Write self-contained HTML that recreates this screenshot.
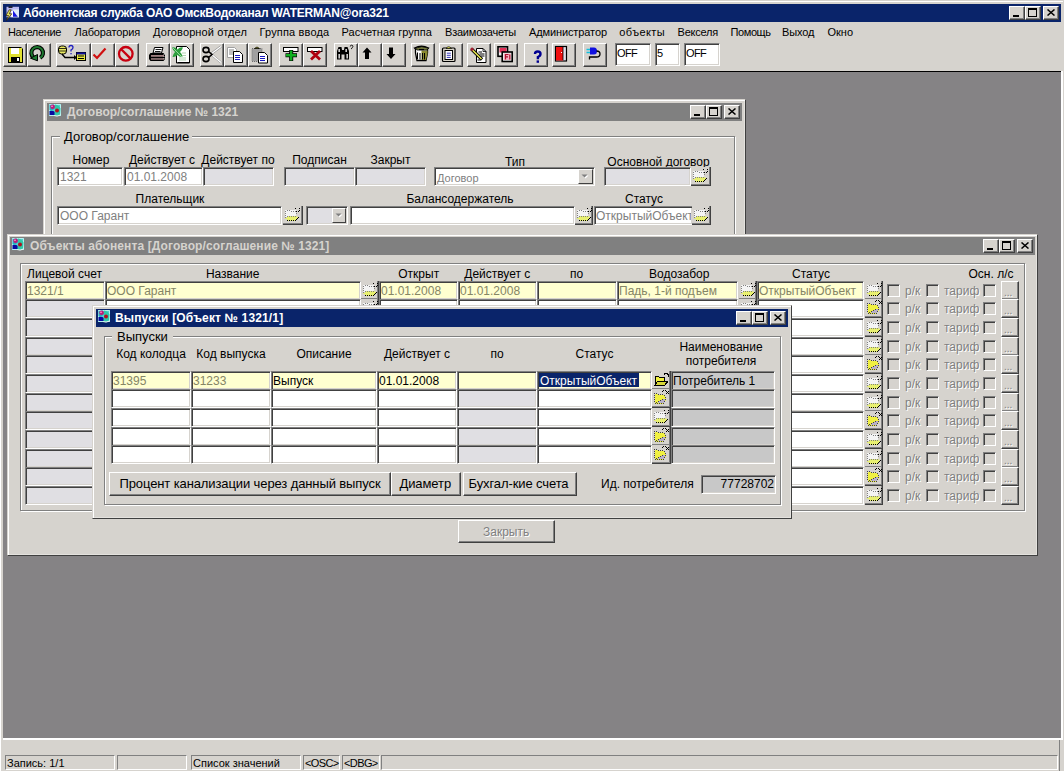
<!DOCTYPE html><html><head><meta charset="utf-8"><style>
html,body{margin:0;padding:0;width:1064px;height:771px;overflow:hidden;background:#D6D3CE;position:relative;font-family:"Liberation Sans",sans-serif;}
body div, body svg{position:absolute;}
.t{white-space:nowrap;}
</style></head><body>
<div style="left:0px;top:0px;width:1064px;height:771px;background:#D6D3CE;"></div>
<div style="left:1px;top:1px;width:1062px;height:1px;background:#FFFFFF;"></div>
<div style="left:0px;top:1px;width:1px;height:770px;background:#FFFFFF;"></div>
<div style="left:3px;top:4px;width:1058px;height:18px;background:#0A246A;"></div>
<div style="left:5px;top:5px;width:16px;height:16px"><svg width="16" height="16" viewBox="0 0 16 16"><rect x="1.5" y="1.8" width="12.5" height="10.5" fill="#b8b8f0"/><rect x="8" y="4.5" width="6" height="7.8" fill="#e0ecf8"/><rect x="3.5" y="1.5" width="4" height="1.3" fill="#000"/><path d="M8 5.5 L12.8 11.8 H8z" fill="#1818e0"/><rect x="6.2" y="6" width="1.8" height="6.2" fill="#fff"/><path d="M4.2 4.8 L1 10.5 H3.5 L1.5 15.5 L6.8 8.8 H4.3 L6.2 4.8z" fill="#e8e860" stroke="#302000" stroke-width="0.7"/></svg></div>
<div class="t" style="left:23px;top:6px;font-size:12px;line-height:14px;color:#FFFFFF;font-weight:bold;letter-spacing:-0.2px;">Абонентская служба ОАО ОмскВодоканал WATERMAN@ora321</div>
<div style="left:1009px;top:6px;width:16px;height:14px;background:#D6D3CE;border-style:solid;border-width:1px;border-color:#FFFFFF #404040 #404040 #FFFFFF;box-sizing:border-box;box-shadow:inset -1px -1px #808080;"></div>
<div style="left:1013px;top:15px;width:6px;height:2px;background:#000;"></div>
<div style="left:1025px;top:6px;width:16px;height:14px;background:#D6D3CE;border-style:solid;border-width:1px;border-color:#FFFFFF #404040 #404040 #FFFFFF;box-sizing:border-box;box-shadow:inset -1px -1px #808080;"></div>
<div style="left:1028px;top:8px;width:9px;height:9px;border:1px solid #000;border-top-width:2px;box-sizing:border-box;"></div>
<div style="left:1043px;top:6px;width:16px;height:14px;background:#D6D3CE;border-style:solid;border-width:1px;border-color:#FFFFFF #404040 #404040 #FFFFFF;box-sizing:border-box;box-shadow:inset -1px -1px #808080;"></div>
<svg style="left:1047px;top:9px" width="8" height="7" viewBox="0 0 8 7"><path d="M0.5 0.5L7.5 6.5M7.5 0.5L0.5 6.5" stroke="#000" stroke-width="1.5"/></svg>
<div class="t" style="left:7.9px;top:26px;font-size:11px;line-height:13px;color:#000;letter-spacing:-0.34px;">Население</div>
<div class="t" style="left:74.6px;top:26px;font-size:11px;line-height:13px;color:#000;letter-spacing:-0.15px;">Лаборатория</div>
<div class="t" style="left:153px;top:26px;font-size:11px;line-height:13px;color:#000;letter-spacing:0.12px;">Договорной отдел</div>
<div class="t" style="left:259.5px;top:26px;font-size:11px;line-height:13px;color:#000;letter-spacing:0.16px;">Группа ввода</div>
<div class="t" style="left:341.6px;top:26px;font-size:11px;line-height:13px;color:#000;letter-spacing:0.04px;">Расчетная группа</div>
<div class="t" style="left:445px;top:26px;font-size:11px;line-height:13px;color:#000;letter-spacing:-0.21px;">Взаимозачеты</div>
<div class="t" style="left:528.9px;top:26px;font-size:11px;line-height:13px;color:#000;letter-spacing:-0.1px;">Администратор</div>
<div class="t" style="left:619.3px;top:26px;font-size:11px;line-height:13px;color:#000;letter-spacing:0.4px;">объекты</div>
<div class="t" style="left:677.6px;top:26px;font-size:11px;line-height:13px;color:#000;letter-spacing:-0.23px;">Векселя</div>
<div class="t" style="left:730.5px;top:26px;font-size:11px;line-height:13px;color:#000;letter-spacing:-0.4px;">Помощь</div>
<div class="t" style="left:782px;top:26px;font-size:11px;line-height:13px;color:#000;letter-spacing:-0.1px;">Выход</div>
<div class="t" style="left:827.5px;top:26px;font-size:11px;line-height:13px;color:#000;letter-spacing:0px;">Окно</div>
<div style="left:3px;top:43px;width:24px;height:24px;background:#D6D3CE;border-style:solid;border-width:1px;border-color:#FFFFFF #404040 #404040 #FFFFFF;box-sizing:border-box;box-shadow:inset -1px -1px #808080;"></div>
<div style="left:27px;top:43px;width:24px;height:24px;background:#D6D3CE;border-style:solid;border-width:1px;border-color:#FFFFFF #404040 #404040 #FFFFFF;box-sizing:border-box;box-shadow:inset -1px -1px #808080;"></div>
<div style="left:91px;top:43px;width:24px;height:24px;background:#D6D3CE;border-style:solid;border-width:1px;border-color:#FFFFFF #404040 #404040 #FFFFFF;box-sizing:border-box;box-shadow:inset -1px -1px #808080;"></div>
<div style="left:115px;top:43px;width:24px;height:24px;background:#D6D3CE;border-style:solid;border-width:1px;border-color:#FFFFFF #404040 #404040 #FFFFFF;box-sizing:border-box;box-shadow:inset -1px -1px #808080;"></div>
<div style="left:146px;top:43px;width:24px;height:24px;background:#D6D3CE;border-style:solid;border-width:1px;border-color:#FFFFFF #404040 #404040 #FFFFFF;box-sizing:border-box;box-shadow:inset -1px -1px #808080;"></div>
<div style="left:170px;top:43px;width:24px;height:24px;background:#D6D3CE;border-style:solid;border-width:1px;border-color:#FFFFFF #404040 #404040 #FFFFFF;box-sizing:border-box;box-shadow:inset -1px -1px #808080;"></div>
<div style="left:200px;top:43px;width:24px;height:24px;background:#D6D3CE;border-style:solid;border-width:1px;border-color:#FFFFFF #404040 #404040 #FFFFFF;box-sizing:border-box;box-shadow:inset -1px -1px #808080;"></div>
<div style="left:224px;top:43px;width:24px;height:24px;background:#D6D3CE;border-style:solid;border-width:1px;border-color:#FFFFFF #404040 #404040 #FFFFFF;box-sizing:border-box;box-shadow:inset -1px -1px #808080;"></div>
<div style="left:248px;top:43px;width:24px;height:24px;background:#D6D3CE;border-style:solid;border-width:1px;border-color:#FFFFFF #404040 #404040 #FFFFFF;box-sizing:border-box;box-shadow:inset -1px -1px #808080;"></div>
<div style="left:279px;top:43px;width:24px;height:24px;background:#D6D3CE;border-style:solid;border-width:1px;border-color:#FFFFFF #404040 #404040 #FFFFFF;box-sizing:border-box;box-shadow:inset -1px -1px #808080;"></div>
<div style="left:303px;top:43px;width:24px;height:24px;background:#D6D3CE;border-style:solid;border-width:1px;border-color:#FFFFFF #404040 #404040 #FFFFFF;box-sizing:border-box;box-shadow:inset -1px -1px #808080;"></div>
<div style="left:334px;top:43px;width:24px;height:24px;background:#D6D3CE;border-style:solid;border-width:1px;border-color:#FFFFFF #404040 #404040 #FFFFFF;box-sizing:border-box;box-shadow:inset -1px -1px #808080;"></div>
<div style="left:358px;top:43px;width:24px;height:24px;background:#D6D3CE;border-style:solid;border-width:1px;border-color:#FFFFFF #404040 #404040 #FFFFFF;box-sizing:border-box;box-shadow:inset -1px -1px #808080;"></div>
<div style="left:382px;top:43px;width:24px;height:24px;background:#D6D3CE;border-style:solid;border-width:1px;border-color:#FFFFFF #404040 #404040 #FFFFFF;box-sizing:border-box;box-shadow:inset -1px -1px #808080;"></div>
<div style="left:411px;top:43px;width:24px;height:24px;background:#D6D3CE;border-style:solid;border-width:1px;border-color:#FFFFFF #404040 #404040 #FFFFFF;box-sizing:border-box;box-shadow:inset -1px -1px #808080;"></div>
<div style="left:439px;top:43px;width:24px;height:24px;background:#D6D3CE;border-style:solid;border-width:1px;border-color:#FFFFFF #404040 #404040 #FFFFFF;box-sizing:border-box;box-shadow:inset -1px -1px #808080;"></div>
<div style="left:467px;top:43px;width:24px;height:24px;background:#D6D3CE;border-style:solid;border-width:1px;border-color:#FFFFFF #404040 #404040 #FFFFFF;box-sizing:border-box;box-shadow:inset -1px -1px #808080;"></div>
<div style="left:494px;top:43px;width:24px;height:24px;background:#D6D3CE;border-style:solid;border-width:1px;border-color:#FFFFFF #404040 #404040 #FFFFFF;box-sizing:border-box;box-shadow:inset -1px -1px #808080;"></div>
<div style="left:524px;top:43px;width:24px;height:24px;background:#D6D3CE;border-style:solid;border-width:1px;border-color:#FFFFFF #404040 #404040 #FFFFFF;box-sizing:border-box;box-shadow:inset -1px -1px #808080;"></div>
<div style="left:552px;top:43px;width:24px;height:24px;background:#D6D3CE;border-style:solid;border-width:1px;border-color:#FFFFFF #404040 #404040 #FFFFFF;box-sizing:border-box;box-shadow:inset -1px -1px #808080;"></div>
<div style="left:583px;top:43px;width:24px;height:24px;background:#D6D3CE;border-style:solid;border-width:1px;border-color:#FFFFFF #404040 #404040 #FFFFFF;box-sizing:border-box;box-shadow:inset -1px -1px #808080;"></div>
<div style="left:56px;top:43px;width:35px;height:24px;background:#D6D3CE;border-style:solid;border-width:1px;border-color:#FFFFFF #404040 #404040 #FFFFFF;box-sizing:border-box;box-shadow:inset -1px -1px #808080;"></div>
<svg style="left:0;top:0" width="1064" height="72" viewBox="0 0 1064 72"><g transform="translate(3,43)"><path d="M5 4h13l2 2v14h-15z" fill="#000"/><rect x="6" y="5" width="13" height="14" fill="#e0e030"/><rect x="8" y="5" width="8" height="6" fill="#fff"/><rect x="8" y="14" width="9" height="6" fill="#000"/><rect x="14" y="15" width="2" height="3" fill="#fff"/></g><g transform="translate(27,43)"><path d="M13.2 14.8 A5.8 5.8 0 1 0 6.8 14.6" fill="none" stroke="#000" stroke-width="4.2"/><path d="M13.2 14.8 A5.8 5.8 0 1 0 6.8 14.6" fill="none" stroke="#1e7a30" stroke-width="2"/><path d="M3.5 15.2 L10.5 11.5 L10.5 17.8 Z" fill="#1e7a30" stroke="#000" stroke-width="1"/></g><g transform="translate(56,43)"><rect x="2.5" y="3" width="8" height="8" rx="3" fill="#e8e860" stroke="#000"/><path d="M3 5.5h7M3 8h7" stroke="#000" stroke-width="0.8"/><path d="M13 4.5 q0-2 2-2 q2 0 2 2 q0 1.5 -2 2.5 v1.5" fill="none" stroke="#2020c0" stroke-width="1.3"/><rect x="14.4" y="10" width="1.3" height="1.3" fill="#2020c0"/><path d="M6 11 l3 3.5 h10" fill="none" stroke="#000" stroke-width="1.4"/><path d="M18 12 l3 2.5 -3 2.5z" fill="#000"/><rect x="20.5" y="9.5" width="9" height="8" fill="#e8e840" stroke="#000"/><rect x="20.5" y="9.5" width="9" height="2" fill="#1010a0"/><path d="M22 13h6M22 15.5h6" stroke="#000" stroke-width="1"/></g><g transform="translate(91,43)"><path d="M2.5 11.5 L6 15 L14.5 5.5" fill="none" stroke="#d01010" stroke-width="2.2" stroke-linejoin="miter"/></g><g transform="translate(115,43)"><circle cx="10.8" cy="10.8" r="6.8" fill="none" stroke="#c80010" stroke-width="2.3"/><path d="M6.2 6.2 L15.4 15.4" stroke="#c80010" stroke-width="2.3"/></g><g transform="translate(146,43)"><path d="M8.5 4.5 h8.5 l-1.5 5.5 h-8.5z" fill="#fff" stroke="#000"/><path d="M9.5 6.5h6M9 8.5h5.5" stroke="#000" stroke-width="0.9"/><path d="M4.5 10 h13 l1.5 2 v4 l-1.5 2 h-13 l-1.5 -2 v-4z" fill="#000"/><rect x="5" y="12" width="13" height="1.8" fill="#a08080"/><rect x="5" y="15.2" width="13" height="1.5" fill="#a08080"/><path d="M18 11v6" stroke="#d0d0d0" stroke-width="0.8" stroke-dasharray="1 1"/></g><g transform="translate(170,43)"><path d="M6.5 3.5h10l3 3v13.5h-13z" fill="#fff" stroke="#000"/><path d="M7.5 19.5 h12" stroke="#000" stroke-width="1"/><path d="M2 4.5 q3 -1 5.5 2 q2.5 -3 5.5 -2 q-1 3 -3 4.5 q2 1.5 2.5 5 q-3 0.5 -5 -2 q-2.5 2.5 -5 2 q0.5 -3 2.5 -5 q-2 -1.5 -3 -4.5z" fill="#30a040"/><path d="M3 5 L12 14" stroke="#c0f0c0" stroke-width="0.7"/><path d="M12 10h4M12 12.5h4M9 15h7M9 17h7" stroke="#90c090" stroke-width="0.7"/></g><g transform="translate(200,43)"><path d="M11 11 L21 3.5 M11 11 L21 19.5" stroke="#909090" stroke-width="2.2"/><path d="M11 11 L21 3.5 M11 11 L21 19.5" stroke="#fff" stroke-width="1.2"/><ellipse cx="6" cy="7" rx="3" ry="2.6" fill="none" stroke="#000" stroke-width="1.6"/><ellipse cx="6" cy="16" rx="3" ry="2.6" fill="none" stroke="#000" stroke-width="1.6"/><path d="M8.5 8.5 L12 11.5 L8.5 14.5" fill="none" stroke="#000" stroke-width="1.6"/></g><g transform="translate(224,43)"><path d="M3.5 4.5h7l2 2v8h-9z" fill="#fff" stroke="#a0a0a0"/><path d="M5 7h5M5 9h5M5 11h5" stroke="#606060" stroke-width="0.8"/><path d="M9.5 8.5h6l3 3v8h-9z" fill="#fff" stroke="#000"/><path d="M11 12.5h5M11 14.5h5M11 16.5h5" stroke="#1818c0" stroke-width="1"/></g><g transform="translate(248,43)"><rect x="4" y="5.5" width="10" height="13" fill="#a0a0a0" stroke="#707070" stroke-dasharray="1 1"/><path d="M6.5 5.5 q2.5-3 5 0z" fill="#e0e040" stroke="#000" stroke-width="0.8"/><path d="M10.5 9.5h6l3 3v7.5h-9z" fill="#fff" stroke="#000"/><path d="M12 13.5h5M12 15.5h5M12 17.5h5" stroke="#1818c0" stroke-width="1"/></g><g transform="translate(279,43)"><rect x="4.5" y="4.5" width="14.5" height="4" fill="#fff" stroke="#000"/><path d="M12.2 7 v11 M6.5 12.2 h11.5" stroke="#000" stroke-width="4"/><path d="M12.2 7.5 v10 M7 12.2 h10.5" stroke="#10b020" stroke-width="2.4"/></g><g transform="translate(303,43)"><rect x="4.5" y="4.5" width="14.5" height="4" fill="#fff" stroke="#000"/><path d="M8 8 L17 16.5 M17 8 L8 16.5" stroke="#b00010" stroke-width="2.8"/></g><g transform="translate(334,43)"><path d="M3 8 l1.5-4 h3 l0.5 3 h2 l0.5-3 h3 l1.5 4 v8.5 h-4.5 v-5 h-3 v5 h-4.5z" fill="#000"/><rect x="4.5" y="6" width="1.3" height="3" fill="#fff"/><rect x="11.5" y="6" width="1.3" height="3" fill="#fff"/><rect x="4.5" y="11" width="1.3" height="4.5" fill="#fff"/><rect x="12.5" y="11" width="1.3" height="4.5" fill="#fff"/><path d="M16.3 3.5 q0-1.3 1.3-1.3 q1.3 0 1.3 1.3 q0 1 -1.3 1.6 v1" fill="none" stroke="#000" stroke-width="0.9"/></g><g transform="translate(358,43)"><path d="M4.5 9.5 L9 4.5 L13.5 9.5 H11 V16 H7 V9.5Z" fill="#000"/></g><g transform="translate(382,43)"><path d="M7 4.5 H11 V11 H13.5 L9 16 L4.5 11 H7Z" fill="#000"/></g><g transform="translate(411,43)"><path d="M3.5 5 l1 1 v4 l1.5 7.5 h9 l1.5 -7.5 v-4 l1 -1 q-7 -3.5 -14 0z" fill="#fff" stroke="#000" stroke-width="1.3"/><path d="M10.5 7.5 h6 v3 l-1.5 6.5 h-4.5z" fill="#8a8a30"/><path d="M4.5 5.2 q6 -3 13 0 l-1.5 1.8 h-10z" fill="#7a8040" stroke="#000" stroke-width="0.8"/><path d="M8 6.5 h5" stroke="#000" stroke-width="1.2"/><path d="M6.5 9.5v6.5M9 10v6.5M11.5 10v6.5M13.5 10v6.5" stroke="#000" stroke-width="1"/></g><g transform="translate(439,43)"><rect x="3.5" y="5" width="12.5" height="13.5" rx="1" fill="#d8d4c8" stroke="#000" stroke-width="1.2"/><rect x="6" y="7.5" width="7.5" height="9" fill="#fff" stroke="#000" stroke-width="1"/><path d="M7 5.5 q2.7 -3.5 5.5 0z" fill="#e8e850" stroke="#000" stroke-width="0.7"/><path d="M7.8 10.2h4M7.8 12.3h4M7.8 14.4h4" stroke="#2020b0" stroke-width="0.9"/></g><g transform="translate(467,43)"><path d="M9.5 5.5h6.5l3 3v11h-9.5z" fill="#fff" stroke="#000"/><path d="M16 5.5v3h3" fill="none" stroke="#000" stroke-width="0.8"/><path d="M11.5 9h3.5M12.5 11h5M13.5 13h4M10.5 17h3" stroke="#000" stroke-width="1"/><path d="M4.5 6 L15 16.5" stroke="#000" stroke-width="3.2"/><path d="M5 6.5 L14.5 16" stroke="#e8e850" stroke-width="1.6"/><circle cx="5" cy="6.2" r="1.6" fill="#a02030"/></g><g transform="translate(494,43)"><rect x="4" y="3.8" width="9.5" height="9.5" fill="#f0f0f0" stroke="#000" stroke-width="1.6"/><rect x="5.5" y="5" width="7" height="4.5" fill="#e03058"/><rect x="8.2" y="9" width="10" height="9.5" fill="#f0f0f0" stroke="#000" stroke-width="1.6"/><rect x="9.8" y="10.5" width="6.8" height="6.5" fill="#f4b0c0"/><path d="M11.5 16.5v-5h3M11.5 13.8h2.5M15.8 11.5v5" stroke="#b01030" stroke-width="1.2" fill="none"/></g><g transform="translate(524,43)"><path d="M11 11 q0 -2.5 2.7 -2.5 q2.8 0 2.8 2.5 q0 2 -2.6 3 v2.2" fill="none" stroke="#000090" stroke-width="2.4"/><rect x="12.6" y="17.4" width="2.4" height="2.4" fill="#000090"/></g><g transform="translate(552,43)"><rect x="3.5" y="3.5" width="11" height="14.5" fill="#e0dce8" stroke="#000" stroke-width="1.2"/><rect x="4" y="4" width="7" height="13.5" fill="#f01010"/><path d="M11 4v13" stroke="#000" stroke-width="0.8"/><rect x="9" y="9" width="1" height="1" fill="#fff"/></g><g transform="translate(583,43)"><path d="M3.5 6.5h4M3.5 9.5h4" stroke="#10c0e0" stroke-width="1.3"/><path d="M7 4.5 h4 q3 0 3 3.5 q0 3.5 -3 3.5 h-4z" fill="#1010e0"/><path d="M13.5 8 q3.5 0 3.5 3 q0 3 -3.5 3 h-7 v2.5" fill="none" stroke="#000" stroke-width="1.3"/></g></svg>
<div style="left:615px;top:43px;width:36px;height:23px;background:#FFFFFF;border-style:solid;border-width:1px;border-color:#808080 #FFFFFF #FFFFFF #808080;box-sizing:border-box;box-shadow:inset 1px 1px #404040, inset -1px -1px #D6D3CE;"></div>
<div class="t" style="left:617px;top:47px;font-size:11px;line-height:13px;color:#000;letter-spacing:-0.6px;">OFF</div>
<div style="left:655px;top:43px;width:25px;height:23px;background:#FFFFFF;border-style:solid;border-width:1px;border-color:#808080 #FFFFFF #FFFFFF #808080;box-sizing:border-box;box-shadow:inset 1px 1px #404040, inset -1px -1px #D6D3CE;"></div>
<div class="t" style="left:657px;top:47px;font-size:11px;line-height:13px;color:#000;">5</div>
<div style="left:684px;top:43px;width:36px;height:23px;background:#FFFFFF;border-style:solid;border-width:1px;border-color:#808080 #FFFFFF #FFFFFF #808080;box-sizing:border-box;box-shadow:inset 1px 1px #404040, inset -1px -1px #D6D3CE;"></div>
<div class="t" style="left:686px;top:47px;font-size:11px;line-height:13px;color:#000;letter-spacing:-0.6px;">OFF</div>
<div style="left:3px;top:71px;width:1058px;height:667px;background:#858385;"></div>
<div style="left:3px;top:71px;width:1058px;height:1px;background:#000;"></div>
<div style="left:3px;top:738px;width:1058px;height:2px;background:#FFFFFF;"></div>
<div style="left:1061px;top:71px;width:2px;height:669px;background:#FFFFFF;"></div>
<div style="left:1059px;top:740px;width:1px;height:31px;background:#808080;"></div>
<div style="left:5px;top:755px;width:110px;height:15px;border-style:solid;border-width:1px;border-color:#808080 #FFFFFF #FFFFFF #808080;box-sizing:border-box;"></div>
<div class="t" style="left:7px;top:757px;font-size:11px;line-height:13px;color:#000;">Запись: 1/1</div>
<div style="left:117px;top:755px;width:70px;height:15px;border-style:solid;border-width:1px;border-color:#808080 #FFFFFF #FFFFFF #808080;box-sizing:border-box;"></div>
<div style="left:191px;top:755px;width:110px;height:15px;border-style:solid;border-width:1px;border-color:#808080 #FFFFFF #FFFFFF #808080;box-sizing:border-box;"></div>
<div class="t" style="left:193px;top:757px;font-size:11px;line-height:13px;color:#000;">Список значений</div>
<div style="left:303px;top:755px;width:37px;height:15px;border-style:solid;border-width:1px;border-color:#808080 #FFFFFF #FFFFFF #808080;box-sizing:border-box;"></div>
<div class="t" style="left:305px;top:757px;font-size:11px;line-height:13px;color:#000;letter-spacing:-0.6px;">&lt;OSC&gt;</div>
<div style="left:342px;top:755px;width:38px;height:15px;border-style:solid;border-width:1px;border-color:#808080 #FFFFFF #FFFFFF #808080;box-sizing:border-box;"></div>
<div class="t" style="left:344px;top:757px;font-size:11px;line-height:13px;color:#000;letter-spacing:-0.6px;">&lt;DBG&gt;</div>
<div style="left:381px;top:755px;width:677px;height:15px;border-style:solid;border-width:1px;border-color:#808080 #FFFFFF #FFFFFF #808080;box-sizing:border-box;"></div>
<div style="left:43px;top:99px;width:703px;height:140px;background:#D6D3CE;border-style:solid;border-width:1px;border-color:#D6D3CE #404040 #404040 #D6D3CE;box-sizing:border-box;box-shadow:inset 1px 1px #FFFFFF, inset -1px -1px #E4E2DE;"></div>
<div style="left:47px;top:103px;width:695px;height:18px;background:#808080;"></div>
<div style="left:49px;top:104px;width:16px;height:16px"><svg width="16" height="16" viewBox="0 0 16 16"><rect x="0" y="0" width="12" height="12" fill="#58d0d0"/><path d="M0.5 0.5h11v11h-11z" fill="none" stroke="#b8f0f0" stroke-width="1"/><path d="M0.5 1 L5 0.5 L6 4 L3 7 L0.5 6z" fill="#28b0c0"/><path d="M6 0.5 q4 0.5 5.5 4 l-0.5 6 q-3 2 -6 1 l-1 -3 q3 -1 2 -4z" fill="#30c8a8"/><circle cx="3.6" cy="2.8" r="2.3" fill="#c01878"/><circle cx="3" cy="2.2" r="0.8" fill="#ffb0e0"/><circle cx="8" cy="6.4" r="2" fill="#b01020"/><path d="M0.5 7 h4 l1 1 v3 h-5z" fill="#0808a0"/><path d="M5 11.5 q3 1.5 6.5 -0.5" stroke="#e8f0f0" stroke-width="1" fill="none"/></svg></div>
<div class="t" style="left:67px;top:105px;font-size:12px;line-height:14px;color:#D6D3CE;font-weight:bold;">Договор/соглашение № 1321</div>
<div style="left:724px;top:105px;width:16px;height:14px;background:#D6D3CE;border-style:solid;border-width:1px;border-color:#FFFFFF #404040 #404040 #FFFFFF;box-sizing:border-box;box-shadow:inset -1px -1px #808080;"></div>
<svg style="left:728px;top:108px" width="8" height="7" viewBox="0 0 8 7"><path d="M0.5 0.5L7.5 6.5M7.5 0.5L0.5 6.5" stroke="#000" stroke-width="1.5"/></svg>
<div style="left:706px;top:105px;width:16px;height:14px;background:#D6D3CE;border-style:solid;border-width:1px;border-color:#FFFFFF #404040 #404040 #FFFFFF;box-sizing:border-box;box-shadow:inset -1px -1px #808080;"></div>
<div style="left:709px;top:107px;width:9px;height:9px;border:1px solid #000;border-top-width:2px;box-sizing:border-box;"></div>
<div style="left:690px;top:105px;width:16px;height:14px;background:#D6D3CE;border-style:solid;border-width:1px;border-color:#FFFFFF #404040 #404040 #FFFFFF;box-sizing:border-box;box-shadow:inset -1px -1px #808080;"></div>
<div style="left:694px;top:114px;width:6px;height:2px;background:#000;"></div>
<div style="left:51px;top:136px;width:684px;height:110px;border:1px solid #808080;box-sizing:border-box;box-shadow:inset 1px 1px #FFFFFF, 1px 1px #FFFFFF;"></div>
<div style="left:60px;top:128px;width:132px;height:14px;background:#D6D3CE;"></div>
<div class="t" style="left:64px;top:129px;font-size:13px;line-height:15px;color:#000;">Договор/соглашение</div>
<div class="t" style="left:-109px;width:400px;text-align:center;top:153px;font-size:12px;line-height:14px;color:#000;">Номер</div>
<div class="t" style="left:-38px;width:400px;text-align:center;top:153px;font-size:12px;line-height:14px;color:#000;">Действует с</div>
<div class="t" style="left:38px;width:400px;text-align:center;top:153px;font-size:12px;line-height:14px;color:#000;">Действует по</div>
<div class="t" style="left:119.5px;width:400px;text-align:center;top:153px;font-size:12px;line-height:14px;color:#000;">Подписан</div>
<div class="t" style="left:190.5px;width:400px;text-align:center;top:153px;font-size:12px;line-height:14px;color:#000;">Закрыт</div>
<div class="t" style="left:315px;width:400px;text-align:center;top:155px;font-size:12px;line-height:14px;color:#000;">Тип</div>
<div class="t" style="left:458.5px;width:400px;text-align:center;top:155px;font-size:12px;line-height:14px;color:#000;">Основной договор</div>
<div style="left:57px;top:167px;width:66px;height:19px;background:#FFFFFF;border-style:solid;border-width:1px;border-color:#808080 #FFFFFF #FFFFFF #808080;box-sizing:border-box;box-shadow:inset 1px 1px #404040, inset -1px -1px #D6D3CE;"></div>
<div class="t" style="left:60px;top:170px;font-size:12px;line-height:14px;color:#808080;">1321</div>
<div style="left:124px;top:167px;width:79px;height:19px;background:#FFFFFF;border-style:solid;border-width:1px;border-color:#808080 #FFFFFF #FFFFFF #808080;box-sizing:border-box;box-shadow:inset 1px 1px #404040, inset -1px -1px #D6D3CE;"></div>
<div class="t" style="left:127px;top:170px;font-size:12px;line-height:14px;color:#808080;">01.01.2008</div>
<div style="left:203px;top:167px;width:71px;height:19px;background:#E0DFE3;border-style:solid;border-width:1px;border-color:#808080 #FFFFFF #FFFFFF #808080;box-sizing:border-box;box-shadow:inset 1px 1px #404040, inset -1px -1px #D6D3CE;"></div>
<div style="left:284px;top:167px;width:71px;height:19px;background:#E0DFE3;border-style:solid;border-width:1px;border-color:#808080 #FFFFFF #FFFFFF #808080;box-sizing:border-box;box-shadow:inset 1px 1px #404040, inset -1px -1px #D6D3CE;"></div>
<div style="left:355px;top:167px;width:71px;height:19px;background:#E0DFE3;border-style:solid;border-width:1px;border-color:#808080 #FFFFFF #FFFFFF #808080;box-sizing:border-box;box-shadow:inset 1px 1px #404040, inset -1px -1px #D6D3CE;"></div>
<div style="left:434px;top:167px;width:161px;height:19px;background:#FFFFFF;border-style:solid;border-width:1px;border-color:#808080 #FFFFFF #FFFFFF #808080;box-sizing:border-box;box-shadow:inset 1px 1px #404040, inset -1px -1px #D6D3CE;"></div>
<div class="t" style="left:437px;top:172px;font-size:11px;line-height:13px;color:#808080;">Договор</div>
<div style="left:578px;top:169px;width:15px;height:15px;background:#D6D3CE;border-style:solid;border-width:1px;border-color:#FFFFFF #404040 #404040 #FFFFFF;box-sizing:border-box;"></div>
<svg style="left:581px;top:174px" width="9" height="5" viewBox="0 0 9 5"><path d="M1.5 1.5h6l-3 3z" fill="#FFFFFF"/><path d="M0.5 0.5h6l-3 3z" fill="#808080"/></svg>
<div style="left:604px;top:167px;width:87px;height:19px;background:#E0DFE3;border-style:solid;border-width:1px;border-color:#808080 #FFFFFF #FFFFFF #808080;box-sizing:border-box;box-shadow:inset 1px 1px #404040, inset -1px -1px #D6D3CE;"></div>
<div style="left:691px;top:167px;width:20px;height:19px;background:#D6D3CE;border-style:solid;border-width:0 1px 1px 0;border-color:#404040;box-sizing:border-box;box-shadow:inset -1px -1px #808080;"></div>
<svg style="left:691px;top:167px" width="20" height="19" viewBox="0 0 20 19" shape-rendering="crispEdges"><rect x="2" y="4" width="11" height="7" fill="#f4f4f4"/><path d="M2.5 12.5 L4.5 14.5 H12.5 L15.5 11.5 L13 10 H6 Z" fill="#e8f070"/><rect x="2" y="5" width="1" height="1" fill="#808080"/><rect x="2" y="7" width="1" height="1" fill="#808080"/><rect x="2" y="9" width="1" height="1" fill="#808080"/><rect x="2" y="11" width="1" height="1" fill="#808080"/><rect x="4" y="4" width="1" height="1" fill="#808080"/><rect x="6" y="4" width="1" height="1" fill="#808080"/><rect x="8" y="5" width="1" height="1" fill="#808080"/><rect x="10" y="5" width="1" height="1" fill="#808080"/><rect x="12" y="5" width="1" height="1" fill="#808080"/><rect x="13" y="7" width="1" height="1" fill="#808080"/><rect x="4" y="10" width="1" height="1" fill="#808080"/><rect x="6" y="10" width="1" height="1" fill="#808080"/><rect x="8" y="10" width="1" height="1" fill="#808080"/><rect x="10" y="10" width="1" height="1" fill="#808080"/><rect x="12" y="10" width="1" height="1" fill="#808080"/><rect x="4" y="14" width="1" height="1" fill="#000"/><rect x="6" y="14" width="1" height="1" fill="#000"/><rect x="8" y="14" width="1" height="1" fill="#000"/><rect x="10" y="14" width="1" height="1" fill="#000"/><rect x="12" y="14" width="1" height="1" fill="#000"/><rect x="13" y="13" width="1" height="1" fill="#000"/><rect x="14" y="12" width="1" height="1" fill="#000"/><rect x="15" y="11" width="1" height="1" fill="#000"/><rect x="12" y="2" width="1" height="1" fill="#000"/><rect x="16" y="2" width="1" height="1" fill="#000"/><rect x="13" y="5" width="1" height="1" fill="#000"/><rect x="15" y="5" width="1" height="1" fill="#000"/><rect x="16" y="4" width="1" height="1" fill="#000"/></svg>
<div class="t" style="left:-30px;width:400px;text-align:center;top:192px;font-size:12px;line-height:14px;color:#000;">Плательщик</div>
<div class="t" style="left:260px;width:400px;text-align:center;top:192px;font-size:12px;line-height:14px;color:#000;">Балансодержатель</div>
<div class="t" style="left:444px;width:400px;text-align:center;top:192px;font-size:12px;line-height:14px;color:#000;">Статус</div>
<div style="left:57px;top:206px;width:225px;height:19px;background:#FFFFFF;border-style:solid;border-width:1px;border-color:#808080 #FFFFFF #FFFFFF #808080;box-sizing:border-box;box-shadow:inset 1px 1px #404040, inset -1px -1px #D6D3CE;"></div>
<div class="t" style="left:60px;top:209px;font-size:12px;line-height:14px;color:#808080;">ООО Гарант</div>
<div style="left:283px;top:206px;width:20px;height:19px;background:#D6D3CE;border-style:solid;border-width:0 1px 1px 0;border-color:#404040;box-sizing:border-box;box-shadow:inset -1px -1px #808080;"></div>
<svg style="left:283px;top:206px" width="20" height="19" viewBox="0 0 20 19" shape-rendering="crispEdges"><rect x="2" y="4" width="11" height="7" fill="#f4f4f4"/><path d="M2.5 12.5 L4.5 14.5 H12.5 L15.5 11.5 L13 10 H6 Z" fill="#e8f070"/><rect x="2" y="5" width="1" height="1" fill="#808080"/><rect x="2" y="7" width="1" height="1" fill="#808080"/><rect x="2" y="9" width="1" height="1" fill="#808080"/><rect x="2" y="11" width="1" height="1" fill="#808080"/><rect x="4" y="4" width="1" height="1" fill="#808080"/><rect x="6" y="4" width="1" height="1" fill="#808080"/><rect x="8" y="5" width="1" height="1" fill="#808080"/><rect x="10" y="5" width="1" height="1" fill="#808080"/><rect x="12" y="5" width="1" height="1" fill="#808080"/><rect x="13" y="7" width="1" height="1" fill="#808080"/><rect x="4" y="10" width="1" height="1" fill="#808080"/><rect x="6" y="10" width="1" height="1" fill="#808080"/><rect x="8" y="10" width="1" height="1" fill="#808080"/><rect x="10" y="10" width="1" height="1" fill="#808080"/><rect x="12" y="10" width="1" height="1" fill="#808080"/><rect x="4" y="14" width="1" height="1" fill="#000"/><rect x="6" y="14" width="1" height="1" fill="#000"/><rect x="8" y="14" width="1" height="1" fill="#000"/><rect x="10" y="14" width="1" height="1" fill="#000"/><rect x="12" y="14" width="1" height="1" fill="#000"/><rect x="13" y="13" width="1" height="1" fill="#000"/><rect x="14" y="12" width="1" height="1" fill="#000"/><rect x="15" y="11" width="1" height="1" fill="#000"/><rect x="12" y="2" width="1" height="1" fill="#000"/><rect x="16" y="2" width="1" height="1" fill="#000"/><rect x="13" y="5" width="1" height="1" fill="#000"/><rect x="15" y="5" width="1" height="1" fill="#000"/><rect x="16" y="4" width="1" height="1" fill="#000"/></svg>
<div style="left:306px;top:206px;width:42px;height:19px;background:#E0DFE3;border-style:solid;border-width:1px;border-color:#808080 #FFFFFF #FFFFFF #808080;box-sizing:border-box;box-shadow:inset 1px 1px #404040, inset -1px -1px #D6D3CE;"></div>
<div style="left:332px;top:208px;width:14px;height:15px;background:#D6D3CE;border-style:solid;border-width:1px;border-color:#FFFFFF #404040 #404040 #FFFFFF;box-sizing:border-box;"></div>
<svg style="left:335px;top:213px" width="9" height="5" viewBox="0 0 9 5"><path d="M1.5 1.5h6l-3 3z" fill="#FFFFFF"/><path d="M0.5 0.5h6l-3 3z" fill="#808080"/></svg>
<div style="left:350px;top:206px;width:225px;height:19px;background:#FFFFFF;border-style:solid;border-width:1px;border-color:#808080 #FFFFFF #FFFFFF #808080;box-sizing:border-box;box-shadow:inset 1px 1px #404040, inset -1px -1px #D6D3CE;"></div>
<div style="left:575px;top:206px;width:18px;height:19px;background:#D6D3CE;border-style:solid;border-width:0 1px 1px 0;border-color:#404040;box-sizing:border-box;box-shadow:inset -1px -1px #808080;"></div>
<svg style="left:575px;top:206px" width="18" height="19" viewBox="0 0 18 19" shape-rendering="crispEdges"><rect x="2" y="4" width="11" height="7" fill="#f4f4f4"/><path d="M2.5 12.5 L4.5 14.5 H12.5 L15.5 11.5 L13 10 H6 Z" fill="#e8f070"/><rect x="2" y="5" width="1" height="1" fill="#808080"/><rect x="2" y="7" width="1" height="1" fill="#808080"/><rect x="2" y="9" width="1" height="1" fill="#808080"/><rect x="2" y="11" width="1" height="1" fill="#808080"/><rect x="4" y="4" width="1" height="1" fill="#808080"/><rect x="6" y="4" width="1" height="1" fill="#808080"/><rect x="8" y="5" width="1" height="1" fill="#808080"/><rect x="10" y="5" width="1" height="1" fill="#808080"/><rect x="12" y="5" width="1" height="1" fill="#808080"/><rect x="13" y="7" width="1" height="1" fill="#808080"/><rect x="4" y="10" width="1" height="1" fill="#808080"/><rect x="6" y="10" width="1" height="1" fill="#808080"/><rect x="8" y="10" width="1" height="1" fill="#808080"/><rect x="10" y="10" width="1" height="1" fill="#808080"/><rect x="12" y="10" width="1" height="1" fill="#808080"/><rect x="4" y="14" width="1" height="1" fill="#000"/><rect x="6" y="14" width="1" height="1" fill="#000"/><rect x="8" y="14" width="1" height="1" fill="#000"/><rect x="10" y="14" width="1" height="1" fill="#000"/><rect x="12" y="14" width="1" height="1" fill="#000"/><rect x="13" y="13" width="1" height="1" fill="#000"/><rect x="14" y="12" width="1" height="1" fill="#000"/><rect x="15" y="11" width="1" height="1" fill="#000"/><rect x="12" y="2" width="1" height="1" fill="#000"/><rect x="16" y="2" width="1" height="1" fill="#000"/><rect x="13" y="5" width="1" height="1" fill="#000"/><rect x="15" y="5" width="1" height="1" fill="#000"/><rect x="16" y="4" width="1" height="1" fill="#000"/></svg>
<div style="left:594px;top:206px;width:99px;height:19px;background:#FFFFFF;border-style:solid;border-width:1px;border-color:#808080 #FFFFFF #FFFFFF #808080;box-sizing:border-box;box-shadow:inset 1px 1px #404040, inset -1px -1px #D6D3CE;"></div>
<div style="left:596px;top:208px;width:95px;height:16px;overflow:hidden">
<div class="t" style="left:0px;top:1px;font-size:12px;line-height:14px;color:#808080;">ОткрытыйОбъект</div>
</div>
<div style="left:692px;top:206px;width:19px;height:19px;background:#D6D3CE;border-style:solid;border-width:0 1px 1px 0;border-color:#404040;box-sizing:border-box;box-shadow:inset -1px -1px #808080;"></div>
<svg style="left:692px;top:206px" width="19" height="19" viewBox="0 0 19 19" shape-rendering="crispEdges"><rect x="2" y="4" width="11" height="7" fill="#f4f4f4"/><path d="M2.5 12.5 L4.5 14.5 H12.5 L15.5 11.5 L13 10 H6 Z" fill="#e8f070"/><rect x="2" y="5" width="1" height="1" fill="#808080"/><rect x="2" y="7" width="1" height="1" fill="#808080"/><rect x="2" y="9" width="1" height="1" fill="#808080"/><rect x="2" y="11" width="1" height="1" fill="#808080"/><rect x="4" y="4" width="1" height="1" fill="#808080"/><rect x="6" y="4" width="1" height="1" fill="#808080"/><rect x="8" y="5" width="1" height="1" fill="#808080"/><rect x="10" y="5" width="1" height="1" fill="#808080"/><rect x="12" y="5" width="1" height="1" fill="#808080"/><rect x="13" y="7" width="1" height="1" fill="#808080"/><rect x="4" y="10" width="1" height="1" fill="#808080"/><rect x="6" y="10" width="1" height="1" fill="#808080"/><rect x="8" y="10" width="1" height="1" fill="#808080"/><rect x="10" y="10" width="1" height="1" fill="#808080"/><rect x="12" y="10" width="1" height="1" fill="#808080"/><rect x="4" y="14" width="1" height="1" fill="#000"/><rect x="6" y="14" width="1" height="1" fill="#000"/><rect x="8" y="14" width="1" height="1" fill="#000"/><rect x="10" y="14" width="1" height="1" fill="#000"/><rect x="12" y="14" width="1" height="1" fill="#000"/><rect x="13" y="13" width="1" height="1" fill="#000"/><rect x="14" y="12" width="1" height="1" fill="#000"/><rect x="15" y="11" width="1" height="1" fill="#000"/><rect x="12" y="2" width="1" height="1" fill="#000"/><rect x="16" y="2" width="1" height="1" fill="#000"/><rect x="13" y="5" width="1" height="1" fill="#000"/><rect x="15" y="5" width="1" height="1" fill="#000"/><rect x="16" y="4" width="1" height="1" fill="#000"/></svg>
<div style="left:7px;top:234px;width:1031px;height:322px;background:#D6D3CE;border-style:solid;border-width:1px;border-color:#D6D3CE #404040 #404040 #D6D3CE;box-sizing:border-box;box-shadow:inset 1px 1px #FFFFFF, inset -1px -1px #E4E2DE;"></div>
<div style="left:10px;top:237px;width:1025px;height:18px;background:#808080;"></div>
<div style="left:12px;top:238px;width:16px;height:16px"><svg width="16" height="16" viewBox="0 0 16 16"><rect x="0" y="0" width="12" height="12" fill="#58d0d0"/><path d="M0.5 0.5h11v11h-11z" fill="none" stroke="#b8f0f0" stroke-width="1"/><path d="M0.5 1 L5 0.5 L6 4 L3 7 L0.5 6z" fill="#28b0c0"/><path d="M6 0.5 q4 0.5 5.5 4 l-0.5 6 q-3 2 -6 1 l-1 -3 q3 -1 2 -4z" fill="#30c8a8"/><circle cx="3.6" cy="2.8" r="2.3" fill="#c01878"/><circle cx="3" cy="2.2" r="0.8" fill="#ffb0e0"/><circle cx="8" cy="6.4" r="2" fill="#b01020"/><path d="M0.5 7 h4 l1 1 v3 h-5z" fill="#0808a0"/><path d="M5 11.5 q3 1.5 6.5 -0.5" stroke="#e8f0f0" stroke-width="1" fill="none"/></svg></div>
<div class="t" style="left:30px;top:239px;font-size:12px;line-height:14px;color:#D6D3CE;font-weight:bold;letter-spacing:0.1px;">Объекты абонента [Договор/соглашение № 1321]</div>
<div style="left:1017px;top:239px;width:16px;height:14px;background:#D6D3CE;border-style:solid;border-width:1px;border-color:#FFFFFF #404040 #404040 #FFFFFF;box-sizing:border-box;box-shadow:inset -1px -1px #808080;"></div>
<svg style="left:1021px;top:242px" width="8" height="7" viewBox="0 0 8 7"><path d="M0.5 0.5L7.5 6.5M7.5 0.5L0.5 6.5" stroke="#000" stroke-width="1.5"/></svg>
<div style="left:999px;top:239px;width:16px;height:14px;background:#D6D3CE;border-style:solid;border-width:1px;border-color:#FFFFFF #404040 #404040 #FFFFFF;box-sizing:border-box;box-shadow:inset -1px -1px #808080;"></div>
<div style="left:1002px;top:241px;width:9px;height:9px;border:1px solid #000;border-top-width:2px;box-sizing:border-box;"></div>
<div style="left:983px;top:239px;width:16px;height:14px;background:#D6D3CE;border-style:solid;border-width:1px;border-color:#FFFFFF #404040 #404040 #FFFFFF;box-sizing:border-box;box-shadow:inset -1px -1px #808080;"></div>
<div style="left:987px;top:248px;width:6px;height:2px;background:#000;"></div>
<div style="left:20px;top:263px;width:1005px;height:248px;border:1px solid #808080;box-sizing:border-box;box-shadow:inset 1px 1px #FFFFFF, 1px 1px #FFFFFF;"></div>
<div class="t" style="left:-135.5px;width:400px;text-align:center;top:267px;font-size:12px;line-height:14px;color:#000;">Лицевой счет</div>
<div class="t" style="left:32.69999999999999px;width:400px;text-align:center;top:267px;font-size:12px;line-height:14px;color:#000;">Название</div>
<div class="t" style="left:218.7px;width:400px;text-align:center;top:267px;font-size:12px;line-height:14px;color:#000;">Открыт</div>
<div class="t" style="left:297.3px;width:400px;text-align:center;top:267px;font-size:12px;line-height:14px;color:#000;">Действует с</div>
<div class="t" style="left:376.70000000000005px;width:400px;text-align:center;top:267px;font-size:12px;line-height:14px;color:#000;">по</div>
<div class="t" style="left:479.29999999999995px;width:400px;text-align:center;top:267px;font-size:12px;line-height:14px;color:#000;">Водозабор</div>
<div class="t" style="left:611px;width:400px;text-align:center;top:267px;font-size:12px;line-height:14px;color:#000;">Статус</div>
<div class="t" style="left:791px;width:400px;text-align:center;top:267px;font-size:12px;line-height:14px;color:#000;">Осн. л/с</div>
<div style="left:25px;top:281px;width:80px;height:19px;background:#FFFFD0;border-style:solid;border-width:1px;border-color:#808080 #FFFFFF #FFFFFF #808080;box-sizing:border-box;box-shadow:inset 1px 1px #404040, inset -1px -1px #D6D3CE;"></div>
<div class="t" style="left:27px;top:284px;font-size:12px;line-height:14px;color:#858565;">1321/1</div>
<div style="left:105px;top:281px;width:256px;height:19px;background:#FFFFD0;border-style:solid;border-width:1px;border-color:#808080 #FFFFFF #FFFFFF #808080;box-sizing:border-box;box-shadow:inset 1px 1px #404040, inset -1px -1px #D6D3CE;"></div>
<div class="t" style="left:107px;top:284px;font-size:12px;line-height:14px;color:#858565;">ООО Гарант</div>
<div style="left:379px;top:281px;width:79px;height:19px;background:#FFFFD0;border-style:solid;border-width:1px;border-color:#808080 #FFFFFF #FFFFFF #808080;box-sizing:border-box;box-shadow:inset 1px 1px #404040, inset -1px -1px #D6D3CE;"></div>
<div class="t" style="left:381px;top:284px;font-size:12px;line-height:14px;color:#858565;">01.01.2008</div>
<div style="left:458px;top:281px;width:79px;height:19px;background:#FFFFD0;border-style:solid;border-width:1px;border-color:#808080 #FFFFFF #FFFFFF #808080;box-sizing:border-box;box-shadow:inset 1px 1px #404040, inset -1px -1px #D6D3CE;"></div>
<div class="t" style="left:460px;top:284px;font-size:12px;line-height:14px;color:#858565;">01.01.2008</div>
<div style="left:537px;top:281px;width:80px;height:19px;background:#FFFFD0;border-style:solid;border-width:1px;border-color:#808080 #FFFFFF #FFFFFF #808080;box-sizing:border-box;box-shadow:inset 1px 1px #404040, inset -1px -1px #D6D3CE;"></div>
<div style="left:617px;top:281px;width:121px;height:19px;background:#FFFFD0;border-style:solid;border-width:1px;border-color:#808080 #FFFFFF #FFFFFF #808080;box-sizing:border-box;box-shadow:inset 1px 1px #404040, inset -1px -1px #D6D3CE;"></div>
<div class="t" style="left:619px;top:284px;font-size:12px;line-height:14px;color:#858565;">Падь, 1-й подъем</div>
<div style="left:757px;top:281px;width:107px;height:19px;background:#FFFFD0;border-style:solid;border-width:1px;border-color:#808080 #FFFFFF #FFFFFF #808080;box-sizing:border-box;box-shadow:inset 1px 1px #404040, inset -1px -1px #D6D3CE;"></div>
<div class="t" style="left:759px;top:284px;font-size:12px;line-height:14px;color:#858565;">ОткрытыйОбъект</div>
<div style="left:361px;top:281px;width:18px;height:19px;background:#D6D3CE;border-style:solid;border-width:0 1px 1px 0;border-color:#404040;box-sizing:border-box;box-shadow:inset -1px -1px #808080;"></div>
<svg style="left:361px;top:281px" width="18" height="19" viewBox="0 0 18 19" shape-rendering="crispEdges"><rect x="2" y="4" width="11" height="7" fill="#f4f4f4"/><path d="M2.5 12.5 L4.5 14.5 H12.5 L15.5 11.5 L13 10 H6 Z" fill="#e8f070"/><rect x="2" y="5" width="1" height="1" fill="#808080"/><rect x="2" y="7" width="1" height="1" fill="#808080"/><rect x="2" y="9" width="1" height="1" fill="#808080"/><rect x="2" y="11" width="1" height="1" fill="#808080"/><rect x="4" y="4" width="1" height="1" fill="#808080"/><rect x="6" y="4" width="1" height="1" fill="#808080"/><rect x="8" y="5" width="1" height="1" fill="#808080"/><rect x="10" y="5" width="1" height="1" fill="#808080"/><rect x="12" y="5" width="1" height="1" fill="#808080"/><rect x="13" y="7" width="1" height="1" fill="#808080"/><rect x="4" y="10" width="1" height="1" fill="#808080"/><rect x="6" y="10" width="1" height="1" fill="#808080"/><rect x="8" y="10" width="1" height="1" fill="#808080"/><rect x="10" y="10" width="1" height="1" fill="#808080"/><rect x="12" y="10" width="1" height="1" fill="#808080"/><rect x="4" y="14" width="1" height="1" fill="#000"/><rect x="6" y="14" width="1" height="1" fill="#000"/><rect x="8" y="14" width="1" height="1" fill="#000"/><rect x="10" y="14" width="1" height="1" fill="#000"/><rect x="12" y="14" width="1" height="1" fill="#000"/><rect x="13" y="13" width="1" height="1" fill="#000"/><rect x="14" y="12" width="1" height="1" fill="#000"/><rect x="15" y="11" width="1" height="1" fill="#000"/><rect x="12" y="2" width="1" height="1" fill="#000"/><rect x="16" y="2" width="1" height="1" fill="#000"/><rect x="13" y="5" width="1" height="1" fill="#000"/><rect x="15" y="5" width="1" height="1" fill="#000"/><rect x="16" y="4" width="1" height="1" fill="#000"/></svg>
<div style="left:739px;top:281px;width:18px;height:19px;background:#D6D3CE;border-style:solid;border-width:0 1px 1px 0;border-color:#404040;box-sizing:border-box;box-shadow:inset -1px -1px #808080;"></div>
<svg style="left:739px;top:281px" width="18" height="19" viewBox="0 0 18 19" shape-rendering="crispEdges"><rect x="2" y="4" width="11" height="7" fill="#f4f4f4"/><path d="M2.5 12.5 L4.5 14.5 H12.5 L15.5 11.5 L13 10 H6 Z" fill="#e8f070"/><rect x="2" y="5" width="1" height="1" fill="#808080"/><rect x="2" y="7" width="1" height="1" fill="#808080"/><rect x="2" y="9" width="1" height="1" fill="#808080"/><rect x="2" y="11" width="1" height="1" fill="#808080"/><rect x="4" y="4" width="1" height="1" fill="#808080"/><rect x="6" y="4" width="1" height="1" fill="#808080"/><rect x="8" y="5" width="1" height="1" fill="#808080"/><rect x="10" y="5" width="1" height="1" fill="#808080"/><rect x="12" y="5" width="1" height="1" fill="#808080"/><rect x="13" y="7" width="1" height="1" fill="#808080"/><rect x="4" y="10" width="1" height="1" fill="#808080"/><rect x="6" y="10" width="1" height="1" fill="#808080"/><rect x="8" y="10" width="1" height="1" fill="#808080"/><rect x="10" y="10" width="1" height="1" fill="#808080"/><rect x="12" y="10" width="1" height="1" fill="#808080"/><rect x="4" y="14" width="1" height="1" fill="#000"/><rect x="6" y="14" width="1" height="1" fill="#000"/><rect x="8" y="14" width="1" height="1" fill="#000"/><rect x="10" y="14" width="1" height="1" fill="#000"/><rect x="12" y="14" width="1" height="1" fill="#000"/><rect x="13" y="13" width="1" height="1" fill="#000"/><rect x="14" y="12" width="1" height="1" fill="#000"/><rect x="15" y="11" width="1" height="1" fill="#000"/><rect x="12" y="2" width="1" height="1" fill="#000"/><rect x="16" y="2" width="1" height="1" fill="#000"/><rect x="13" y="5" width="1" height="1" fill="#000"/><rect x="15" y="5" width="1" height="1" fill="#000"/><rect x="16" y="4" width="1" height="1" fill="#000"/></svg>
<div style="left:865px;top:281px;width:18px;height:19px;background:#D6D3CE;border-style:solid;border-width:0 1px 1px 0;border-color:#404040;box-sizing:border-box;box-shadow:inset -1px -1px #808080;"></div>
<svg style="left:865px;top:281px" width="18" height="19" viewBox="0 0 18 19" shape-rendering="crispEdges"><rect x="2" y="4" width="11" height="7" fill="#f4f4f4"/><path d="M2.5 12.5 L4.5 14.5 H12.5 L15.5 11.5 L13 10 H6 Z" fill="#e8f070"/><rect x="2" y="5" width="1" height="1" fill="#808080"/><rect x="2" y="7" width="1" height="1" fill="#808080"/><rect x="2" y="9" width="1" height="1" fill="#808080"/><rect x="2" y="11" width="1" height="1" fill="#808080"/><rect x="4" y="4" width="1" height="1" fill="#808080"/><rect x="6" y="4" width="1" height="1" fill="#808080"/><rect x="8" y="5" width="1" height="1" fill="#808080"/><rect x="10" y="5" width="1" height="1" fill="#808080"/><rect x="12" y="5" width="1" height="1" fill="#808080"/><rect x="13" y="7" width="1" height="1" fill="#808080"/><rect x="4" y="10" width="1" height="1" fill="#808080"/><rect x="6" y="10" width="1" height="1" fill="#808080"/><rect x="8" y="10" width="1" height="1" fill="#808080"/><rect x="10" y="10" width="1" height="1" fill="#808080"/><rect x="12" y="10" width="1" height="1" fill="#808080"/><rect x="4" y="14" width="1" height="1" fill="#000"/><rect x="6" y="14" width="1" height="1" fill="#000"/><rect x="8" y="14" width="1" height="1" fill="#000"/><rect x="10" y="14" width="1" height="1" fill="#000"/><rect x="12" y="14" width="1" height="1" fill="#000"/><rect x="13" y="13" width="1" height="1" fill="#000"/><rect x="14" y="12" width="1" height="1" fill="#000"/><rect x="15" y="11" width="1" height="1" fill="#000"/><rect x="12" y="2" width="1" height="1" fill="#000"/><rect x="16" y="2" width="1" height="1" fill="#000"/><rect x="13" y="5" width="1" height="1" fill="#000"/><rect x="15" y="5" width="1" height="1" fill="#000"/><rect x="16" y="4" width="1" height="1" fill="#000"/></svg>
<div style="left:887px;top:284px;width:13px;height:13px;background:#D6D3CE;border-style:solid;border-width:1px;border-color:#808080 #FFFFFF #FFFFFF #808080;box-sizing:border-box;box-shadow:inset 1px 1px #404040, inset -1px -1px #D6D3CE;"></div>
<div class="t" style="left:906px;top:285px;font-size:12px;line-height:14px;color:#FFFFFF;">р/к</div>
<div class="t" style="left:905px;top:284px;font-size:12px;line-height:14px;color:#808080;">р/к</div>
<div style="left:926px;top:284px;width:13px;height:13px;background:#D6D3CE;border-style:solid;border-width:1px;border-color:#808080 #FFFFFF #FFFFFF #808080;box-sizing:border-box;box-shadow:inset 1px 1px #404040, inset -1px -1px #D6D3CE;"></div>
<div class="t" style="left:945px;top:285px;font-size:12px;line-height:14px;color:#FFFFFF;">тариф</div>
<div class="t" style="left:944px;top:284px;font-size:12px;line-height:14px;color:#808080;">тариф</div>
<div style="left:983px;top:284px;width:13px;height:13px;background:#D6D3CE;border-style:solid;border-width:1px;border-color:#808080 #FFFFFF #FFFFFF #808080;box-sizing:border-box;box-shadow:inset 1px 1px #404040, inset -1px -1px #D6D3CE;"></div>
<div style="left:1001px;top:281px;width:18px;height:19px;background:#D6D3CE;border-style:solid;border-width:1px;border-color:#FFFFFF #404040 #404040 #FFFFFF;box-sizing:border-box;box-shadow:inset -1px -1px #808080;"></div>
<div class="t" style="left:1005px;top:288px;font-size:10px;line-height:12px;color:#FFFFFF;">...</div>
<div class="t" style="left:1004px;top:287px;font-size:10px;line-height:12px;color:#808080;">...</div>
<div style="left:25px;top:299px;width:80px;height:19px;background:#E0DFE3;border-style:solid;border-width:1px;border-color:#808080 #FFFFFF #FFFFFF #808080;box-sizing:border-box;box-shadow:inset 1px 1px #404040, inset -1px -1px #D6D3CE;"></div>
<div style="left:105px;top:299px;width:256px;height:19px;background:#FFFFFF;border-style:solid;border-width:1px;border-color:#808080 #FFFFFF #FFFFFF #808080;box-sizing:border-box;box-shadow:inset 1px 1px #404040, inset -1px -1px #D6D3CE;"></div>
<div style="left:379px;top:299px;width:79px;height:19px;background:#FFFFFF;border-style:solid;border-width:1px;border-color:#808080 #FFFFFF #FFFFFF #808080;box-sizing:border-box;box-shadow:inset 1px 1px #404040, inset -1px -1px #D6D3CE;"></div>
<div style="left:458px;top:299px;width:79px;height:19px;background:#FFFFFF;border-style:solid;border-width:1px;border-color:#808080 #FFFFFF #FFFFFF #808080;box-sizing:border-box;box-shadow:inset 1px 1px #404040, inset -1px -1px #D6D3CE;"></div>
<div style="left:537px;top:299px;width:80px;height:19px;background:#FFFFFF;border-style:solid;border-width:1px;border-color:#808080 #FFFFFF #FFFFFF #808080;box-sizing:border-box;box-shadow:inset 1px 1px #404040, inset -1px -1px #D6D3CE;"></div>
<div style="left:617px;top:299px;width:121px;height:19px;background:#FFFFFF;border-style:solid;border-width:1px;border-color:#808080 #FFFFFF #FFFFFF #808080;box-sizing:border-box;box-shadow:inset 1px 1px #404040, inset -1px -1px #D6D3CE;"></div>
<div style="left:757px;top:299px;width:107px;height:19px;background:#FFFFFF;border-style:solid;border-width:1px;border-color:#808080 #FFFFFF #FFFFFF #808080;box-sizing:border-box;box-shadow:inset 1px 1px #404040, inset -1px -1px #D6D3CE;"></div>
<div style="left:361px;top:299px;width:18px;height:19px;background:#D6D3CE;border-style:solid;border-width:0 1px 1px 0;border-color:#404040;box-sizing:border-box;box-shadow:inset -1px -1px #808080;"></div>
<svg style="left:361px;top:299px" width="18" height="19" viewBox="0 0 18 19" shape-rendering="crispEdges"><rect x="2" y="4" width="11" height="7" fill="#f4f4f4"/><path d="M2.5 12.5 L4.5 14.5 H12.5 L15.5 11.5 L13 10 H6 Z" fill="#e8f070"/><rect x="2" y="5" width="1" height="1" fill="#808080"/><rect x="2" y="7" width="1" height="1" fill="#808080"/><rect x="2" y="9" width="1" height="1" fill="#808080"/><rect x="2" y="11" width="1" height="1" fill="#808080"/><rect x="4" y="4" width="1" height="1" fill="#808080"/><rect x="6" y="4" width="1" height="1" fill="#808080"/><rect x="8" y="5" width="1" height="1" fill="#808080"/><rect x="10" y="5" width="1" height="1" fill="#808080"/><rect x="12" y="5" width="1" height="1" fill="#808080"/><rect x="13" y="7" width="1" height="1" fill="#808080"/><rect x="4" y="10" width="1" height="1" fill="#808080"/><rect x="6" y="10" width="1" height="1" fill="#808080"/><rect x="8" y="10" width="1" height="1" fill="#808080"/><rect x="10" y="10" width="1" height="1" fill="#808080"/><rect x="12" y="10" width="1" height="1" fill="#808080"/><rect x="4" y="14" width="1" height="1" fill="#000"/><rect x="6" y="14" width="1" height="1" fill="#000"/><rect x="8" y="14" width="1" height="1" fill="#000"/><rect x="10" y="14" width="1" height="1" fill="#000"/><rect x="12" y="14" width="1" height="1" fill="#000"/><rect x="13" y="13" width="1" height="1" fill="#000"/><rect x="14" y="12" width="1" height="1" fill="#000"/><rect x="15" y="11" width="1" height="1" fill="#000"/><rect x="12" y="2" width="1" height="1" fill="#000"/><rect x="16" y="2" width="1" height="1" fill="#000"/><rect x="13" y="5" width="1" height="1" fill="#000"/><rect x="15" y="5" width="1" height="1" fill="#000"/><rect x="16" y="4" width="1" height="1" fill="#000"/></svg>
<div style="left:739px;top:299px;width:18px;height:19px;background:#D6D3CE;border-style:solid;border-width:0 1px 1px 0;border-color:#404040;box-sizing:border-box;box-shadow:inset -1px -1px #808080;"></div>
<svg style="left:739px;top:299px" width="18" height="19" viewBox="0 0 18 19" shape-rendering="crispEdges"><rect x="2" y="4" width="11" height="7" fill="#f4f4f4"/><path d="M2.5 12.5 L4.5 14.5 H12.5 L15.5 11.5 L13 10 H6 Z" fill="#e8f070"/><rect x="2" y="5" width="1" height="1" fill="#808080"/><rect x="2" y="7" width="1" height="1" fill="#808080"/><rect x="2" y="9" width="1" height="1" fill="#808080"/><rect x="2" y="11" width="1" height="1" fill="#808080"/><rect x="4" y="4" width="1" height="1" fill="#808080"/><rect x="6" y="4" width="1" height="1" fill="#808080"/><rect x="8" y="5" width="1" height="1" fill="#808080"/><rect x="10" y="5" width="1" height="1" fill="#808080"/><rect x="12" y="5" width="1" height="1" fill="#808080"/><rect x="13" y="7" width="1" height="1" fill="#808080"/><rect x="4" y="10" width="1" height="1" fill="#808080"/><rect x="6" y="10" width="1" height="1" fill="#808080"/><rect x="8" y="10" width="1" height="1" fill="#808080"/><rect x="10" y="10" width="1" height="1" fill="#808080"/><rect x="12" y="10" width="1" height="1" fill="#808080"/><rect x="4" y="14" width="1" height="1" fill="#000"/><rect x="6" y="14" width="1" height="1" fill="#000"/><rect x="8" y="14" width="1" height="1" fill="#000"/><rect x="10" y="14" width="1" height="1" fill="#000"/><rect x="12" y="14" width="1" height="1" fill="#000"/><rect x="13" y="13" width="1" height="1" fill="#000"/><rect x="14" y="12" width="1" height="1" fill="#000"/><rect x="15" y="11" width="1" height="1" fill="#000"/><rect x="12" y="2" width="1" height="1" fill="#000"/><rect x="16" y="2" width="1" height="1" fill="#000"/><rect x="13" y="5" width="1" height="1" fill="#000"/><rect x="15" y="5" width="1" height="1" fill="#000"/><rect x="16" y="4" width="1" height="1" fill="#000"/></svg>
<div style="left:865px;top:299px;width:18px;height:19px;background:#D6D3CE;border-style:solid;border-width:0 1px 1px 0;border-color:#404040;box-sizing:border-box;box-shadow:inset -1px -1px #808080;"></div>
<svg style="left:865px;top:299px" width="18" height="19" viewBox="0 0 18 19" shape-rendering="crispEdges"><path d="M2.5 4.5 h3 l1 1 h6 l1 3 v3 l-2 3 h-9z" fill="#f0f040"/><path d="M6 13.5 l5 -4 h2.5 l-2 4z" fill="#b8b0c8"/><rect x="2" y="4" width="1" height="1" fill="#404040"/><rect x="4" y="4" width="1" height="1" fill="#404040"/><rect x="2" y="6" width="1" height="1" fill="#404040"/><rect x="2" y="8" width="1" height="1" fill="#404040"/><rect x="2" y="10" width="1" height="1" fill="#404040"/><rect x="2" y="12" width="1" height="1" fill="#404040"/><rect x="3" y="14" width="1" height="1" fill="#404040"/><rect x="5" y="14" width="1" height="1" fill="#404040"/><rect x="7" y="14" width="1" height="1" fill="#404040"/><rect x="9" y="14" width="1" height="1" fill="#404040"/><rect x="11" y="14" width="1" height="1" fill="#404040"/><rect x="6" y="5" width="1" height="1" fill="#404040"/><rect x="8" y="5" width="1" height="1" fill="#404040"/><rect x="10" y="5" width="1" height="1" fill="#404040"/><rect x="12" y="6" width="1" height="1" fill="#404040"/><rect x="13" y="8" width="1" height="1" fill="#404040"/><rect x="13" y="10" width="1" height="1" fill="#404040"/><rect x="12" y="12" width="1" height="1" fill="#404040"/><rect x="4" y="13" width="1" height="1" fill="#404040"/><rect x="6" y="12" width="1" height="1" fill="#404040"/><rect x="8" y="11" width="1" height="1" fill="#404040"/><rect x="10" y="10" width="1" height="1" fill="#404040"/><rect x="10" y="2" width="1" height="1" fill="#000"/><rect x="11" y="1" width="1" height="1" fill="#000"/><rect x="13" y="1" width="1" height="1" fill="#000"/><rect x="14" y="2" width="1" height="1" fill="#000"/><rect x="15" y="3" width="1" height="1" fill="#000"/><rect x="16" y="2" width="1" height="1" fill="#000"/><rect x="14" y="4" width="1" height="1" fill="#000"/><rect x="16" y="4" width="1" height="1" fill="#000"/></svg>
<div style="left:887px;top:302px;width:13px;height:13px;background:#D6D3CE;border-style:solid;border-width:1px;border-color:#808080 #FFFFFF #FFFFFF #808080;box-sizing:border-box;box-shadow:inset 1px 1px #404040, inset -1px -1px #D6D3CE;"></div>
<div class="t" style="left:906px;top:303px;font-size:12px;line-height:14px;color:#FFFFFF;">р/к</div>
<div class="t" style="left:905px;top:302px;font-size:12px;line-height:14px;color:#808080;">р/к</div>
<div style="left:926px;top:302px;width:13px;height:13px;background:#D6D3CE;border-style:solid;border-width:1px;border-color:#808080 #FFFFFF #FFFFFF #808080;box-sizing:border-box;box-shadow:inset 1px 1px #404040, inset -1px -1px #D6D3CE;"></div>
<div class="t" style="left:945px;top:303px;font-size:12px;line-height:14px;color:#FFFFFF;">тариф</div>
<div class="t" style="left:944px;top:302px;font-size:12px;line-height:14px;color:#808080;">тариф</div>
<div style="left:983px;top:302px;width:13px;height:13px;background:#D6D3CE;border-style:solid;border-width:1px;border-color:#808080 #FFFFFF #FFFFFF #808080;box-sizing:border-box;box-shadow:inset 1px 1px #404040, inset -1px -1px #D6D3CE;"></div>
<div style="left:1001px;top:299px;width:18px;height:19px;background:#D6D3CE;border-style:solid;border-width:1px;border-color:#FFFFFF #404040 #404040 #FFFFFF;box-sizing:border-box;box-shadow:inset -1px -1px #808080;"></div>
<div class="t" style="left:1005px;top:306px;font-size:10px;line-height:12px;color:#FFFFFF;">...</div>
<div class="t" style="left:1004px;top:305px;font-size:10px;line-height:12px;color:#808080;">...</div>
<div style="left:25px;top:318px;width:80px;height:19px;background:#E0DFE3;border-style:solid;border-width:1px;border-color:#808080 #FFFFFF #FFFFFF #808080;box-sizing:border-box;box-shadow:inset 1px 1px #404040, inset -1px -1px #D6D3CE;"></div>
<div style="left:105px;top:318px;width:256px;height:19px;background:#FFFFFF;border-style:solid;border-width:1px;border-color:#808080 #FFFFFF #FFFFFF #808080;box-sizing:border-box;box-shadow:inset 1px 1px #404040, inset -1px -1px #D6D3CE;"></div>
<div style="left:379px;top:318px;width:79px;height:19px;background:#FFFFFF;border-style:solid;border-width:1px;border-color:#808080 #FFFFFF #FFFFFF #808080;box-sizing:border-box;box-shadow:inset 1px 1px #404040, inset -1px -1px #D6D3CE;"></div>
<div style="left:458px;top:318px;width:79px;height:19px;background:#FFFFFF;border-style:solid;border-width:1px;border-color:#808080 #FFFFFF #FFFFFF #808080;box-sizing:border-box;box-shadow:inset 1px 1px #404040, inset -1px -1px #D6D3CE;"></div>
<div style="left:537px;top:318px;width:80px;height:19px;background:#FFFFFF;border-style:solid;border-width:1px;border-color:#808080 #FFFFFF #FFFFFF #808080;box-sizing:border-box;box-shadow:inset 1px 1px #404040, inset -1px -1px #D6D3CE;"></div>
<div style="left:617px;top:318px;width:121px;height:19px;background:#FFFFFF;border-style:solid;border-width:1px;border-color:#808080 #FFFFFF #FFFFFF #808080;box-sizing:border-box;box-shadow:inset 1px 1px #404040, inset -1px -1px #D6D3CE;"></div>
<div style="left:757px;top:318px;width:107px;height:19px;background:#FFFFFF;border-style:solid;border-width:1px;border-color:#808080 #FFFFFF #FFFFFF #808080;box-sizing:border-box;box-shadow:inset 1px 1px #404040, inset -1px -1px #D6D3CE;"></div>
<div style="left:361px;top:318px;width:18px;height:19px;background:#D6D3CE;border-style:solid;border-width:0 1px 1px 0;border-color:#404040;box-sizing:border-box;box-shadow:inset -1px -1px #808080;"></div>
<svg style="left:361px;top:318px" width="18" height="19" viewBox="0 0 18 19" shape-rendering="crispEdges"><rect x="2" y="4" width="11" height="7" fill="#f4f4f4"/><path d="M2.5 12.5 L4.5 14.5 H12.5 L15.5 11.5 L13 10 H6 Z" fill="#e8f070"/><rect x="2" y="5" width="1" height="1" fill="#808080"/><rect x="2" y="7" width="1" height="1" fill="#808080"/><rect x="2" y="9" width="1" height="1" fill="#808080"/><rect x="2" y="11" width="1" height="1" fill="#808080"/><rect x="4" y="4" width="1" height="1" fill="#808080"/><rect x="6" y="4" width="1" height="1" fill="#808080"/><rect x="8" y="5" width="1" height="1" fill="#808080"/><rect x="10" y="5" width="1" height="1" fill="#808080"/><rect x="12" y="5" width="1" height="1" fill="#808080"/><rect x="13" y="7" width="1" height="1" fill="#808080"/><rect x="4" y="10" width="1" height="1" fill="#808080"/><rect x="6" y="10" width="1" height="1" fill="#808080"/><rect x="8" y="10" width="1" height="1" fill="#808080"/><rect x="10" y="10" width="1" height="1" fill="#808080"/><rect x="12" y="10" width="1" height="1" fill="#808080"/><rect x="4" y="14" width="1" height="1" fill="#000"/><rect x="6" y="14" width="1" height="1" fill="#000"/><rect x="8" y="14" width="1" height="1" fill="#000"/><rect x="10" y="14" width="1" height="1" fill="#000"/><rect x="12" y="14" width="1" height="1" fill="#000"/><rect x="13" y="13" width="1" height="1" fill="#000"/><rect x="14" y="12" width="1" height="1" fill="#000"/><rect x="15" y="11" width="1" height="1" fill="#000"/><rect x="12" y="2" width="1" height="1" fill="#000"/><rect x="16" y="2" width="1" height="1" fill="#000"/><rect x="13" y="5" width="1" height="1" fill="#000"/><rect x="15" y="5" width="1" height="1" fill="#000"/><rect x="16" y="4" width="1" height="1" fill="#000"/></svg>
<div style="left:739px;top:318px;width:18px;height:19px;background:#D6D3CE;border-style:solid;border-width:0 1px 1px 0;border-color:#404040;box-sizing:border-box;box-shadow:inset -1px -1px #808080;"></div>
<svg style="left:739px;top:318px" width="18" height="19" viewBox="0 0 18 19" shape-rendering="crispEdges"><rect x="2" y="4" width="11" height="7" fill="#f4f4f4"/><path d="M2.5 12.5 L4.5 14.5 H12.5 L15.5 11.5 L13 10 H6 Z" fill="#e8f070"/><rect x="2" y="5" width="1" height="1" fill="#808080"/><rect x="2" y="7" width="1" height="1" fill="#808080"/><rect x="2" y="9" width="1" height="1" fill="#808080"/><rect x="2" y="11" width="1" height="1" fill="#808080"/><rect x="4" y="4" width="1" height="1" fill="#808080"/><rect x="6" y="4" width="1" height="1" fill="#808080"/><rect x="8" y="5" width="1" height="1" fill="#808080"/><rect x="10" y="5" width="1" height="1" fill="#808080"/><rect x="12" y="5" width="1" height="1" fill="#808080"/><rect x="13" y="7" width="1" height="1" fill="#808080"/><rect x="4" y="10" width="1" height="1" fill="#808080"/><rect x="6" y="10" width="1" height="1" fill="#808080"/><rect x="8" y="10" width="1" height="1" fill="#808080"/><rect x="10" y="10" width="1" height="1" fill="#808080"/><rect x="12" y="10" width="1" height="1" fill="#808080"/><rect x="4" y="14" width="1" height="1" fill="#000"/><rect x="6" y="14" width="1" height="1" fill="#000"/><rect x="8" y="14" width="1" height="1" fill="#000"/><rect x="10" y="14" width="1" height="1" fill="#000"/><rect x="12" y="14" width="1" height="1" fill="#000"/><rect x="13" y="13" width="1" height="1" fill="#000"/><rect x="14" y="12" width="1" height="1" fill="#000"/><rect x="15" y="11" width="1" height="1" fill="#000"/><rect x="12" y="2" width="1" height="1" fill="#000"/><rect x="16" y="2" width="1" height="1" fill="#000"/><rect x="13" y="5" width="1" height="1" fill="#000"/><rect x="15" y="5" width="1" height="1" fill="#000"/><rect x="16" y="4" width="1" height="1" fill="#000"/></svg>
<div style="left:865px;top:318px;width:18px;height:19px;background:#D6D3CE;border-style:solid;border-width:0 1px 1px 0;border-color:#404040;box-sizing:border-box;box-shadow:inset -1px -1px #808080;"></div>
<svg style="left:865px;top:318px" width="18" height="19" viewBox="0 0 18 19" shape-rendering="crispEdges"><rect x="2" y="4" width="11" height="7" fill="#f4f4f4"/><path d="M2.5 12.5 L4.5 14.5 H12.5 L15.5 11.5 L13 10 H6 Z" fill="#e8f070"/><rect x="2" y="5" width="1" height="1" fill="#808080"/><rect x="2" y="7" width="1" height="1" fill="#808080"/><rect x="2" y="9" width="1" height="1" fill="#808080"/><rect x="2" y="11" width="1" height="1" fill="#808080"/><rect x="4" y="4" width="1" height="1" fill="#808080"/><rect x="6" y="4" width="1" height="1" fill="#808080"/><rect x="8" y="5" width="1" height="1" fill="#808080"/><rect x="10" y="5" width="1" height="1" fill="#808080"/><rect x="12" y="5" width="1" height="1" fill="#808080"/><rect x="13" y="7" width="1" height="1" fill="#808080"/><rect x="4" y="10" width="1" height="1" fill="#808080"/><rect x="6" y="10" width="1" height="1" fill="#808080"/><rect x="8" y="10" width="1" height="1" fill="#808080"/><rect x="10" y="10" width="1" height="1" fill="#808080"/><rect x="12" y="10" width="1" height="1" fill="#808080"/><rect x="4" y="14" width="1" height="1" fill="#000"/><rect x="6" y="14" width="1" height="1" fill="#000"/><rect x="8" y="14" width="1" height="1" fill="#000"/><rect x="10" y="14" width="1" height="1" fill="#000"/><rect x="12" y="14" width="1" height="1" fill="#000"/><rect x="13" y="13" width="1" height="1" fill="#000"/><rect x="14" y="12" width="1" height="1" fill="#000"/><rect x="15" y="11" width="1" height="1" fill="#000"/><rect x="12" y="2" width="1" height="1" fill="#000"/><rect x="16" y="2" width="1" height="1" fill="#000"/><rect x="13" y="5" width="1" height="1" fill="#000"/><rect x="15" y="5" width="1" height="1" fill="#000"/><rect x="16" y="4" width="1" height="1" fill="#000"/></svg>
<div style="left:887px;top:321px;width:13px;height:13px;background:#D6D3CE;border-style:solid;border-width:1px;border-color:#808080 #FFFFFF #FFFFFF #808080;box-sizing:border-box;box-shadow:inset 1px 1px #404040, inset -1px -1px #D6D3CE;"></div>
<div class="t" style="left:906px;top:322px;font-size:12px;line-height:14px;color:#FFFFFF;">р/к</div>
<div class="t" style="left:905px;top:321px;font-size:12px;line-height:14px;color:#808080;">р/к</div>
<div style="left:926px;top:321px;width:13px;height:13px;background:#D6D3CE;border-style:solid;border-width:1px;border-color:#808080 #FFFFFF #FFFFFF #808080;box-sizing:border-box;box-shadow:inset 1px 1px #404040, inset -1px -1px #D6D3CE;"></div>
<div class="t" style="left:945px;top:322px;font-size:12px;line-height:14px;color:#FFFFFF;">тариф</div>
<div class="t" style="left:944px;top:321px;font-size:12px;line-height:14px;color:#808080;">тариф</div>
<div style="left:983px;top:321px;width:13px;height:13px;background:#D6D3CE;border-style:solid;border-width:1px;border-color:#808080 #FFFFFF #FFFFFF #808080;box-sizing:border-box;box-shadow:inset 1px 1px #404040, inset -1px -1px #D6D3CE;"></div>
<div style="left:1001px;top:318px;width:18px;height:19px;background:#D6D3CE;border-style:solid;border-width:1px;border-color:#FFFFFF #404040 #404040 #FFFFFF;box-sizing:border-box;box-shadow:inset -1px -1px #808080;"></div>
<div class="t" style="left:1005px;top:325px;font-size:10px;line-height:12px;color:#FFFFFF;">...</div>
<div class="t" style="left:1004px;top:324px;font-size:10px;line-height:12px;color:#808080;">...</div>
<div style="left:25px;top:337px;width:80px;height:19px;background:#E0DFE3;border-style:solid;border-width:1px;border-color:#808080 #FFFFFF #FFFFFF #808080;box-sizing:border-box;box-shadow:inset 1px 1px #404040, inset -1px -1px #D6D3CE;"></div>
<div style="left:105px;top:337px;width:256px;height:19px;background:#FFFFFF;border-style:solid;border-width:1px;border-color:#808080 #FFFFFF #FFFFFF #808080;box-sizing:border-box;box-shadow:inset 1px 1px #404040, inset -1px -1px #D6D3CE;"></div>
<div style="left:379px;top:337px;width:79px;height:19px;background:#FFFFFF;border-style:solid;border-width:1px;border-color:#808080 #FFFFFF #FFFFFF #808080;box-sizing:border-box;box-shadow:inset 1px 1px #404040, inset -1px -1px #D6D3CE;"></div>
<div style="left:458px;top:337px;width:79px;height:19px;background:#FFFFFF;border-style:solid;border-width:1px;border-color:#808080 #FFFFFF #FFFFFF #808080;box-sizing:border-box;box-shadow:inset 1px 1px #404040, inset -1px -1px #D6D3CE;"></div>
<div style="left:537px;top:337px;width:80px;height:19px;background:#FFFFFF;border-style:solid;border-width:1px;border-color:#808080 #FFFFFF #FFFFFF #808080;box-sizing:border-box;box-shadow:inset 1px 1px #404040, inset -1px -1px #D6D3CE;"></div>
<div style="left:617px;top:337px;width:121px;height:19px;background:#FFFFFF;border-style:solid;border-width:1px;border-color:#808080 #FFFFFF #FFFFFF #808080;box-sizing:border-box;box-shadow:inset 1px 1px #404040, inset -1px -1px #D6D3CE;"></div>
<div style="left:757px;top:337px;width:107px;height:19px;background:#FFFFFF;border-style:solid;border-width:1px;border-color:#808080 #FFFFFF #FFFFFF #808080;box-sizing:border-box;box-shadow:inset 1px 1px #404040, inset -1px -1px #D6D3CE;"></div>
<div style="left:361px;top:337px;width:18px;height:19px;background:#D6D3CE;border-style:solid;border-width:0 1px 1px 0;border-color:#404040;box-sizing:border-box;box-shadow:inset -1px -1px #808080;"></div>
<svg style="left:361px;top:337px" width="18" height="19" viewBox="0 0 18 19" shape-rendering="crispEdges"><rect x="2" y="4" width="11" height="7" fill="#f4f4f4"/><path d="M2.5 12.5 L4.5 14.5 H12.5 L15.5 11.5 L13 10 H6 Z" fill="#e8f070"/><rect x="2" y="5" width="1" height="1" fill="#808080"/><rect x="2" y="7" width="1" height="1" fill="#808080"/><rect x="2" y="9" width="1" height="1" fill="#808080"/><rect x="2" y="11" width="1" height="1" fill="#808080"/><rect x="4" y="4" width="1" height="1" fill="#808080"/><rect x="6" y="4" width="1" height="1" fill="#808080"/><rect x="8" y="5" width="1" height="1" fill="#808080"/><rect x="10" y="5" width="1" height="1" fill="#808080"/><rect x="12" y="5" width="1" height="1" fill="#808080"/><rect x="13" y="7" width="1" height="1" fill="#808080"/><rect x="4" y="10" width="1" height="1" fill="#808080"/><rect x="6" y="10" width="1" height="1" fill="#808080"/><rect x="8" y="10" width="1" height="1" fill="#808080"/><rect x="10" y="10" width="1" height="1" fill="#808080"/><rect x="12" y="10" width="1" height="1" fill="#808080"/><rect x="4" y="14" width="1" height="1" fill="#000"/><rect x="6" y="14" width="1" height="1" fill="#000"/><rect x="8" y="14" width="1" height="1" fill="#000"/><rect x="10" y="14" width="1" height="1" fill="#000"/><rect x="12" y="14" width="1" height="1" fill="#000"/><rect x="13" y="13" width="1" height="1" fill="#000"/><rect x="14" y="12" width="1" height="1" fill="#000"/><rect x="15" y="11" width="1" height="1" fill="#000"/><rect x="12" y="2" width="1" height="1" fill="#000"/><rect x="16" y="2" width="1" height="1" fill="#000"/><rect x="13" y="5" width="1" height="1" fill="#000"/><rect x="15" y="5" width="1" height="1" fill="#000"/><rect x="16" y="4" width="1" height="1" fill="#000"/></svg>
<div style="left:739px;top:337px;width:18px;height:19px;background:#D6D3CE;border-style:solid;border-width:0 1px 1px 0;border-color:#404040;box-sizing:border-box;box-shadow:inset -1px -1px #808080;"></div>
<svg style="left:739px;top:337px" width="18" height="19" viewBox="0 0 18 19" shape-rendering="crispEdges"><rect x="2" y="4" width="11" height="7" fill="#f4f4f4"/><path d="M2.5 12.5 L4.5 14.5 H12.5 L15.5 11.5 L13 10 H6 Z" fill="#e8f070"/><rect x="2" y="5" width="1" height="1" fill="#808080"/><rect x="2" y="7" width="1" height="1" fill="#808080"/><rect x="2" y="9" width="1" height="1" fill="#808080"/><rect x="2" y="11" width="1" height="1" fill="#808080"/><rect x="4" y="4" width="1" height="1" fill="#808080"/><rect x="6" y="4" width="1" height="1" fill="#808080"/><rect x="8" y="5" width="1" height="1" fill="#808080"/><rect x="10" y="5" width="1" height="1" fill="#808080"/><rect x="12" y="5" width="1" height="1" fill="#808080"/><rect x="13" y="7" width="1" height="1" fill="#808080"/><rect x="4" y="10" width="1" height="1" fill="#808080"/><rect x="6" y="10" width="1" height="1" fill="#808080"/><rect x="8" y="10" width="1" height="1" fill="#808080"/><rect x="10" y="10" width="1" height="1" fill="#808080"/><rect x="12" y="10" width="1" height="1" fill="#808080"/><rect x="4" y="14" width="1" height="1" fill="#000"/><rect x="6" y="14" width="1" height="1" fill="#000"/><rect x="8" y="14" width="1" height="1" fill="#000"/><rect x="10" y="14" width="1" height="1" fill="#000"/><rect x="12" y="14" width="1" height="1" fill="#000"/><rect x="13" y="13" width="1" height="1" fill="#000"/><rect x="14" y="12" width="1" height="1" fill="#000"/><rect x="15" y="11" width="1" height="1" fill="#000"/><rect x="12" y="2" width="1" height="1" fill="#000"/><rect x="16" y="2" width="1" height="1" fill="#000"/><rect x="13" y="5" width="1" height="1" fill="#000"/><rect x="15" y="5" width="1" height="1" fill="#000"/><rect x="16" y="4" width="1" height="1" fill="#000"/></svg>
<div style="left:865px;top:337px;width:18px;height:19px;background:#D6D3CE;border-style:solid;border-width:0 1px 1px 0;border-color:#404040;box-sizing:border-box;box-shadow:inset -1px -1px #808080;"></div>
<svg style="left:865px;top:337px" width="18" height="19" viewBox="0 0 18 19" shape-rendering="crispEdges"><rect x="2" y="4" width="11" height="7" fill="#f4f4f4"/><path d="M2.5 12.5 L4.5 14.5 H12.5 L15.5 11.5 L13 10 H6 Z" fill="#e8f070"/><rect x="2" y="5" width="1" height="1" fill="#808080"/><rect x="2" y="7" width="1" height="1" fill="#808080"/><rect x="2" y="9" width="1" height="1" fill="#808080"/><rect x="2" y="11" width="1" height="1" fill="#808080"/><rect x="4" y="4" width="1" height="1" fill="#808080"/><rect x="6" y="4" width="1" height="1" fill="#808080"/><rect x="8" y="5" width="1" height="1" fill="#808080"/><rect x="10" y="5" width="1" height="1" fill="#808080"/><rect x="12" y="5" width="1" height="1" fill="#808080"/><rect x="13" y="7" width="1" height="1" fill="#808080"/><rect x="4" y="10" width="1" height="1" fill="#808080"/><rect x="6" y="10" width="1" height="1" fill="#808080"/><rect x="8" y="10" width="1" height="1" fill="#808080"/><rect x="10" y="10" width="1" height="1" fill="#808080"/><rect x="12" y="10" width="1" height="1" fill="#808080"/><rect x="4" y="14" width="1" height="1" fill="#000"/><rect x="6" y="14" width="1" height="1" fill="#000"/><rect x="8" y="14" width="1" height="1" fill="#000"/><rect x="10" y="14" width="1" height="1" fill="#000"/><rect x="12" y="14" width="1" height="1" fill="#000"/><rect x="13" y="13" width="1" height="1" fill="#000"/><rect x="14" y="12" width="1" height="1" fill="#000"/><rect x="15" y="11" width="1" height="1" fill="#000"/><rect x="12" y="2" width="1" height="1" fill="#000"/><rect x="16" y="2" width="1" height="1" fill="#000"/><rect x="13" y="5" width="1" height="1" fill="#000"/><rect x="15" y="5" width="1" height="1" fill="#000"/><rect x="16" y="4" width="1" height="1" fill="#000"/></svg>
<div style="left:887px;top:340px;width:13px;height:13px;background:#D6D3CE;border-style:solid;border-width:1px;border-color:#808080 #FFFFFF #FFFFFF #808080;box-sizing:border-box;box-shadow:inset 1px 1px #404040, inset -1px -1px #D6D3CE;"></div>
<div class="t" style="left:906px;top:341px;font-size:12px;line-height:14px;color:#FFFFFF;">р/к</div>
<div class="t" style="left:905px;top:340px;font-size:12px;line-height:14px;color:#808080;">р/к</div>
<div style="left:926px;top:340px;width:13px;height:13px;background:#D6D3CE;border-style:solid;border-width:1px;border-color:#808080 #FFFFFF #FFFFFF #808080;box-sizing:border-box;box-shadow:inset 1px 1px #404040, inset -1px -1px #D6D3CE;"></div>
<div class="t" style="left:945px;top:341px;font-size:12px;line-height:14px;color:#FFFFFF;">тариф</div>
<div class="t" style="left:944px;top:340px;font-size:12px;line-height:14px;color:#808080;">тариф</div>
<div style="left:983px;top:340px;width:13px;height:13px;background:#D6D3CE;border-style:solid;border-width:1px;border-color:#808080 #FFFFFF #FFFFFF #808080;box-sizing:border-box;box-shadow:inset 1px 1px #404040, inset -1px -1px #D6D3CE;"></div>
<div style="left:1001px;top:337px;width:18px;height:19px;background:#D6D3CE;border-style:solid;border-width:1px;border-color:#FFFFFF #404040 #404040 #FFFFFF;box-sizing:border-box;box-shadow:inset -1px -1px #808080;"></div>
<div class="t" style="left:1005px;top:344px;font-size:10px;line-height:12px;color:#FFFFFF;">...</div>
<div class="t" style="left:1004px;top:343px;font-size:10px;line-height:12px;color:#808080;">...</div>
<div style="left:25px;top:355px;width:80px;height:19px;background:#E0DFE3;border-style:solid;border-width:1px;border-color:#808080 #FFFFFF #FFFFFF #808080;box-sizing:border-box;box-shadow:inset 1px 1px #404040, inset -1px -1px #D6D3CE;"></div>
<div style="left:105px;top:355px;width:256px;height:19px;background:#FFFFFF;border-style:solid;border-width:1px;border-color:#808080 #FFFFFF #FFFFFF #808080;box-sizing:border-box;box-shadow:inset 1px 1px #404040, inset -1px -1px #D6D3CE;"></div>
<div style="left:379px;top:355px;width:79px;height:19px;background:#FFFFFF;border-style:solid;border-width:1px;border-color:#808080 #FFFFFF #FFFFFF #808080;box-sizing:border-box;box-shadow:inset 1px 1px #404040, inset -1px -1px #D6D3CE;"></div>
<div style="left:458px;top:355px;width:79px;height:19px;background:#FFFFFF;border-style:solid;border-width:1px;border-color:#808080 #FFFFFF #FFFFFF #808080;box-sizing:border-box;box-shadow:inset 1px 1px #404040, inset -1px -1px #D6D3CE;"></div>
<div style="left:537px;top:355px;width:80px;height:19px;background:#FFFFFF;border-style:solid;border-width:1px;border-color:#808080 #FFFFFF #FFFFFF #808080;box-sizing:border-box;box-shadow:inset 1px 1px #404040, inset -1px -1px #D6D3CE;"></div>
<div style="left:617px;top:355px;width:121px;height:19px;background:#FFFFFF;border-style:solid;border-width:1px;border-color:#808080 #FFFFFF #FFFFFF #808080;box-sizing:border-box;box-shadow:inset 1px 1px #404040, inset -1px -1px #D6D3CE;"></div>
<div style="left:757px;top:355px;width:107px;height:19px;background:#FFFFFF;border-style:solid;border-width:1px;border-color:#808080 #FFFFFF #FFFFFF #808080;box-sizing:border-box;box-shadow:inset 1px 1px #404040, inset -1px -1px #D6D3CE;"></div>
<div style="left:361px;top:355px;width:18px;height:19px;background:#D6D3CE;border-style:solid;border-width:0 1px 1px 0;border-color:#404040;box-sizing:border-box;box-shadow:inset -1px -1px #808080;"></div>
<svg style="left:361px;top:355px" width="18" height="19" viewBox="0 0 18 19" shape-rendering="crispEdges"><rect x="2" y="4" width="11" height="7" fill="#f4f4f4"/><path d="M2.5 12.5 L4.5 14.5 H12.5 L15.5 11.5 L13 10 H6 Z" fill="#e8f070"/><rect x="2" y="5" width="1" height="1" fill="#808080"/><rect x="2" y="7" width="1" height="1" fill="#808080"/><rect x="2" y="9" width="1" height="1" fill="#808080"/><rect x="2" y="11" width="1" height="1" fill="#808080"/><rect x="4" y="4" width="1" height="1" fill="#808080"/><rect x="6" y="4" width="1" height="1" fill="#808080"/><rect x="8" y="5" width="1" height="1" fill="#808080"/><rect x="10" y="5" width="1" height="1" fill="#808080"/><rect x="12" y="5" width="1" height="1" fill="#808080"/><rect x="13" y="7" width="1" height="1" fill="#808080"/><rect x="4" y="10" width="1" height="1" fill="#808080"/><rect x="6" y="10" width="1" height="1" fill="#808080"/><rect x="8" y="10" width="1" height="1" fill="#808080"/><rect x="10" y="10" width="1" height="1" fill="#808080"/><rect x="12" y="10" width="1" height="1" fill="#808080"/><rect x="4" y="14" width="1" height="1" fill="#000"/><rect x="6" y="14" width="1" height="1" fill="#000"/><rect x="8" y="14" width="1" height="1" fill="#000"/><rect x="10" y="14" width="1" height="1" fill="#000"/><rect x="12" y="14" width="1" height="1" fill="#000"/><rect x="13" y="13" width="1" height="1" fill="#000"/><rect x="14" y="12" width="1" height="1" fill="#000"/><rect x="15" y="11" width="1" height="1" fill="#000"/><rect x="12" y="2" width="1" height="1" fill="#000"/><rect x="16" y="2" width="1" height="1" fill="#000"/><rect x="13" y="5" width="1" height="1" fill="#000"/><rect x="15" y="5" width="1" height="1" fill="#000"/><rect x="16" y="4" width="1" height="1" fill="#000"/></svg>
<div style="left:739px;top:355px;width:18px;height:19px;background:#D6D3CE;border-style:solid;border-width:0 1px 1px 0;border-color:#404040;box-sizing:border-box;box-shadow:inset -1px -1px #808080;"></div>
<svg style="left:739px;top:355px" width="18" height="19" viewBox="0 0 18 19" shape-rendering="crispEdges"><rect x="2" y="4" width="11" height="7" fill="#f4f4f4"/><path d="M2.5 12.5 L4.5 14.5 H12.5 L15.5 11.5 L13 10 H6 Z" fill="#e8f070"/><rect x="2" y="5" width="1" height="1" fill="#808080"/><rect x="2" y="7" width="1" height="1" fill="#808080"/><rect x="2" y="9" width="1" height="1" fill="#808080"/><rect x="2" y="11" width="1" height="1" fill="#808080"/><rect x="4" y="4" width="1" height="1" fill="#808080"/><rect x="6" y="4" width="1" height="1" fill="#808080"/><rect x="8" y="5" width="1" height="1" fill="#808080"/><rect x="10" y="5" width="1" height="1" fill="#808080"/><rect x="12" y="5" width="1" height="1" fill="#808080"/><rect x="13" y="7" width="1" height="1" fill="#808080"/><rect x="4" y="10" width="1" height="1" fill="#808080"/><rect x="6" y="10" width="1" height="1" fill="#808080"/><rect x="8" y="10" width="1" height="1" fill="#808080"/><rect x="10" y="10" width="1" height="1" fill="#808080"/><rect x="12" y="10" width="1" height="1" fill="#808080"/><rect x="4" y="14" width="1" height="1" fill="#000"/><rect x="6" y="14" width="1" height="1" fill="#000"/><rect x="8" y="14" width="1" height="1" fill="#000"/><rect x="10" y="14" width="1" height="1" fill="#000"/><rect x="12" y="14" width="1" height="1" fill="#000"/><rect x="13" y="13" width="1" height="1" fill="#000"/><rect x="14" y="12" width="1" height="1" fill="#000"/><rect x="15" y="11" width="1" height="1" fill="#000"/><rect x="12" y="2" width="1" height="1" fill="#000"/><rect x="16" y="2" width="1" height="1" fill="#000"/><rect x="13" y="5" width="1" height="1" fill="#000"/><rect x="15" y="5" width="1" height="1" fill="#000"/><rect x="16" y="4" width="1" height="1" fill="#000"/></svg>
<div style="left:865px;top:355px;width:18px;height:19px;background:#D6D3CE;border-style:solid;border-width:0 1px 1px 0;border-color:#404040;box-sizing:border-box;box-shadow:inset -1px -1px #808080;"></div>
<svg style="left:865px;top:355px" width="18" height="19" viewBox="0 0 18 19" shape-rendering="crispEdges"><path d="M2.5 4.5 h3 l1 1 h6 l1 3 v3 l-2 3 h-9z" fill="#f0f040"/><path d="M6 13.5 l5 -4 h2.5 l-2 4z" fill="#b8b0c8"/><rect x="2" y="4" width="1" height="1" fill="#404040"/><rect x="4" y="4" width="1" height="1" fill="#404040"/><rect x="2" y="6" width="1" height="1" fill="#404040"/><rect x="2" y="8" width="1" height="1" fill="#404040"/><rect x="2" y="10" width="1" height="1" fill="#404040"/><rect x="2" y="12" width="1" height="1" fill="#404040"/><rect x="3" y="14" width="1" height="1" fill="#404040"/><rect x="5" y="14" width="1" height="1" fill="#404040"/><rect x="7" y="14" width="1" height="1" fill="#404040"/><rect x="9" y="14" width="1" height="1" fill="#404040"/><rect x="11" y="14" width="1" height="1" fill="#404040"/><rect x="6" y="5" width="1" height="1" fill="#404040"/><rect x="8" y="5" width="1" height="1" fill="#404040"/><rect x="10" y="5" width="1" height="1" fill="#404040"/><rect x="12" y="6" width="1" height="1" fill="#404040"/><rect x="13" y="8" width="1" height="1" fill="#404040"/><rect x="13" y="10" width="1" height="1" fill="#404040"/><rect x="12" y="12" width="1" height="1" fill="#404040"/><rect x="4" y="13" width="1" height="1" fill="#404040"/><rect x="6" y="12" width="1" height="1" fill="#404040"/><rect x="8" y="11" width="1" height="1" fill="#404040"/><rect x="10" y="10" width="1" height="1" fill="#404040"/><rect x="10" y="2" width="1" height="1" fill="#000"/><rect x="11" y="1" width="1" height="1" fill="#000"/><rect x="13" y="1" width="1" height="1" fill="#000"/><rect x="14" y="2" width="1" height="1" fill="#000"/><rect x="15" y="3" width="1" height="1" fill="#000"/><rect x="16" y="2" width="1" height="1" fill="#000"/><rect x="14" y="4" width="1" height="1" fill="#000"/><rect x="16" y="4" width="1" height="1" fill="#000"/></svg>
<div style="left:887px;top:358px;width:13px;height:13px;background:#D6D3CE;border-style:solid;border-width:1px;border-color:#808080 #FFFFFF #FFFFFF #808080;box-sizing:border-box;box-shadow:inset 1px 1px #404040, inset -1px -1px #D6D3CE;"></div>
<div class="t" style="left:906px;top:359px;font-size:12px;line-height:14px;color:#FFFFFF;">р/к</div>
<div class="t" style="left:905px;top:358px;font-size:12px;line-height:14px;color:#808080;">р/к</div>
<div style="left:926px;top:358px;width:13px;height:13px;background:#D6D3CE;border-style:solid;border-width:1px;border-color:#808080 #FFFFFF #FFFFFF #808080;box-sizing:border-box;box-shadow:inset 1px 1px #404040, inset -1px -1px #D6D3CE;"></div>
<div class="t" style="left:945px;top:359px;font-size:12px;line-height:14px;color:#FFFFFF;">тариф</div>
<div class="t" style="left:944px;top:358px;font-size:12px;line-height:14px;color:#808080;">тариф</div>
<div style="left:983px;top:358px;width:13px;height:13px;background:#D6D3CE;border-style:solid;border-width:1px;border-color:#808080 #FFFFFF #FFFFFF #808080;box-sizing:border-box;box-shadow:inset 1px 1px #404040, inset -1px -1px #D6D3CE;"></div>
<div style="left:1001px;top:355px;width:18px;height:19px;background:#D6D3CE;border-style:solid;border-width:1px;border-color:#FFFFFF #404040 #404040 #FFFFFF;box-sizing:border-box;box-shadow:inset -1px -1px #808080;"></div>
<div class="t" style="left:1005px;top:362px;font-size:10px;line-height:12px;color:#FFFFFF;">...</div>
<div class="t" style="left:1004px;top:361px;font-size:10px;line-height:12px;color:#808080;">...</div>
<div style="left:25px;top:374px;width:80px;height:19px;background:#E0DFE3;border-style:solid;border-width:1px;border-color:#808080 #FFFFFF #FFFFFF #808080;box-sizing:border-box;box-shadow:inset 1px 1px #404040, inset -1px -1px #D6D3CE;"></div>
<div style="left:105px;top:374px;width:256px;height:19px;background:#FFFFFF;border-style:solid;border-width:1px;border-color:#808080 #FFFFFF #FFFFFF #808080;box-sizing:border-box;box-shadow:inset 1px 1px #404040, inset -1px -1px #D6D3CE;"></div>
<div style="left:379px;top:374px;width:79px;height:19px;background:#FFFFFF;border-style:solid;border-width:1px;border-color:#808080 #FFFFFF #FFFFFF #808080;box-sizing:border-box;box-shadow:inset 1px 1px #404040, inset -1px -1px #D6D3CE;"></div>
<div style="left:458px;top:374px;width:79px;height:19px;background:#FFFFFF;border-style:solid;border-width:1px;border-color:#808080 #FFFFFF #FFFFFF #808080;box-sizing:border-box;box-shadow:inset 1px 1px #404040, inset -1px -1px #D6D3CE;"></div>
<div style="left:537px;top:374px;width:80px;height:19px;background:#FFFFFF;border-style:solid;border-width:1px;border-color:#808080 #FFFFFF #FFFFFF #808080;box-sizing:border-box;box-shadow:inset 1px 1px #404040, inset -1px -1px #D6D3CE;"></div>
<div style="left:617px;top:374px;width:121px;height:19px;background:#FFFFFF;border-style:solid;border-width:1px;border-color:#808080 #FFFFFF #FFFFFF #808080;box-sizing:border-box;box-shadow:inset 1px 1px #404040, inset -1px -1px #D6D3CE;"></div>
<div style="left:757px;top:374px;width:107px;height:19px;background:#FFFFFF;border-style:solid;border-width:1px;border-color:#808080 #FFFFFF #FFFFFF #808080;box-sizing:border-box;box-shadow:inset 1px 1px #404040, inset -1px -1px #D6D3CE;"></div>
<div style="left:361px;top:374px;width:18px;height:19px;background:#D6D3CE;border-style:solid;border-width:0 1px 1px 0;border-color:#404040;box-sizing:border-box;box-shadow:inset -1px -1px #808080;"></div>
<svg style="left:361px;top:374px" width="18" height="19" viewBox="0 0 18 19" shape-rendering="crispEdges"><rect x="2" y="4" width="11" height="7" fill="#f4f4f4"/><path d="M2.5 12.5 L4.5 14.5 H12.5 L15.5 11.5 L13 10 H6 Z" fill="#e8f070"/><rect x="2" y="5" width="1" height="1" fill="#808080"/><rect x="2" y="7" width="1" height="1" fill="#808080"/><rect x="2" y="9" width="1" height="1" fill="#808080"/><rect x="2" y="11" width="1" height="1" fill="#808080"/><rect x="4" y="4" width="1" height="1" fill="#808080"/><rect x="6" y="4" width="1" height="1" fill="#808080"/><rect x="8" y="5" width="1" height="1" fill="#808080"/><rect x="10" y="5" width="1" height="1" fill="#808080"/><rect x="12" y="5" width="1" height="1" fill="#808080"/><rect x="13" y="7" width="1" height="1" fill="#808080"/><rect x="4" y="10" width="1" height="1" fill="#808080"/><rect x="6" y="10" width="1" height="1" fill="#808080"/><rect x="8" y="10" width="1" height="1" fill="#808080"/><rect x="10" y="10" width="1" height="1" fill="#808080"/><rect x="12" y="10" width="1" height="1" fill="#808080"/><rect x="4" y="14" width="1" height="1" fill="#000"/><rect x="6" y="14" width="1" height="1" fill="#000"/><rect x="8" y="14" width="1" height="1" fill="#000"/><rect x="10" y="14" width="1" height="1" fill="#000"/><rect x="12" y="14" width="1" height="1" fill="#000"/><rect x="13" y="13" width="1" height="1" fill="#000"/><rect x="14" y="12" width="1" height="1" fill="#000"/><rect x="15" y="11" width="1" height="1" fill="#000"/><rect x="12" y="2" width="1" height="1" fill="#000"/><rect x="16" y="2" width="1" height="1" fill="#000"/><rect x="13" y="5" width="1" height="1" fill="#000"/><rect x="15" y="5" width="1" height="1" fill="#000"/><rect x="16" y="4" width="1" height="1" fill="#000"/></svg>
<div style="left:739px;top:374px;width:18px;height:19px;background:#D6D3CE;border-style:solid;border-width:0 1px 1px 0;border-color:#404040;box-sizing:border-box;box-shadow:inset -1px -1px #808080;"></div>
<svg style="left:739px;top:374px" width="18" height="19" viewBox="0 0 18 19" shape-rendering="crispEdges"><rect x="2" y="4" width="11" height="7" fill="#f4f4f4"/><path d="M2.5 12.5 L4.5 14.5 H12.5 L15.5 11.5 L13 10 H6 Z" fill="#e8f070"/><rect x="2" y="5" width="1" height="1" fill="#808080"/><rect x="2" y="7" width="1" height="1" fill="#808080"/><rect x="2" y="9" width="1" height="1" fill="#808080"/><rect x="2" y="11" width="1" height="1" fill="#808080"/><rect x="4" y="4" width="1" height="1" fill="#808080"/><rect x="6" y="4" width="1" height="1" fill="#808080"/><rect x="8" y="5" width="1" height="1" fill="#808080"/><rect x="10" y="5" width="1" height="1" fill="#808080"/><rect x="12" y="5" width="1" height="1" fill="#808080"/><rect x="13" y="7" width="1" height="1" fill="#808080"/><rect x="4" y="10" width="1" height="1" fill="#808080"/><rect x="6" y="10" width="1" height="1" fill="#808080"/><rect x="8" y="10" width="1" height="1" fill="#808080"/><rect x="10" y="10" width="1" height="1" fill="#808080"/><rect x="12" y="10" width="1" height="1" fill="#808080"/><rect x="4" y="14" width="1" height="1" fill="#000"/><rect x="6" y="14" width="1" height="1" fill="#000"/><rect x="8" y="14" width="1" height="1" fill="#000"/><rect x="10" y="14" width="1" height="1" fill="#000"/><rect x="12" y="14" width="1" height="1" fill="#000"/><rect x="13" y="13" width="1" height="1" fill="#000"/><rect x="14" y="12" width="1" height="1" fill="#000"/><rect x="15" y="11" width="1" height="1" fill="#000"/><rect x="12" y="2" width="1" height="1" fill="#000"/><rect x="16" y="2" width="1" height="1" fill="#000"/><rect x="13" y="5" width="1" height="1" fill="#000"/><rect x="15" y="5" width="1" height="1" fill="#000"/><rect x="16" y="4" width="1" height="1" fill="#000"/></svg>
<div style="left:865px;top:374px;width:18px;height:19px;background:#D6D3CE;border-style:solid;border-width:0 1px 1px 0;border-color:#404040;box-sizing:border-box;box-shadow:inset -1px -1px #808080;"></div>
<svg style="left:865px;top:374px" width="18" height="19" viewBox="0 0 18 19" shape-rendering="crispEdges"><rect x="2" y="4" width="11" height="7" fill="#f4f4f4"/><path d="M2.5 12.5 L4.5 14.5 H12.5 L15.5 11.5 L13 10 H6 Z" fill="#e8f070"/><rect x="2" y="5" width="1" height="1" fill="#808080"/><rect x="2" y="7" width="1" height="1" fill="#808080"/><rect x="2" y="9" width="1" height="1" fill="#808080"/><rect x="2" y="11" width="1" height="1" fill="#808080"/><rect x="4" y="4" width="1" height="1" fill="#808080"/><rect x="6" y="4" width="1" height="1" fill="#808080"/><rect x="8" y="5" width="1" height="1" fill="#808080"/><rect x="10" y="5" width="1" height="1" fill="#808080"/><rect x="12" y="5" width="1" height="1" fill="#808080"/><rect x="13" y="7" width="1" height="1" fill="#808080"/><rect x="4" y="10" width="1" height="1" fill="#808080"/><rect x="6" y="10" width="1" height="1" fill="#808080"/><rect x="8" y="10" width="1" height="1" fill="#808080"/><rect x="10" y="10" width="1" height="1" fill="#808080"/><rect x="12" y="10" width="1" height="1" fill="#808080"/><rect x="4" y="14" width="1" height="1" fill="#000"/><rect x="6" y="14" width="1" height="1" fill="#000"/><rect x="8" y="14" width="1" height="1" fill="#000"/><rect x="10" y="14" width="1" height="1" fill="#000"/><rect x="12" y="14" width="1" height="1" fill="#000"/><rect x="13" y="13" width="1" height="1" fill="#000"/><rect x="14" y="12" width="1" height="1" fill="#000"/><rect x="15" y="11" width="1" height="1" fill="#000"/><rect x="12" y="2" width="1" height="1" fill="#000"/><rect x="16" y="2" width="1" height="1" fill="#000"/><rect x="13" y="5" width="1" height="1" fill="#000"/><rect x="15" y="5" width="1" height="1" fill="#000"/><rect x="16" y="4" width="1" height="1" fill="#000"/></svg>
<div style="left:887px;top:377px;width:13px;height:13px;background:#D6D3CE;border-style:solid;border-width:1px;border-color:#808080 #FFFFFF #FFFFFF #808080;box-sizing:border-box;box-shadow:inset 1px 1px #404040, inset -1px -1px #D6D3CE;"></div>
<div class="t" style="left:906px;top:378px;font-size:12px;line-height:14px;color:#FFFFFF;">р/к</div>
<div class="t" style="left:905px;top:377px;font-size:12px;line-height:14px;color:#808080;">р/к</div>
<div style="left:926px;top:377px;width:13px;height:13px;background:#D6D3CE;border-style:solid;border-width:1px;border-color:#808080 #FFFFFF #FFFFFF #808080;box-sizing:border-box;box-shadow:inset 1px 1px #404040, inset -1px -1px #D6D3CE;"></div>
<div class="t" style="left:945px;top:378px;font-size:12px;line-height:14px;color:#FFFFFF;">тариф</div>
<div class="t" style="left:944px;top:377px;font-size:12px;line-height:14px;color:#808080;">тариф</div>
<div style="left:983px;top:377px;width:13px;height:13px;background:#D6D3CE;border-style:solid;border-width:1px;border-color:#808080 #FFFFFF #FFFFFF #808080;box-sizing:border-box;box-shadow:inset 1px 1px #404040, inset -1px -1px #D6D3CE;"></div>
<div style="left:1001px;top:374px;width:18px;height:19px;background:#D6D3CE;border-style:solid;border-width:1px;border-color:#FFFFFF #404040 #404040 #FFFFFF;box-sizing:border-box;box-shadow:inset -1px -1px #808080;"></div>
<div class="t" style="left:1005px;top:381px;font-size:10px;line-height:12px;color:#FFFFFF;">...</div>
<div class="t" style="left:1004px;top:380px;font-size:10px;line-height:12px;color:#808080;">...</div>
<div style="left:25px;top:393px;width:80px;height:19px;background:#E0DFE3;border-style:solid;border-width:1px;border-color:#808080 #FFFFFF #FFFFFF #808080;box-sizing:border-box;box-shadow:inset 1px 1px #404040, inset -1px -1px #D6D3CE;"></div>
<div style="left:105px;top:393px;width:256px;height:19px;background:#FFFFFF;border-style:solid;border-width:1px;border-color:#808080 #FFFFFF #FFFFFF #808080;box-sizing:border-box;box-shadow:inset 1px 1px #404040, inset -1px -1px #D6D3CE;"></div>
<div style="left:379px;top:393px;width:79px;height:19px;background:#FFFFFF;border-style:solid;border-width:1px;border-color:#808080 #FFFFFF #FFFFFF #808080;box-sizing:border-box;box-shadow:inset 1px 1px #404040, inset -1px -1px #D6D3CE;"></div>
<div style="left:458px;top:393px;width:79px;height:19px;background:#FFFFFF;border-style:solid;border-width:1px;border-color:#808080 #FFFFFF #FFFFFF #808080;box-sizing:border-box;box-shadow:inset 1px 1px #404040, inset -1px -1px #D6D3CE;"></div>
<div style="left:537px;top:393px;width:80px;height:19px;background:#FFFFFF;border-style:solid;border-width:1px;border-color:#808080 #FFFFFF #FFFFFF #808080;box-sizing:border-box;box-shadow:inset 1px 1px #404040, inset -1px -1px #D6D3CE;"></div>
<div style="left:617px;top:393px;width:121px;height:19px;background:#FFFFFF;border-style:solid;border-width:1px;border-color:#808080 #FFFFFF #FFFFFF #808080;box-sizing:border-box;box-shadow:inset 1px 1px #404040, inset -1px -1px #D6D3CE;"></div>
<div style="left:757px;top:393px;width:107px;height:19px;background:#FFFFFF;border-style:solid;border-width:1px;border-color:#808080 #FFFFFF #FFFFFF #808080;box-sizing:border-box;box-shadow:inset 1px 1px #404040, inset -1px -1px #D6D3CE;"></div>
<div style="left:361px;top:393px;width:18px;height:19px;background:#D6D3CE;border-style:solid;border-width:0 1px 1px 0;border-color:#404040;box-sizing:border-box;box-shadow:inset -1px -1px #808080;"></div>
<svg style="left:361px;top:393px" width="18" height="19" viewBox="0 0 18 19" shape-rendering="crispEdges"><rect x="2" y="4" width="11" height="7" fill="#f4f4f4"/><path d="M2.5 12.5 L4.5 14.5 H12.5 L15.5 11.5 L13 10 H6 Z" fill="#e8f070"/><rect x="2" y="5" width="1" height="1" fill="#808080"/><rect x="2" y="7" width="1" height="1" fill="#808080"/><rect x="2" y="9" width="1" height="1" fill="#808080"/><rect x="2" y="11" width="1" height="1" fill="#808080"/><rect x="4" y="4" width="1" height="1" fill="#808080"/><rect x="6" y="4" width="1" height="1" fill="#808080"/><rect x="8" y="5" width="1" height="1" fill="#808080"/><rect x="10" y="5" width="1" height="1" fill="#808080"/><rect x="12" y="5" width="1" height="1" fill="#808080"/><rect x="13" y="7" width="1" height="1" fill="#808080"/><rect x="4" y="10" width="1" height="1" fill="#808080"/><rect x="6" y="10" width="1" height="1" fill="#808080"/><rect x="8" y="10" width="1" height="1" fill="#808080"/><rect x="10" y="10" width="1" height="1" fill="#808080"/><rect x="12" y="10" width="1" height="1" fill="#808080"/><rect x="4" y="14" width="1" height="1" fill="#000"/><rect x="6" y="14" width="1" height="1" fill="#000"/><rect x="8" y="14" width="1" height="1" fill="#000"/><rect x="10" y="14" width="1" height="1" fill="#000"/><rect x="12" y="14" width="1" height="1" fill="#000"/><rect x="13" y="13" width="1" height="1" fill="#000"/><rect x="14" y="12" width="1" height="1" fill="#000"/><rect x="15" y="11" width="1" height="1" fill="#000"/><rect x="12" y="2" width="1" height="1" fill="#000"/><rect x="16" y="2" width="1" height="1" fill="#000"/><rect x="13" y="5" width="1" height="1" fill="#000"/><rect x="15" y="5" width="1" height="1" fill="#000"/><rect x="16" y="4" width="1" height="1" fill="#000"/></svg>
<div style="left:739px;top:393px;width:18px;height:19px;background:#D6D3CE;border-style:solid;border-width:0 1px 1px 0;border-color:#404040;box-sizing:border-box;box-shadow:inset -1px -1px #808080;"></div>
<svg style="left:739px;top:393px" width="18" height="19" viewBox="0 0 18 19" shape-rendering="crispEdges"><rect x="2" y="4" width="11" height="7" fill="#f4f4f4"/><path d="M2.5 12.5 L4.5 14.5 H12.5 L15.5 11.5 L13 10 H6 Z" fill="#e8f070"/><rect x="2" y="5" width="1" height="1" fill="#808080"/><rect x="2" y="7" width="1" height="1" fill="#808080"/><rect x="2" y="9" width="1" height="1" fill="#808080"/><rect x="2" y="11" width="1" height="1" fill="#808080"/><rect x="4" y="4" width="1" height="1" fill="#808080"/><rect x="6" y="4" width="1" height="1" fill="#808080"/><rect x="8" y="5" width="1" height="1" fill="#808080"/><rect x="10" y="5" width="1" height="1" fill="#808080"/><rect x="12" y="5" width="1" height="1" fill="#808080"/><rect x="13" y="7" width="1" height="1" fill="#808080"/><rect x="4" y="10" width="1" height="1" fill="#808080"/><rect x="6" y="10" width="1" height="1" fill="#808080"/><rect x="8" y="10" width="1" height="1" fill="#808080"/><rect x="10" y="10" width="1" height="1" fill="#808080"/><rect x="12" y="10" width="1" height="1" fill="#808080"/><rect x="4" y="14" width="1" height="1" fill="#000"/><rect x="6" y="14" width="1" height="1" fill="#000"/><rect x="8" y="14" width="1" height="1" fill="#000"/><rect x="10" y="14" width="1" height="1" fill="#000"/><rect x="12" y="14" width="1" height="1" fill="#000"/><rect x="13" y="13" width="1" height="1" fill="#000"/><rect x="14" y="12" width="1" height="1" fill="#000"/><rect x="15" y="11" width="1" height="1" fill="#000"/><rect x="12" y="2" width="1" height="1" fill="#000"/><rect x="16" y="2" width="1" height="1" fill="#000"/><rect x="13" y="5" width="1" height="1" fill="#000"/><rect x="15" y="5" width="1" height="1" fill="#000"/><rect x="16" y="4" width="1" height="1" fill="#000"/></svg>
<div style="left:865px;top:393px;width:18px;height:19px;background:#D6D3CE;border-style:solid;border-width:0 1px 1px 0;border-color:#404040;box-sizing:border-box;box-shadow:inset -1px -1px #808080;"></div>
<svg style="left:865px;top:393px" width="18" height="19" viewBox="0 0 18 19" shape-rendering="crispEdges"><rect x="2" y="4" width="11" height="7" fill="#f4f4f4"/><path d="M2.5 12.5 L4.5 14.5 H12.5 L15.5 11.5 L13 10 H6 Z" fill="#e8f070"/><rect x="2" y="5" width="1" height="1" fill="#808080"/><rect x="2" y="7" width="1" height="1" fill="#808080"/><rect x="2" y="9" width="1" height="1" fill="#808080"/><rect x="2" y="11" width="1" height="1" fill="#808080"/><rect x="4" y="4" width="1" height="1" fill="#808080"/><rect x="6" y="4" width="1" height="1" fill="#808080"/><rect x="8" y="5" width="1" height="1" fill="#808080"/><rect x="10" y="5" width="1" height="1" fill="#808080"/><rect x="12" y="5" width="1" height="1" fill="#808080"/><rect x="13" y="7" width="1" height="1" fill="#808080"/><rect x="4" y="10" width="1" height="1" fill="#808080"/><rect x="6" y="10" width="1" height="1" fill="#808080"/><rect x="8" y="10" width="1" height="1" fill="#808080"/><rect x="10" y="10" width="1" height="1" fill="#808080"/><rect x="12" y="10" width="1" height="1" fill="#808080"/><rect x="4" y="14" width="1" height="1" fill="#000"/><rect x="6" y="14" width="1" height="1" fill="#000"/><rect x="8" y="14" width="1" height="1" fill="#000"/><rect x="10" y="14" width="1" height="1" fill="#000"/><rect x="12" y="14" width="1" height="1" fill="#000"/><rect x="13" y="13" width="1" height="1" fill="#000"/><rect x="14" y="12" width="1" height="1" fill="#000"/><rect x="15" y="11" width="1" height="1" fill="#000"/><rect x="12" y="2" width="1" height="1" fill="#000"/><rect x="16" y="2" width="1" height="1" fill="#000"/><rect x="13" y="5" width="1" height="1" fill="#000"/><rect x="15" y="5" width="1" height="1" fill="#000"/><rect x="16" y="4" width="1" height="1" fill="#000"/></svg>
<div style="left:887px;top:396px;width:13px;height:13px;background:#D6D3CE;border-style:solid;border-width:1px;border-color:#808080 #FFFFFF #FFFFFF #808080;box-sizing:border-box;box-shadow:inset 1px 1px #404040, inset -1px -1px #D6D3CE;"></div>
<div class="t" style="left:906px;top:397px;font-size:12px;line-height:14px;color:#FFFFFF;">р/к</div>
<div class="t" style="left:905px;top:396px;font-size:12px;line-height:14px;color:#808080;">р/к</div>
<div style="left:926px;top:396px;width:13px;height:13px;background:#D6D3CE;border-style:solid;border-width:1px;border-color:#808080 #FFFFFF #FFFFFF #808080;box-sizing:border-box;box-shadow:inset 1px 1px #404040, inset -1px -1px #D6D3CE;"></div>
<div class="t" style="left:945px;top:397px;font-size:12px;line-height:14px;color:#FFFFFF;">тариф</div>
<div class="t" style="left:944px;top:396px;font-size:12px;line-height:14px;color:#808080;">тариф</div>
<div style="left:983px;top:396px;width:13px;height:13px;background:#D6D3CE;border-style:solid;border-width:1px;border-color:#808080 #FFFFFF #FFFFFF #808080;box-sizing:border-box;box-shadow:inset 1px 1px #404040, inset -1px -1px #D6D3CE;"></div>
<div style="left:1001px;top:393px;width:18px;height:19px;background:#D6D3CE;border-style:solid;border-width:1px;border-color:#FFFFFF #404040 #404040 #FFFFFF;box-sizing:border-box;box-shadow:inset -1px -1px #808080;"></div>
<div class="t" style="left:1005px;top:400px;font-size:10px;line-height:12px;color:#FFFFFF;">...</div>
<div class="t" style="left:1004px;top:399px;font-size:10px;line-height:12px;color:#808080;">...</div>
<div style="left:25px;top:411px;width:80px;height:19px;background:#E0DFE3;border-style:solid;border-width:1px;border-color:#808080 #FFFFFF #FFFFFF #808080;box-sizing:border-box;box-shadow:inset 1px 1px #404040, inset -1px -1px #D6D3CE;"></div>
<div style="left:105px;top:411px;width:256px;height:19px;background:#FFFFFF;border-style:solid;border-width:1px;border-color:#808080 #FFFFFF #FFFFFF #808080;box-sizing:border-box;box-shadow:inset 1px 1px #404040, inset -1px -1px #D6D3CE;"></div>
<div style="left:379px;top:411px;width:79px;height:19px;background:#FFFFFF;border-style:solid;border-width:1px;border-color:#808080 #FFFFFF #FFFFFF #808080;box-sizing:border-box;box-shadow:inset 1px 1px #404040, inset -1px -1px #D6D3CE;"></div>
<div style="left:458px;top:411px;width:79px;height:19px;background:#FFFFFF;border-style:solid;border-width:1px;border-color:#808080 #FFFFFF #FFFFFF #808080;box-sizing:border-box;box-shadow:inset 1px 1px #404040, inset -1px -1px #D6D3CE;"></div>
<div style="left:537px;top:411px;width:80px;height:19px;background:#FFFFFF;border-style:solid;border-width:1px;border-color:#808080 #FFFFFF #FFFFFF #808080;box-sizing:border-box;box-shadow:inset 1px 1px #404040, inset -1px -1px #D6D3CE;"></div>
<div style="left:617px;top:411px;width:121px;height:19px;background:#FFFFFF;border-style:solid;border-width:1px;border-color:#808080 #FFFFFF #FFFFFF #808080;box-sizing:border-box;box-shadow:inset 1px 1px #404040, inset -1px -1px #D6D3CE;"></div>
<div style="left:757px;top:411px;width:107px;height:19px;background:#FFFFFF;border-style:solid;border-width:1px;border-color:#808080 #FFFFFF #FFFFFF #808080;box-sizing:border-box;box-shadow:inset 1px 1px #404040, inset -1px -1px #D6D3CE;"></div>
<div style="left:361px;top:411px;width:18px;height:19px;background:#D6D3CE;border-style:solid;border-width:0 1px 1px 0;border-color:#404040;box-sizing:border-box;box-shadow:inset -1px -1px #808080;"></div>
<svg style="left:361px;top:411px" width="18" height="19" viewBox="0 0 18 19" shape-rendering="crispEdges"><rect x="2" y="4" width="11" height="7" fill="#f4f4f4"/><path d="M2.5 12.5 L4.5 14.5 H12.5 L15.5 11.5 L13 10 H6 Z" fill="#e8f070"/><rect x="2" y="5" width="1" height="1" fill="#808080"/><rect x="2" y="7" width="1" height="1" fill="#808080"/><rect x="2" y="9" width="1" height="1" fill="#808080"/><rect x="2" y="11" width="1" height="1" fill="#808080"/><rect x="4" y="4" width="1" height="1" fill="#808080"/><rect x="6" y="4" width="1" height="1" fill="#808080"/><rect x="8" y="5" width="1" height="1" fill="#808080"/><rect x="10" y="5" width="1" height="1" fill="#808080"/><rect x="12" y="5" width="1" height="1" fill="#808080"/><rect x="13" y="7" width="1" height="1" fill="#808080"/><rect x="4" y="10" width="1" height="1" fill="#808080"/><rect x="6" y="10" width="1" height="1" fill="#808080"/><rect x="8" y="10" width="1" height="1" fill="#808080"/><rect x="10" y="10" width="1" height="1" fill="#808080"/><rect x="12" y="10" width="1" height="1" fill="#808080"/><rect x="4" y="14" width="1" height="1" fill="#000"/><rect x="6" y="14" width="1" height="1" fill="#000"/><rect x="8" y="14" width="1" height="1" fill="#000"/><rect x="10" y="14" width="1" height="1" fill="#000"/><rect x="12" y="14" width="1" height="1" fill="#000"/><rect x="13" y="13" width="1" height="1" fill="#000"/><rect x="14" y="12" width="1" height="1" fill="#000"/><rect x="15" y="11" width="1" height="1" fill="#000"/><rect x="12" y="2" width="1" height="1" fill="#000"/><rect x="16" y="2" width="1" height="1" fill="#000"/><rect x="13" y="5" width="1" height="1" fill="#000"/><rect x="15" y="5" width="1" height="1" fill="#000"/><rect x="16" y="4" width="1" height="1" fill="#000"/></svg>
<div style="left:739px;top:411px;width:18px;height:19px;background:#D6D3CE;border-style:solid;border-width:0 1px 1px 0;border-color:#404040;box-sizing:border-box;box-shadow:inset -1px -1px #808080;"></div>
<svg style="left:739px;top:411px" width="18" height="19" viewBox="0 0 18 19" shape-rendering="crispEdges"><rect x="2" y="4" width="11" height="7" fill="#f4f4f4"/><path d="M2.5 12.5 L4.5 14.5 H12.5 L15.5 11.5 L13 10 H6 Z" fill="#e8f070"/><rect x="2" y="5" width="1" height="1" fill="#808080"/><rect x="2" y="7" width="1" height="1" fill="#808080"/><rect x="2" y="9" width="1" height="1" fill="#808080"/><rect x="2" y="11" width="1" height="1" fill="#808080"/><rect x="4" y="4" width="1" height="1" fill="#808080"/><rect x="6" y="4" width="1" height="1" fill="#808080"/><rect x="8" y="5" width="1" height="1" fill="#808080"/><rect x="10" y="5" width="1" height="1" fill="#808080"/><rect x="12" y="5" width="1" height="1" fill="#808080"/><rect x="13" y="7" width="1" height="1" fill="#808080"/><rect x="4" y="10" width="1" height="1" fill="#808080"/><rect x="6" y="10" width="1" height="1" fill="#808080"/><rect x="8" y="10" width="1" height="1" fill="#808080"/><rect x="10" y="10" width="1" height="1" fill="#808080"/><rect x="12" y="10" width="1" height="1" fill="#808080"/><rect x="4" y="14" width="1" height="1" fill="#000"/><rect x="6" y="14" width="1" height="1" fill="#000"/><rect x="8" y="14" width="1" height="1" fill="#000"/><rect x="10" y="14" width="1" height="1" fill="#000"/><rect x="12" y="14" width="1" height="1" fill="#000"/><rect x="13" y="13" width="1" height="1" fill="#000"/><rect x="14" y="12" width="1" height="1" fill="#000"/><rect x="15" y="11" width="1" height="1" fill="#000"/><rect x="12" y="2" width="1" height="1" fill="#000"/><rect x="16" y="2" width="1" height="1" fill="#000"/><rect x="13" y="5" width="1" height="1" fill="#000"/><rect x="15" y="5" width="1" height="1" fill="#000"/><rect x="16" y="4" width="1" height="1" fill="#000"/></svg>
<div style="left:865px;top:411px;width:18px;height:19px;background:#D6D3CE;border-style:solid;border-width:0 1px 1px 0;border-color:#404040;box-sizing:border-box;box-shadow:inset -1px -1px #808080;"></div>
<svg style="left:865px;top:411px" width="18" height="19" viewBox="0 0 18 19" shape-rendering="crispEdges"><path d="M2.5 4.5 h3 l1 1 h6 l1 3 v3 l-2 3 h-9z" fill="#f0f040"/><path d="M6 13.5 l5 -4 h2.5 l-2 4z" fill="#b8b0c8"/><rect x="2" y="4" width="1" height="1" fill="#404040"/><rect x="4" y="4" width="1" height="1" fill="#404040"/><rect x="2" y="6" width="1" height="1" fill="#404040"/><rect x="2" y="8" width="1" height="1" fill="#404040"/><rect x="2" y="10" width="1" height="1" fill="#404040"/><rect x="2" y="12" width="1" height="1" fill="#404040"/><rect x="3" y="14" width="1" height="1" fill="#404040"/><rect x="5" y="14" width="1" height="1" fill="#404040"/><rect x="7" y="14" width="1" height="1" fill="#404040"/><rect x="9" y="14" width="1" height="1" fill="#404040"/><rect x="11" y="14" width="1" height="1" fill="#404040"/><rect x="6" y="5" width="1" height="1" fill="#404040"/><rect x="8" y="5" width="1" height="1" fill="#404040"/><rect x="10" y="5" width="1" height="1" fill="#404040"/><rect x="12" y="6" width="1" height="1" fill="#404040"/><rect x="13" y="8" width="1" height="1" fill="#404040"/><rect x="13" y="10" width="1" height="1" fill="#404040"/><rect x="12" y="12" width="1" height="1" fill="#404040"/><rect x="4" y="13" width="1" height="1" fill="#404040"/><rect x="6" y="12" width="1" height="1" fill="#404040"/><rect x="8" y="11" width="1" height="1" fill="#404040"/><rect x="10" y="10" width="1" height="1" fill="#404040"/><rect x="10" y="2" width="1" height="1" fill="#000"/><rect x="11" y="1" width="1" height="1" fill="#000"/><rect x="13" y="1" width="1" height="1" fill="#000"/><rect x="14" y="2" width="1" height="1" fill="#000"/><rect x="15" y="3" width="1" height="1" fill="#000"/><rect x="16" y="2" width="1" height="1" fill="#000"/><rect x="14" y="4" width="1" height="1" fill="#000"/><rect x="16" y="4" width="1" height="1" fill="#000"/></svg>
<div style="left:887px;top:414px;width:13px;height:13px;background:#D6D3CE;border-style:solid;border-width:1px;border-color:#808080 #FFFFFF #FFFFFF #808080;box-sizing:border-box;box-shadow:inset 1px 1px #404040, inset -1px -1px #D6D3CE;"></div>
<div class="t" style="left:906px;top:415px;font-size:12px;line-height:14px;color:#FFFFFF;">р/к</div>
<div class="t" style="left:905px;top:414px;font-size:12px;line-height:14px;color:#808080;">р/к</div>
<div style="left:926px;top:414px;width:13px;height:13px;background:#D6D3CE;border-style:solid;border-width:1px;border-color:#808080 #FFFFFF #FFFFFF #808080;box-sizing:border-box;box-shadow:inset 1px 1px #404040, inset -1px -1px #D6D3CE;"></div>
<div class="t" style="left:945px;top:415px;font-size:12px;line-height:14px;color:#FFFFFF;">тариф</div>
<div class="t" style="left:944px;top:414px;font-size:12px;line-height:14px;color:#808080;">тариф</div>
<div style="left:983px;top:414px;width:13px;height:13px;background:#D6D3CE;border-style:solid;border-width:1px;border-color:#808080 #FFFFFF #FFFFFF #808080;box-sizing:border-box;box-shadow:inset 1px 1px #404040, inset -1px -1px #D6D3CE;"></div>
<div style="left:1001px;top:411px;width:18px;height:19px;background:#D6D3CE;border-style:solid;border-width:1px;border-color:#FFFFFF #404040 #404040 #FFFFFF;box-sizing:border-box;box-shadow:inset -1px -1px #808080;"></div>
<div class="t" style="left:1005px;top:418px;font-size:10px;line-height:12px;color:#FFFFFF;">...</div>
<div class="t" style="left:1004px;top:417px;font-size:10px;line-height:12px;color:#808080;">...</div>
<div style="left:25px;top:430px;width:80px;height:19px;background:#E0DFE3;border-style:solid;border-width:1px;border-color:#808080 #FFFFFF #FFFFFF #808080;box-sizing:border-box;box-shadow:inset 1px 1px #404040, inset -1px -1px #D6D3CE;"></div>
<div style="left:105px;top:430px;width:256px;height:19px;background:#FFFFFF;border-style:solid;border-width:1px;border-color:#808080 #FFFFFF #FFFFFF #808080;box-sizing:border-box;box-shadow:inset 1px 1px #404040, inset -1px -1px #D6D3CE;"></div>
<div style="left:379px;top:430px;width:79px;height:19px;background:#FFFFFF;border-style:solid;border-width:1px;border-color:#808080 #FFFFFF #FFFFFF #808080;box-sizing:border-box;box-shadow:inset 1px 1px #404040, inset -1px -1px #D6D3CE;"></div>
<div style="left:458px;top:430px;width:79px;height:19px;background:#FFFFFF;border-style:solid;border-width:1px;border-color:#808080 #FFFFFF #FFFFFF #808080;box-sizing:border-box;box-shadow:inset 1px 1px #404040, inset -1px -1px #D6D3CE;"></div>
<div style="left:537px;top:430px;width:80px;height:19px;background:#FFFFFF;border-style:solid;border-width:1px;border-color:#808080 #FFFFFF #FFFFFF #808080;box-sizing:border-box;box-shadow:inset 1px 1px #404040, inset -1px -1px #D6D3CE;"></div>
<div style="left:617px;top:430px;width:121px;height:19px;background:#FFFFFF;border-style:solid;border-width:1px;border-color:#808080 #FFFFFF #FFFFFF #808080;box-sizing:border-box;box-shadow:inset 1px 1px #404040, inset -1px -1px #D6D3CE;"></div>
<div style="left:757px;top:430px;width:107px;height:19px;background:#FFFFFF;border-style:solid;border-width:1px;border-color:#808080 #FFFFFF #FFFFFF #808080;box-sizing:border-box;box-shadow:inset 1px 1px #404040, inset -1px -1px #D6D3CE;"></div>
<div style="left:361px;top:430px;width:18px;height:19px;background:#D6D3CE;border-style:solid;border-width:0 1px 1px 0;border-color:#404040;box-sizing:border-box;box-shadow:inset -1px -1px #808080;"></div>
<svg style="left:361px;top:430px" width="18" height="19" viewBox="0 0 18 19" shape-rendering="crispEdges"><rect x="2" y="4" width="11" height="7" fill="#f4f4f4"/><path d="M2.5 12.5 L4.5 14.5 H12.5 L15.5 11.5 L13 10 H6 Z" fill="#e8f070"/><rect x="2" y="5" width="1" height="1" fill="#808080"/><rect x="2" y="7" width="1" height="1" fill="#808080"/><rect x="2" y="9" width="1" height="1" fill="#808080"/><rect x="2" y="11" width="1" height="1" fill="#808080"/><rect x="4" y="4" width="1" height="1" fill="#808080"/><rect x="6" y="4" width="1" height="1" fill="#808080"/><rect x="8" y="5" width="1" height="1" fill="#808080"/><rect x="10" y="5" width="1" height="1" fill="#808080"/><rect x="12" y="5" width="1" height="1" fill="#808080"/><rect x="13" y="7" width="1" height="1" fill="#808080"/><rect x="4" y="10" width="1" height="1" fill="#808080"/><rect x="6" y="10" width="1" height="1" fill="#808080"/><rect x="8" y="10" width="1" height="1" fill="#808080"/><rect x="10" y="10" width="1" height="1" fill="#808080"/><rect x="12" y="10" width="1" height="1" fill="#808080"/><rect x="4" y="14" width="1" height="1" fill="#000"/><rect x="6" y="14" width="1" height="1" fill="#000"/><rect x="8" y="14" width="1" height="1" fill="#000"/><rect x="10" y="14" width="1" height="1" fill="#000"/><rect x="12" y="14" width="1" height="1" fill="#000"/><rect x="13" y="13" width="1" height="1" fill="#000"/><rect x="14" y="12" width="1" height="1" fill="#000"/><rect x="15" y="11" width="1" height="1" fill="#000"/><rect x="12" y="2" width="1" height="1" fill="#000"/><rect x="16" y="2" width="1" height="1" fill="#000"/><rect x="13" y="5" width="1" height="1" fill="#000"/><rect x="15" y="5" width="1" height="1" fill="#000"/><rect x="16" y="4" width="1" height="1" fill="#000"/></svg>
<div style="left:739px;top:430px;width:18px;height:19px;background:#D6D3CE;border-style:solid;border-width:0 1px 1px 0;border-color:#404040;box-sizing:border-box;box-shadow:inset -1px -1px #808080;"></div>
<svg style="left:739px;top:430px" width="18" height="19" viewBox="0 0 18 19" shape-rendering="crispEdges"><rect x="2" y="4" width="11" height="7" fill="#f4f4f4"/><path d="M2.5 12.5 L4.5 14.5 H12.5 L15.5 11.5 L13 10 H6 Z" fill="#e8f070"/><rect x="2" y="5" width="1" height="1" fill="#808080"/><rect x="2" y="7" width="1" height="1" fill="#808080"/><rect x="2" y="9" width="1" height="1" fill="#808080"/><rect x="2" y="11" width="1" height="1" fill="#808080"/><rect x="4" y="4" width="1" height="1" fill="#808080"/><rect x="6" y="4" width="1" height="1" fill="#808080"/><rect x="8" y="5" width="1" height="1" fill="#808080"/><rect x="10" y="5" width="1" height="1" fill="#808080"/><rect x="12" y="5" width="1" height="1" fill="#808080"/><rect x="13" y="7" width="1" height="1" fill="#808080"/><rect x="4" y="10" width="1" height="1" fill="#808080"/><rect x="6" y="10" width="1" height="1" fill="#808080"/><rect x="8" y="10" width="1" height="1" fill="#808080"/><rect x="10" y="10" width="1" height="1" fill="#808080"/><rect x="12" y="10" width="1" height="1" fill="#808080"/><rect x="4" y="14" width="1" height="1" fill="#000"/><rect x="6" y="14" width="1" height="1" fill="#000"/><rect x="8" y="14" width="1" height="1" fill="#000"/><rect x="10" y="14" width="1" height="1" fill="#000"/><rect x="12" y="14" width="1" height="1" fill="#000"/><rect x="13" y="13" width="1" height="1" fill="#000"/><rect x="14" y="12" width="1" height="1" fill="#000"/><rect x="15" y="11" width="1" height="1" fill="#000"/><rect x="12" y="2" width="1" height="1" fill="#000"/><rect x="16" y="2" width="1" height="1" fill="#000"/><rect x="13" y="5" width="1" height="1" fill="#000"/><rect x="15" y="5" width="1" height="1" fill="#000"/><rect x="16" y="4" width="1" height="1" fill="#000"/></svg>
<div style="left:865px;top:430px;width:18px;height:19px;background:#D6D3CE;border-style:solid;border-width:0 1px 1px 0;border-color:#404040;box-sizing:border-box;box-shadow:inset -1px -1px #808080;"></div>
<svg style="left:865px;top:430px" width="18" height="19" viewBox="0 0 18 19" shape-rendering="crispEdges"><rect x="2" y="4" width="11" height="7" fill="#f4f4f4"/><path d="M2.5 12.5 L4.5 14.5 H12.5 L15.5 11.5 L13 10 H6 Z" fill="#e8f070"/><rect x="2" y="5" width="1" height="1" fill="#808080"/><rect x="2" y="7" width="1" height="1" fill="#808080"/><rect x="2" y="9" width="1" height="1" fill="#808080"/><rect x="2" y="11" width="1" height="1" fill="#808080"/><rect x="4" y="4" width="1" height="1" fill="#808080"/><rect x="6" y="4" width="1" height="1" fill="#808080"/><rect x="8" y="5" width="1" height="1" fill="#808080"/><rect x="10" y="5" width="1" height="1" fill="#808080"/><rect x="12" y="5" width="1" height="1" fill="#808080"/><rect x="13" y="7" width="1" height="1" fill="#808080"/><rect x="4" y="10" width="1" height="1" fill="#808080"/><rect x="6" y="10" width="1" height="1" fill="#808080"/><rect x="8" y="10" width="1" height="1" fill="#808080"/><rect x="10" y="10" width="1" height="1" fill="#808080"/><rect x="12" y="10" width="1" height="1" fill="#808080"/><rect x="4" y="14" width="1" height="1" fill="#000"/><rect x="6" y="14" width="1" height="1" fill="#000"/><rect x="8" y="14" width="1" height="1" fill="#000"/><rect x="10" y="14" width="1" height="1" fill="#000"/><rect x="12" y="14" width="1" height="1" fill="#000"/><rect x="13" y="13" width="1" height="1" fill="#000"/><rect x="14" y="12" width="1" height="1" fill="#000"/><rect x="15" y="11" width="1" height="1" fill="#000"/><rect x="12" y="2" width="1" height="1" fill="#000"/><rect x="16" y="2" width="1" height="1" fill="#000"/><rect x="13" y="5" width="1" height="1" fill="#000"/><rect x="15" y="5" width="1" height="1" fill="#000"/><rect x="16" y="4" width="1" height="1" fill="#000"/></svg>
<div style="left:887px;top:433px;width:13px;height:13px;background:#D6D3CE;border-style:solid;border-width:1px;border-color:#808080 #FFFFFF #FFFFFF #808080;box-sizing:border-box;box-shadow:inset 1px 1px #404040, inset -1px -1px #D6D3CE;"></div>
<div class="t" style="left:906px;top:434px;font-size:12px;line-height:14px;color:#FFFFFF;">р/к</div>
<div class="t" style="left:905px;top:433px;font-size:12px;line-height:14px;color:#808080;">р/к</div>
<div style="left:926px;top:433px;width:13px;height:13px;background:#D6D3CE;border-style:solid;border-width:1px;border-color:#808080 #FFFFFF #FFFFFF #808080;box-sizing:border-box;box-shadow:inset 1px 1px #404040, inset -1px -1px #D6D3CE;"></div>
<div class="t" style="left:945px;top:434px;font-size:12px;line-height:14px;color:#FFFFFF;">тариф</div>
<div class="t" style="left:944px;top:433px;font-size:12px;line-height:14px;color:#808080;">тариф</div>
<div style="left:983px;top:433px;width:13px;height:13px;background:#D6D3CE;border-style:solid;border-width:1px;border-color:#808080 #FFFFFF #FFFFFF #808080;box-sizing:border-box;box-shadow:inset 1px 1px #404040, inset -1px -1px #D6D3CE;"></div>
<div style="left:1001px;top:430px;width:18px;height:19px;background:#D6D3CE;border-style:solid;border-width:1px;border-color:#FFFFFF #404040 #404040 #FFFFFF;box-sizing:border-box;box-shadow:inset -1px -1px #808080;"></div>
<div class="t" style="left:1005px;top:437px;font-size:10px;line-height:12px;color:#FFFFFF;">...</div>
<div class="t" style="left:1004px;top:436px;font-size:10px;line-height:12px;color:#808080;">...</div>
<div style="left:25px;top:449px;width:80px;height:19px;background:#E0DFE3;border-style:solid;border-width:1px;border-color:#808080 #FFFFFF #FFFFFF #808080;box-sizing:border-box;box-shadow:inset 1px 1px #404040, inset -1px -1px #D6D3CE;"></div>
<div style="left:105px;top:449px;width:256px;height:19px;background:#FFFFFF;border-style:solid;border-width:1px;border-color:#808080 #FFFFFF #FFFFFF #808080;box-sizing:border-box;box-shadow:inset 1px 1px #404040, inset -1px -1px #D6D3CE;"></div>
<div style="left:379px;top:449px;width:79px;height:19px;background:#FFFFFF;border-style:solid;border-width:1px;border-color:#808080 #FFFFFF #FFFFFF #808080;box-sizing:border-box;box-shadow:inset 1px 1px #404040, inset -1px -1px #D6D3CE;"></div>
<div style="left:458px;top:449px;width:79px;height:19px;background:#FFFFFF;border-style:solid;border-width:1px;border-color:#808080 #FFFFFF #FFFFFF #808080;box-sizing:border-box;box-shadow:inset 1px 1px #404040, inset -1px -1px #D6D3CE;"></div>
<div style="left:537px;top:449px;width:80px;height:19px;background:#FFFFFF;border-style:solid;border-width:1px;border-color:#808080 #FFFFFF #FFFFFF #808080;box-sizing:border-box;box-shadow:inset 1px 1px #404040, inset -1px -1px #D6D3CE;"></div>
<div style="left:617px;top:449px;width:121px;height:19px;background:#FFFFFF;border-style:solid;border-width:1px;border-color:#808080 #FFFFFF #FFFFFF #808080;box-sizing:border-box;box-shadow:inset 1px 1px #404040, inset -1px -1px #D6D3CE;"></div>
<div style="left:757px;top:449px;width:107px;height:19px;background:#FFFFFF;border-style:solid;border-width:1px;border-color:#808080 #FFFFFF #FFFFFF #808080;box-sizing:border-box;box-shadow:inset 1px 1px #404040, inset -1px -1px #D6D3CE;"></div>
<div style="left:361px;top:449px;width:18px;height:19px;background:#D6D3CE;border-style:solid;border-width:0 1px 1px 0;border-color:#404040;box-sizing:border-box;box-shadow:inset -1px -1px #808080;"></div>
<svg style="left:361px;top:449px" width="18" height="19" viewBox="0 0 18 19" shape-rendering="crispEdges"><rect x="2" y="4" width="11" height="7" fill="#f4f4f4"/><path d="M2.5 12.5 L4.5 14.5 H12.5 L15.5 11.5 L13 10 H6 Z" fill="#e8f070"/><rect x="2" y="5" width="1" height="1" fill="#808080"/><rect x="2" y="7" width="1" height="1" fill="#808080"/><rect x="2" y="9" width="1" height="1" fill="#808080"/><rect x="2" y="11" width="1" height="1" fill="#808080"/><rect x="4" y="4" width="1" height="1" fill="#808080"/><rect x="6" y="4" width="1" height="1" fill="#808080"/><rect x="8" y="5" width="1" height="1" fill="#808080"/><rect x="10" y="5" width="1" height="1" fill="#808080"/><rect x="12" y="5" width="1" height="1" fill="#808080"/><rect x="13" y="7" width="1" height="1" fill="#808080"/><rect x="4" y="10" width="1" height="1" fill="#808080"/><rect x="6" y="10" width="1" height="1" fill="#808080"/><rect x="8" y="10" width="1" height="1" fill="#808080"/><rect x="10" y="10" width="1" height="1" fill="#808080"/><rect x="12" y="10" width="1" height="1" fill="#808080"/><rect x="4" y="14" width="1" height="1" fill="#000"/><rect x="6" y="14" width="1" height="1" fill="#000"/><rect x="8" y="14" width="1" height="1" fill="#000"/><rect x="10" y="14" width="1" height="1" fill="#000"/><rect x="12" y="14" width="1" height="1" fill="#000"/><rect x="13" y="13" width="1" height="1" fill="#000"/><rect x="14" y="12" width="1" height="1" fill="#000"/><rect x="15" y="11" width="1" height="1" fill="#000"/><rect x="12" y="2" width="1" height="1" fill="#000"/><rect x="16" y="2" width="1" height="1" fill="#000"/><rect x="13" y="5" width="1" height="1" fill="#000"/><rect x="15" y="5" width="1" height="1" fill="#000"/><rect x="16" y="4" width="1" height="1" fill="#000"/></svg>
<div style="left:739px;top:449px;width:18px;height:19px;background:#D6D3CE;border-style:solid;border-width:0 1px 1px 0;border-color:#404040;box-sizing:border-box;box-shadow:inset -1px -1px #808080;"></div>
<svg style="left:739px;top:449px" width="18" height="19" viewBox="0 0 18 19" shape-rendering="crispEdges"><rect x="2" y="4" width="11" height="7" fill="#f4f4f4"/><path d="M2.5 12.5 L4.5 14.5 H12.5 L15.5 11.5 L13 10 H6 Z" fill="#e8f070"/><rect x="2" y="5" width="1" height="1" fill="#808080"/><rect x="2" y="7" width="1" height="1" fill="#808080"/><rect x="2" y="9" width="1" height="1" fill="#808080"/><rect x="2" y="11" width="1" height="1" fill="#808080"/><rect x="4" y="4" width="1" height="1" fill="#808080"/><rect x="6" y="4" width="1" height="1" fill="#808080"/><rect x="8" y="5" width="1" height="1" fill="#808080"/><rect x="10" y="5" width="1" height="1" fill="#808080"/><rect x="12" y="5" width="1" height="1" fill="#808080"/><rect x="13" y="7" width="1" height="1" fill="#808080"/><rect x="4" y="10" width="1" height="1" fill="#808080"/><rect x="6" y="10" width="1" height="1" fill="#808080"/><rect x="8" y="10" width="1" height="1" fill="#808080"/><rect x="10" y="10" width="1" height="1" fill="#808080"/><rect x="12" y="10" width="1" height="1" fill="#808080"/><rect x="4" y="14" width="1" height="1" fill="#000"/><rect x="6" y="14" width="1" height="1" fill="#000"/><rect x="8" y="14" width="1" height="1" fill="#000"/><rect x="10" y="14" width="1" height="1" fill="#000"/><rect x="12" y="14" width="1" height="1" fill="#000"/><rect x="13" y="13" width="1" height="1" fill="#000"/><rect x="14" y="12" width="1" height="1" fill="#000"/><rect x="15" y="11" width="1" height="1" fill="#000"/><rect x="12" y="2" width="1" height="1" fill="#000"/><rect x="16" y="2" width="1" height="1" fill="#000"/><rect x="13" y="5" width="1" height="1" fill="#000"/><rect x="15" y="5" width="1" height="1" fill="#000"/><rect x="16" y="4" width="1" height="1" fill="#000"/></svg>
<div style="left:865px;top:449px;width:18px;height:19px;background:#D6D3CE;border-style:solid;border-width:0 1px 1px 0;border-color:#404040;box-sizing:border-box;box-shadow:inset -1px -1px #808080;"></div>
<svg style="left:865px;top:449px" width="18" height="19" viewBox="0 0 18 19" shape-rendering="crispEdges"><rect x="2" y="4" width="11" height="7" fill="#f4f4f4"/><path d="M2.5 12.5 L4.5 14.5 H12.5 L15.5 11.5 L13 10 H6 Z" fill="#e8f070"/><rect x="2" y="5" width="1" height="1" fill="#808080"/><rect x="2" y="7" width="1" height="1" fill="#808080"/><rect x="2" y="9" width="1" height="1" fill="#808080"/><rect x="2" y="11" width="1" height="1" fill="#808080"/><rect x="4" y="4" width="1" height="1" fill="#808080"/><rect x="6" y="4" width="1" height="1" fill="#808080"/><rect x="8" y="5" width="1" height="1" fill="#808080"/><rect x="10" y="5" width="1" height="1" fill="#808080"/><rect x="12" y="5" width="1" height="1" fill="#808080"/><rect x="13" y="7" width="1" height="1" fill="#808080"/><rect x="4" y="10" width="1" height="1" fill="#808080"/><rect x="6" y="10" width="1" height="1" fill="#808080"/><rect x="8" y="10" width="1" height="1" fill="#808080"/><rect x="10" y="10" width="1" height="1" fill="#808080"/><rect x="12" y="10" width="1" height="1" fill="#808080"/><rect x="4" y="14" width="1" height="1" fill="#000"/><rect x="6" y="14" width="1" height="1" fill="#000"/><rect x="8" y="14" width="1" height="1" fill="#000"/><rect x="10" y="14" width="1" height="1" fill="#000"/><rect x="12" y="14" width="1" height="1" fill="#000"/><rect x="13" y="13" width="1" height="1" fill="#000"/><rect x="14" y="12" width="1" height="1" fill="#000"/><rect x="15" y="11" width="1" height="1" fill="#000"/><rect x="12" y="2" width="1" height="1" fill="#000"/><rect x="16" y="2" width="1" height="1" fill="#000"/><rect x="13" y="5" width="1" height="1" fill="#000"/><rect x="15" y="5" width="1" height="1" fill="#000"/><rect x="16" y="4" width="1" height="1" fill="#000"/></svg>
<div style="left:887px;top:452px;width:13px;height:13px;background:#D6D3CE;border-style:solid;border-width:1px;border-color:#808080 #FFFFFF #FFFFFF #808080;box-sizing:border-box;box-shadow:inset 1px 1px #404040, inset -1px -1px #D6D3CE;"></div>
<div class="t" style="left:906px;top:453px;font-size:12px;line-height:14px;color:#FFFFFF;">р/к</div>
<div class="t" style="left:905px;top:452px;font-size:12px;line-height:14px;color:#808080;">р/к</div>
<div style="left:926px;top:452px;width:13px;height:13px;background:#D6D3CE;border-style:solid;border-width:1px;border-color:#808080 #FFFFFF #FFFFFF #808080;box-sizing:border-box;box-shadow:inset 1px 1px #404040, inset -1px -1px #D6D3CE;"></div>
<div class="t" style="left:945px;top:453px;font-size:12px;line-height:14px;color:#FFFFFF;">тариф</div>
<div class="t" style="left:944px;top:452px;font-size:12px;line-height:14px;color:#808080;">тариф</div>
<div style="left:983px;top:452px;width:13px;height:13px;background:#D6D3CE;border-style:solid;border-width:1px;border-color:#808080 #FFFFFF #FFFFFF #808080;box-sizing:border-box;box-shadow:inset 1px 1px #404040, inset -1px -1px #D6D3CE;"></div>
<div style="left:1001px;top:449px;width:18px;height:19px;background:#D6D3CE;border-style:solid;border-width:1px;border-color:#FFFFFF #404040 #404040 #FFFFFF;box-sizing:border-box;box-shadow:inset -1px -1px #808080;"></div>
<div class="t" style="left:1005px;top:456px;font-size:10px;line-height:12px;color:#FFFFFF;">...</div>
<div class="t" style="left:1004px;top:455px;font-size:10px;line-height:12px;color:#808080;">...</div>
<div style="left:25px;top:467px;width:80px;height:19px;background:#E0DFE3;border-style:solid;border-width:1px;border-color:#808080 #FFFFFF #FFFFFF #808080;box-sizing:border-box;box-shadow:inset 1px 1px #404040, inset -1px -1px #D6D3CE;"></div>
<div style="left:105px;top:467px;width:256px;height:19px;background:#FFFFFF;border-style:solid;border-width:1px;border-color:#808080 #FFFFFF #FFFFFF #808080;box-sizing:border-box;box-shadow:inset 1px 1px #404040, inset -1px -1px #D6D3CE;"></div>
<div style="left:379px;top:467px;width:79px;height:19px;background:#FFFFFF;border-style:solid;border-width:1px;border-color:#808080 #FFFFFF #FFFFFF #808080;box-sizing:border-box;box-shadow:inset 1px 1px #404040, inset -1px -1px #D6D3CE;"></div>
<div style="left:458px;top:467px;width:79px;height:19px;background:#FFFFFF;border-style:solid;border-width:1px;border-color:#808080 #FFFFFF #FFFFFF #808080;box-sizing:border-box;box-shadow:inset 1px 1px #404040, inset -1px -1px #D6D3CE;"></div>
<div style="left:537px;top:467px;width:80px;height:19px;background:#FFFFFF;border-style:solid;border-width:1px;border-color:#808080 #FFFFFF #FFFFFF #808080;box-sizing:border-box;box-shadow:inset 1px 1px #404040, inset -1px -1px #D6D3CE;"></div>
<div style="left:617px;top:467px;width:121px;height:19px;background:#FFFFFF;border-style:solid;border-width:1px;border-color:#808080 #FFFFFF #FFFFFF #808080;box-sizing:border-box;box-shadow:inset 1px 1px #404040, inset -1px -1px #D6D3CE;"></div>
<div style="left:757px;top:467px;width:107px;height:19px;background:#FFFFFF;border-style:solid;border-width:1px;border-color:#808080 #FFFFFF #FFFFFF #808080;box-sizing:border-box;box-shadow:inset 1px 1px #404040, inset -1px -1px #D6D3CE;"></div>
<div style="left:361px;top:467px;width:18px;height:19px;background:#D6D3CE;border-style:solid;border-width:0 1px 1px 0;border-color:#404040;box-sizing:border-box;box-shadow:inset -1px -1px #808080;"></div>
<svg style="left:361px;top:467px" width="18" height="19" viewBox="0 0 18 19" shape-rendering="crispEdges"><rect x="2" y="4" width="11" height="7" fill="#f4f4f4"/><path d="M2.5 12.5 L4.5 14.5 H12.5 L15.5 11.5 L13 10 H6 Z" fill="#e8f070"/><rect x="2" y="5" width="1" height="1" fill="#808080"/><rect x="2" y="7" width="1" height="1" fill="#808080"/><rect x="2" y="9" width="1" height="1" fill="#808080"/><rect x="2" y="11" width="1" height="1" fill="#808080"/><rect x="4" y="4" width="1" height="1" fill="#808080"/><rect x="6" y="4" width="1" height="1" fill="#808080"/><rect x="8" y="5" width="1" height="1" fill="#808080"/><rect x="10" y="5" width="1" height="1" fill="#808080"/><rect x="12" y="5" width="1" height="1" fill="#808080"/><rect x="13" y="7" width="1" height="1" fill="#808080"/><rect x="4" y="10" width="1" height="1" fill="#808080"/><rect x="6" y="10" width="1" height="1" fill="#808080"/><rect x="8" y="10" width="1" height="1" fill="#808080"/><rect x="10" y="10" width="1" height="1" fill="#808080"/><rect x="12" y="10" width="1" height="1" fill="#808080"/><rect x="4" y="14" width="1" height="1" fill="#000"/><rect x="6" y="14" width="1" height="1" fill="#000"/><rect x="8" y="14" width="1" height="1" fill="#000"/><rect x="10" y="14" width="1" height="1" fill="#000"/><rect x="12" y="14" width="1" height="1" fill="#000"/><rect x="13" y="13" width="1" height="1" fill="#000"/><rect x="14" y="12" width="1" height="1" fill="#000"/><rect x="15" y="11" width="1" height="1" fill="#000"/><rect x="12" y="2" width="1" height="1" fill="#000"/><rect x="16" y="2" width="1" height="1" fill="#000"/><rect x="13" y="5" width="1" height="1" fill="#000"/><rect x="15" y="5" width="1" height="1" fill="#000"/><rect x="16" y="4" width="1" height="1" fill="#000"/></svg>
<div style="left:739px;top:467px;width:18px;height:19px;background:#D6D3CE;border-style:solid;border-width:0 1px 1px 0;border-color:#404040;box-sizing:border-box;box-shadow:inset -1px -1px #808080;"></div>
<svg style="left:739px;top:467px" width="18" height="19" viewBox="0 0 18 19" shape-rendering="crispEdges"><rect x="2" y="4" width="11" height="7" fill="#f4f4f4"/><path d="M2.5 12.5 L4.5 14.5 H12.5 L15.5 11.5 L13 10 H6 Z" fill="#e8f070"/><rect x="2" y="5" width="1" height="1" fill="#808080"/><rect x="2" y="7" width="1" height="1" fill="#808080"/><rect x="2" y="9" width="1" height="1" fill="#808080"/><rect x="2" y="11" width="1" height="1" fill="#808080"/><rect x="4" y="4" width="1" height="1" fill="#808080"/><rect x="6" y="4" width="1" height="1" fill="#808080"/><rect x="8" y="5" width="1" height="1" fill="#808080"/><rect x="10" y="5" width="1" height="1" fill="#808080"/><rect x="12" y="5" width="1" height="1" fill="#808080"/><rect x="13" y="7" width="1" height="1" fill="#808080"/><rect x="4" y="10" width="1" height="1" fill="#808080"/><rect x="6" y="10" width="1" height="1" fill="#808080"/><rect x="8" y="10" width="1" height="1" fill="#808080"/><rect x="10" y="10" width="1" height="1" fill="#808080"/><rect x="12" y="10" width="1" height="1" fill="#808080"/><rect x="4" y="14" width="1" height="1" fill="#000"/><rect x="6" y="14" width="1" height="1" fill="#000"/><rect x="8" y="14" width="1" height="1" fill="#000"/><rect x="10" y="14" width="1" height="1" fill="#000"/><rect x="12" y="14" width="1" height="1" fill="#000"/><rect x="13" y="13" width="1" height="1" fill="#000"/><rect x="14" y="12" width="1" height="1" fill="#000"/><rect x="15" y="11" width="1" height="1" fill="#000"/><rect x="12" y="2" width="1" height="1" fill="#000"/><rect x="16" y="2" width="1" height="1" fill="#000"/><rect x="13" y="5" width="1" height="1" fill="#000"/><rect x="15" y="5" width="1" height="1" fill="#000"/><rect x="16" y="4" width="1" height="1" fill="#000"/></svg>
<div style="left:865px;top:467px;width:18px;height:19px;background:#D6D3CE;border-style:solid;border-width:0 1px 1px 0;border-color:#404040;box-sizing:border-box;box-shadow:inset -1px -1px #808080;"></div>
<svg style="left:865px;top:467px" width="18" height="19" viewBox="0 0 18 19" shape-rendering="crispEdges"><path d="M2.5 4.5 h3 l1 1 h6 l1 3 v3 l-2 3 h-9z" fill="#f0f040"/><path d="M6 13.5 l5 -4 h2.5 l-2 4z" fill="#b8b0c8"/><rect x="2" y="4" width="1" height="1" fill="#404040"/><rect x="4" y="4" width="1" height="1" fill="#404040"/><rect x="2" y="6" width="1" height="1" fill="#404040"/><rect x="2" y="8" width="1" height="1" fill="#404040"/><rect x="2" y="10" width="1" height="1" fill="#404040"/><rect x="2" y="12" width="1" height="1" fill="#404040"/><rect x="3" y="14" width="1" height="1" fill="#404040"/><rect x="5" y="14" width="1" height="1" fill="#404040"/><rect x="7" y="14" width="1" height="1" fill="#404040"/><rect x="9" y="14" width="1" height="1" fill="#404040"/><rect x="11" y="14" width="1" height="1" fill="#404040"/><rect x="6" y="5" width="1" height="1" fill="#404040"/><rect x="8" y="5" width="1" height="1" fill="#404040"/><rect x="10" y="5" width="1" height="1" fill="#404040"/><rect x="12" y="6" width="1" height="1" fill="#404040"/><rect x="13" y="8" width="1" height="1" fill="#404040"/><rect x="13" y="10" width="1" height="1" fill="#404040"/><rect x="12" y="12" width="1" height="1" fill="#404040"/><rect x="4" y="13" width="1" height="1" fill="#404040"/><rect x="6" y="12" width="1" height="1" fill="#404040"/><rect x="8" y="11" width="1" height="1" fill="#404040"/><rect x="10" y="10" width="1" height="1" fill="#404040"/><rect x="10" y="2" width="1" height="1" fill="#000"/><rect x="11" y="1" width="1" height="1" fill="#000"/><rect x="13" y="1" width="1" height="1" fill="#000"/><rect x="14" y="2" width="1" height="1" fill="#000"/><rect x="15" y="3" width="1" height="1" fill="#000"/><rect x="16" y="2" width="1" height="1" fill="#000"/><rect x="14" y="4" width="1" height="1" fill="#000"/><rect x="16" y="4" width="1" height="1" fill="#000"/></svg>
<div style="left:887px;top:470px;width:13px;height:13px;background:#D6D3CE;border-style:solid;border-width:1px;border-color:#808080 #FFFFFF #FFFFFF #808080;box-sizing:border-box;box-shadow:inset 1px 1px #404040, inset -1px -1px #D6D3CE;"></div>
<div class="t" style="left:906px;top:471px;font-size:12px;line-height:14px;color:#FFFFFF;">р/к</div>
<div class="t" style="left:905px;top:470px;font-size:12px;line-height:14px;color:#808080;">р/к</div>
<div style="left:926px;top:470px;width:13px;height:13px;background:#D6D3CE;border-style:solid;border-width:1px;border-color:#808080 #FFFFFF #FFFFFF #808080;box-sizing:border-box;box-shadow:inset 1px 1px #404040, inset -1px -1px #D6D3CE;"></div>
<div class="t" style="left:945px;top:471px;font-size:12px;line-height:14px;color:#FFFFFF;">тариф</div>
<div class="t" style="left:944px;top:470px;font-size:12px;line-height:14px;color:#808080;">тариф</div>
<div style="left:983px;top:470px;width:13px;height:13px;background:#D6D3CE;border-style:solid;border-width:1px;border-color:#808080 #FFFFFF #FFFFFF #808080;box-sizing:border-box;box-shadow:inset 1px 1px #404040, inset -1px -1px #D6D3CE;"></div>
<div style="left:1001px;top:467px;width:18px;height:19px;background:#D6D3CE;border-style:solid;border-width:1px;border-color:#FFFFFF #404040 #404040 #FFFFFF;box-sizing:border-box;box-shadow:inset -1px -1px #808080;"></div>
<div class="t" style="left:1005px;top:474px;font-size:10px;line-height:12px;color:#FFFFFF;">...</div>
<div class="t" style="left:1004px;top:473px;font-size:10px;line-height:12px;color:#808080;">...</div>
<div style="left:25px;top:486px;width:80px;height:19px;background:#E0DFE3;border-style:solid;border-width:1px;border-color:#808080 #FFFFFF #FFFFFF #808080;box-sizing:border-box;box-shadow:inset 1px 1px #404040, inset -1px -1px #D6D3CE;"></div>
<div style="left:105px;top:486px;width:256px;height:19px;background:#FFFFFF;border-style:solid;border-width:1px;border-color:#808080 #FFFFFF #FFFFFF #808080;box-sizing:border-box;box-shadow:inset 1px 1px #404040, inset -1px -1px #D6D3CE;"></div>
<div style="left:379px;top:486px;width:79px;height:19px;background:#FFFFFF;border-style:solid;border-width:1px;border-color:#808080 #FFFFFF #FFFFFF #808080;box-sizing:border-box;box-shadow:inset 1px 1px #404040, inset -1px -1px #D6D3CE;"></div>
<div style="left:458px;top:486px;width:79px;height:19px;background:#FFFFFF;border-style:solid;border-width:1px;border-color:#808080 #FFFFFF #FFFFFF #808080;box-sizing:border-box;box-shadow:inset 1px 1px #404040, inset -1px -1px #D6D3CE;"></div>
<div style="left:537px;top:486px;width:80px;height:19px;background:#FFFFFF;border-style:solid;border-width:1px;border-color:#808080 #FFFFFF #FFFFFF #808080;box-sizing:border-box;box-shadow:inset 1px 1px #404040, inset -1px -1px #D6D3CE;"></div>
<div style="left:617px;top:486px;width:121px;height:19px;background:#FFFFFF;border-style:solid;border-width:1px;border-color:#808080 #FFFFFF #FFFFFF #808080;box-sizing:border-box;box-shadow:inset 1px 1px #404040, inset -1px -1px #D6D3CE;"></div>
<div style="left:757px;top:486px;width:107px;height:19px;background:#FFFFFF;border-style:solid;border-width:1px;border-color:#808080 #FFFFFF #FFFFFF #808080;box-sizing:border-box;box-shadow:inset 1px 1px #404040, inset -1px -1px #D6D3CE;"></div>
<div style="left:361px;top:486px;width:18px;height:19px;background:#D6D3CE;border-style:solid;border-width:0 1px 1px 0;border-color:#404040;box-sizing:border-box;box-shadow:inset -1px -1px #808080;"></div>
<svg style="left:361px;top:486px" width="18" height="19" viewBox="0 0 18 19" shape-rendering="crispEdges"><rect x="2" y="4" width="11" height="7" fill="#f4f4f4"/><path d="M2.5 12.5 L4.5 14.5 H12.5 L15.5 11.5 L13 10 H6 Z" fill="#e8f070"/><rect x="2" y="5" width="1" height="1" fill="#808080"/><rect x="2" y="7" width="1" height="1" fill="#808080"/><rect x="2" y="9" width="1" height="1" fill="#808080"/><rect x="2" y="11" width="1" height="1" fill="#808080"/><rect x="4" y="4" width="1" height="1" fill="#808080"/><rect x="6" y="4" width="1" height="1" fill="#808080"/><rect x="8" y="5" width="1" height="1" fill="#808080"/><rect x="10" y="5" width="1" height="1" fill="#808080"/><rect x="12" y="5" width="1" height="1" fill="#808080"/><rect x="13" y="7" width="1" height="1" fill="#808080"/><rect x="4" y="10" width="1" height="1" fill="#808080"/><rect x="6" y="10" width="1" height="1" fill="#808080"/><rect x="8" y="10" width="1" height="1" fill="#808080"/><rect x="10" y="10" width="1" height="1" fill="#808080"/><rect x="12" y="10" width="1" height="1" fill="#808080"/><rect x="4" y="14" width="1" height="1" fill="#000"/><rect x="6" y="14" width="1" height="1" fill="#000"/><rect x="8" y="14" width="1" height="1" fill="#000"/><rect x="10" y="14" width="1" height="1" fill="#000"/><rect x="12" y="14" width="1" height="1" fill="#000"/><rect x="13" y="13" width="1" height="1" fill="#000"/><rect x="14" y="12" width="1" height="1" fill="#000"/><rect x="15" y="11" width="1" height="1" fill="#000"/><rect x="12" y="2" width="1" height="1" fill="#000"/><rect x="16" y="2" width="1" height="1" fill="#000"/><rect x="13" y="5" width="1" height="1" fill="#000"/><rect x="15" y="5" width="1" height="1" fill="#000"/><rect x="16" y="4" width="1" height="1" fill="#000"/></svg>
<div style="left:739px;top:486px;width:18px;height:19px;background:#D6D3CE;border-style:solid;border-width:0 1px 1px 0;border-color:#404040;box-sizing:border-box;box-shadow:inset -1px -1px #808080;"></div>
<svg style="left:739px;top:486px" width="18" height="19" viewBox="0 0 18 19" shape-rendering="crispEdges"><rect x="2" y="4" width="11" height="7" fill="#f4f4f4"/><path d="M2.5 12.5 L4.5 14.5 H12.5 L15.5 11.5 L13 10 H6 Z" fill="#e8f070"/><rect x="2" y="5" width="1" height="1" fill="#808080"/><rect x="2" y="7" width="1" height="1" fill="#808080"/><rect x="2" y="9" width="1" height="1" fill="#808080"/><rect x="2" y="11" width="1" height="1" fill="#808080"/><rect x="4" y="4" width="1" height="1" fill="#808080"/><rect x="6" y="4" width="1" height="1" fill="#808080"/><rect x="8" y="5" width="1" height="1" fill="#808080"/><rect x="10" y="5" width="1" height="1" fill="#808080"/><rect x="12" y="5" width="1" height="1" fill="#808080"/><rect x="13" y="7" width="1" height="1" fill="#808080"/><rect x="4" y="10" width="1" height="1" fill="#808080"/><rect x="6" y="10" width="1" height="1" fill="#808080"/><rect x="8" y="10" width="1" height="1" fill="#808080"/><rect x="10" y="10" width="1" height="1" fill="#808080"/><rect x="12" y="10" width="1" height="1" fill="#808080"/><rect x="4" y="14" width="1" height="1" fill="#000"/><rect x="6" y="14" width="1" height="1" fill="#000"/><rect x="8" y="14" width="1" height="1" fill="#000"/><rect x="10" y="14" width="1" height="1" fill="#000"/><rect x="12" y="14" width="1" height="1" fill="#000"/><rect x="13" y="13" width="1" height="1" fill="#000"/><rect x="14" y="12" width="1" height="1" fill="#000"/><rect x="15" y="11" width="1" height="1" fill="#000"/><rect x="12" y="2" width="1" height="1" fill="#000"/><rect x="16" y="2" width="1" height="1" fill="#000"/><rect x="13" y="5" width="1" height="1" fill="#000"/><rect x="15" y="5" width="1" height="1" fill="#000"/><rect x="16" y="4" width="1" height="1" fill="#000"/></svg>
<div style="left:865px;top:486px;width:18px;height:19px;background:#D6D3CE;border-style:solid;border-width:0 1px 1px 0;border-color:#404040;box-sizing:border-box;box-shadow:inset -1px -1px #808080;"></div>
<svg style="left:865px;top:486px" width="18" height="19" viewBox="0 0 18 19" shape-rendering="crispEdges"><rect x="2" y="4" width="11" height="7" fill="#f4f4f4"/><path d="M2.5 12.5 L4.5 14.5 H12.5 L15.5 11.5 L13 10 H6 Z" fill="#e8f070"/><rect x="2" y="5" width="1" height="1" fill="#808080"/><rect x="2" y="7" width="1" height="1" fill="#808080"/><rect x="2" y="9" width="1" height="1" fill="#808080"/><rect x="2" y="11" width="1" height="1" fill="#808080"/><rect x="4" y="4" width="1" height="1" fill="#808080"/><rect x="6" y="4" width="1" height="1" fill="#808080"/><rect x="8" y="5" width="1" height="1" fill="#808080"/><rect x="10" y="5" width="1" height="1" fill="#808080"/><rect x="12" y="5" width="1" height="1" fill="#808080"/><rect x="13" y="7" width="1" height="1" fill="#808080"/><rect x="4" y="10" width="1" height="1" fill="#808080"/><rect x="6" y="10" width="1" height="1" fill="#808080"/><rect x="8" y="10" width="1" height="1" fill="#808080"/><rect x="10" y="10" width="1" height="1" fill="#808080"/><rect x="12" y="10" width="1" height="1" fill="#808080"/><rect x="4" y="14" width="1" height="1" fill="#000"/><rect x="6" y="14" width="1" height="1" fill="#000"/><rect x="8" y="14" width="1" height="1" fill="#000"/><rect x="10" y="14" width="1" height="1" fill="#000"/><rect x="12" y="14" width="1" height="1" fill="#000"/><rect x="13" y="13" width="1" height="1" fill="#000"/><rect x="14" y="12" width="1" height="1" fill="#000"/><rect x="15" y="11" width="1" height="1" fill="#000"/><rect x="12" y="2" width="1" height="1" fill="#000"/><rect x="16" y="2" width="1" height="1" fill="#000"/><rect x="13" y="5" width="1" height="1" fill="#000"/><rect x="15" y="5" width="1" height="1" fill="#000"/><rect x="16" y="4" width="1" height="1" fill="#000"/></svg>
<div style="left:887px;top:489px;width:13px;height:13px;background:#D6D3CE;border-style:solid;border-width:1px;border-color:#808080 #FFFFFF #FFFFFF #808080;box-sizing:border-box;box-shadow:inset 1px 1px #404040, inset -1px -1px #D6D3CE;"></div>
<div class="t" style="left:906px;top:490px;font-size:12px;line-height:14px;color:#FFFFFF;">р/к</div>
<div class="t" style="left:905px;top:489px;font-size:12px;line-height:14px;color:#808080;">р/к</div>
<div style="left:926px;top:489px;width:13px;height:13px;background:#D6D3CE;border-style:solid;border-width:1px;border-color:#808080 #FFFFFF #FFFFFF #808080;box-sizing:border-box;box-shadow:inset 1px 1px #404040, inset -1px -1px #D6D3CE;"></div>
<div class="t" style="left:945px;top:490px;font-size:12px;line-height:14px;color:#FFFFFF;">тариф</div>
<div class="t" style="left:944px;top:489px;font-size:12px;line-height:14px;color:#808080;">тариф</div>
<div style="left:983px;top:489px;width:13px;height:13px;background:#D6D3CE;border-style:solid;border-width:1px;border-color:#808080 #FFFFFF #FFFFFF #808080;box-sizing:border-box;box-shadow:inset 1px 1px #404040, inset -1px -1px #D6D3CE;"></div>
<div style="left:1001px;top:486px;width:18px;height:19px;background:#D6D3CE;border-style:solid;border-width:1px;border-color:#FFFFFF #404040 #404040 #FFFFFF;box-sizing:border-box;box-shadow:inset -1px -1px #808080;"></div>
<div class="t" style="left:1005px;top:493px;font-size:10px;line-height:12px;color:#FFFFFF;">...</div>
<div class="t" style="left:1004px;top:492px;font-size:10px;line-height:12px;color:#808080;">...</div>
<div style="left:458px;top:520px;width:97px;height:23px;background:#D6D3CE;border-style:solid;border-width:1px;border-color:#FFFFFF #404040 #404040 #FFFFFF;box-sizing:border-box;box-shadow:inset -1px -1px #808080;"></div>
<div class="t" style="left:484px;top:526px;font-size:12px;line-height:14px;color:#FFFFFF;">Закрыть</div>
<div class="t" style="left:483px;top:525px;font-size:12px;line-height:14px;color:#808080;">Закрыть</div>
<div style="left:92px;top:305px;width:700px;height:214px;background:#D6D3CE;border-style:solid;border-width:1px;border-color:#D6D3CE #404040 #404040 #D6D3CE;box-sizing:border-box;box-shadow:inset 1px 1px #FFFFFF, inset -1px -1px #E4E2DE;"></div>
<div style="left:96px;top:309px;width:692px;height:18px;background:#0A246A;"></div>
<div style="left:98px;top:310px;width:16px;height:16px"><svg width="16" height="16" viewBox="0 0 16 16"><rect x="0" y="0" width="12" height="12" fill="#58d0d0"/><path d="M0.5 0.5h11v11h-11z" fill="none" stroke="#b8f0f0" stroke-width="1"/><path d="M0.5 1 L5 0.5 L6 4 L3 7 L0.5 6z" fill="#28b0c0"/><path d="M6 0.5 q4 0.5 5.5 4 l-0.5 6 q-3 2 -6 1 l-1 -3 q3 -1 2 -4z" fill="#30c8a8"/><circle cx="3.6" cy="2.8" r="2.3" fill="#c01878"/><circle cx="3" cy="2.2" r="0.8" fill="#ffb0e0"/><circle cx="8" cy="6.4" r="2" fill="#b01020"/><path d="M0.5 7 h4 l1 1 v3 h-5z" fill="#0808a0"/><path d="M5 11.5 q3 1.5 6.5 -0.5" stroke="#e8f0f0" stroke-width="1" fill="none"/></svg></div>
<div class="t" style="left:115px;top:311px;font-size:12px;line-height:14px;color:#FFFFFF;font-weight:bold;letter-spacing:0.15px;">Выпуски [Объект № 1321/1]</div>
<div style="left:770px;top:311px;width:16px;height:14px;background:#D6D3CE;border-style:solid;border-width:1px;border-color:#FFFFFF #404040 #404040 #FFFFFF;box-sizing:border-box;box-shadow:inset -1px -1px #808080;"></div>
<svg style="left:774px;top:314px" width="8" height="7" viewBox="0 0 8 7"><path d="M0.5 0.5L7.5 6.5M7.5 0.5L0.5 6.5" stroke="#000" stroke-width="1.5"/></svg>
<div style="left:752px;top:311px;width:16px;height:14px;background:#D6D3CE;border-style:solid;border-width:1px;border-color:#FFFFFF #404040 #404040 #FFFFFF;box-sizing:border-box;box-shadow:inset -1px -1px #808080;"></div>
<div style="left:755px;top:313px;width:9px;height:9px;border:1px solid #000;border-top-width:2px;box-sizing:border-box;"></div>
<div style="left:736px;top:311px;width:16px;height:14px;background:#D6D3CE;border-style:solid;border-width:1px;border-color:#FFFFFF #404040 #404040 #FFFFFF;box-sizing:border-box;box-shadow:inset -1px -1px #808080;"></div>
<div style="left:740px;top:320px;width:6px;height:2px;background:#000;"></div>
<div style="left:104px;top:336px;width:677px;height:169px;border:1px solid #808080;box-sizing:border-box;box-shadow:inset 1px 1px #FFFFFF, 1px 1px #FFFFFF;"></div>
<div style="left:112px;top:329px;width:61px;height:14px;background:#D6D3CE;"></div>
<div class="t" style="left:117px;top:329px;font-size:13px;line-height:15px;color:#000;">Выпуски</div>
<div class="t" style="left:-49px;width:400px;text-align:center;top:347px;font-size:12px;line-height:14px;color:#000;">Код колодца</div>
<div class="t" style="left:31px;width:400px;text-align:center;top:347px;font-size:12px;line-height:14px;color:#000;">Код выпуска</div>
<div class="t" style="left:124px;width:400px;text-align:center;top:347px;font-size:12px;line-height:14px;color:#000;">Описание</div>
<div class="t" style="left:217px;width:400px;text-align:center;top:347px;font-size:12px;line-height:14px;color:#000;">Действует с</div>
<div class="t" style="left:297px;width:400px;text-align:center;top:347px;font-size:12px;line-height:14px;color:#000;">по</div>
<div class="t" style="left:394.5px;width:400px;text-align:center;top:347px;font-size:12px;line-height:14px;color:#000;">Статус</div>
<div class="t" style="left:521px;width:400px;text-align:center;top:340px;font-size:12px;line-height:14px;color:#000;">Наименование</div>
<div class="t" style="left:521px;width:400px;text-align:center;top:354px;font-size:12px;line-height:14px;color:#000;">потребителя</div>
<div style="left:111px;top:371px;width:80px;height:19px;background:#FFFFD0;border-style:solid;border-width:1px;border-color:#808080 #FFFFFF #FFFFFF #808080;box-sizing:border-box;box-shadow:inset 1px 1px #404040, inset -1px -1px #D6D3CE;"></div>
<div class="t" style="left:113px;top:374px;font-size:12px;line-height:14px;color:#858565;">31395</div>
<div style="left:191px;top:371px;width:80px;height:19px;background:#FFFFD0;border-style:solid;border-width:1px;border-color:#808080 #FFFFFF #FFFFFF #808080;box-sizing:border-box;box-shadow:inset 1px 1px #404040, inset -1px -1px #D6D3CE;"></div>
<div class="t" style="left:193px;top:374px;font-size:12px;line-height:14px;color:#858565;">31233</div>
<div style="left:271px;top:371px;width:106px;height:19px;background:#FFFFD0;border-style:solid;border-width:1px;border-color:#808080 #FFFFFF #FFFFFF #808080;box-sizing:border-box;box-shadow:inset 1px 1px #404040, inset -1px -1px #D6D3CE;"></div>
<div class="t" style="left:273px;top:374px;font-size:12px;line-height:14px;color:#000;">Выпуск</div>
<div style="left:377px;top:371px;width:80px;height:19px;background:#FFFFD0;border-style:solid;border-width:1px;border-color:#808080 #FFFFFF #FFFFFF #808080;box-sizing:border-box;box-shadow:inset 1px 1px #404040, inset -1px -1px #D6D3CE;"></div>
<div class="t" style="left:379px;top:374px;font-size:12px;line-height:14px;color:#000;">01.01.2008</div>
<div style="left:457px;top:371px;width:80px;height:19px;background:#FFFFD0;border-style:solid;border-width:1px;border-color:#808080 #FFFFFF #FFFFFF #808080;box-sizing:border-box;box-shadow:inset 1px 1px #404040, inset -1px -1px #D6D3CE;"></div>
<div style="left:537px;top:371px;width:115px;height:19px;background:#FFFFD0;border-style:solid;border-width:1px;border-color:#808080 #FFFFFF #FFFFFF #808080;box-sizing:border-box;box-shadow:inset 1px 1px #404040, inset -1px -1px #D6D3CE;"></div>
<div style="left:539px;top:373px;width:100px;height:14px;background:#0A246A;"></div>
<div class="t" style="left:540px;top:374px;font-size:12px;line-height:14px;color:#FFFFFF;">ОткрытыйОбъект</div>
<div style="left:671px;top:371px;width:104px;height:19px;background:#C8C8C8;border-style:solid;border-width:1px;border-color:#808080 #FFFFFF #FFFFFF #808080;box-sizing:border-box;box-shadow:inset 1px 1px #404040, inset -1px -1px #D6D3CE;"></div>
<div class="t" style="left:673px;top:374px;font-size:12px;line-height:14px;color:#000;">Потребитель 1</div>
<div style="left:652px;top:371px;width:19px;height:19px;background:#D6D3CE;border-style:solid;border-width:0 1px 1px 0;border-color:#404040;box-sizing:border-box;box-shadow:inset -1px -1px #808080;"></div>
<svg style="left:652px;top:371px" width="19" height="19" viewBox="0 0 19 19" shape-rendering="crispEdges"><path d="M3 5h3l1 1h5v7h-9z" fill="#f0f040" stroke="#000" stroke-width="1"/><path d="M3 14 l3 -4 h10 l-3 4z" fill="#d8d838" stroke="#000" stroke-width="1"/><path d="M3 14.5h10" stroke="#000" stroke-width="1.5"/><path d="M12 3.5 q2 -2 4 0 v2" fill="none" stroke="#000" stroke-width="1"/></svg>
<div style="left:111px;top:389px;width:80px;height:19px;background:#FFFFFF;border-style:solid;border-width:1px;border-color:#808080 #FFFFFF #FFFFFF #808080;box-sizing:border-box;box-shadow:inset 1px 1px #404040, inset -1px -1px #D6D3CE;"></div>
<div style="left:191px;top:389px;width:80px;height:19px;background:#FFFFFF;border-style:solid;border-width:1px;border-color:#808080 #FFFFFF #FFFFFF #808080;box-sizing:border-box;box-shadow:inset 1px 1px #404040, inset -1px -1px #D6D3CE;"></div>
<div style="left:271px;top:389px;width:106px;height:19px;background:#FFFFFF;border-style:solid;border-width:1px;border-color:#808080 #FFFFFF #FFFFFF #808080;box-sizing:border-box;box-shadow:inset 1px 1px #404040, inset -1px -1px #D6D3CE;"></div>
<div style="left:377px;top:389px;width:80px;height:19px;background:#FFFFFF;border-style:solid;border-width:1px;border-color:#808080 #FFFFFF #FFFFFF #808080;box-sizing:border-box;box-shadow:inset 1px 1px #404040, inset -1px -1px #D6D3CE;"></div>
<div style="left:457px;top:389px;width:80px;height:19px;background:#E0DFE3;border-style:solid;border-width:1px;border-color:#808080 #FFFFFF #FFFFFF #808080;box-sizing:border-box;box-shadow:inset 1px 1px #404040, inset -1px -1px #D6D3CE;"></div>
<div style="left:537px;top:389px;width:115px;height:19px;background:#FFFFFF;border-style:solid;border-width:1px;border-color:#808080 #FFFFFF #FFFFFF #808080;box-sizing:border-box;box-shadow:inset 1px 1px #404040, inset -1px -1px #D6D3CE;"></div>
<div style="left:671px;top:389px;width:104px;height:19px;background:#C8C8C8;border-style:solid;border-width:1px;border-color:#808080 #FFFFFF #FFFFFF #808080;box-sizing:border-box;box-shadow:inset 1px 1px #404040, inset -1px -1px #D6D3CE;"></div>
<div style="left:652px;top:389px;width:19px;height:19px;background:#D6D3CE;border-style:solid;border-width:0 1px 1px 0;border-color:#404040;box-sizing:border-box;box-shadow:inset -1px -1px #808080;"></div>
<svg style="left:652px;top:389px" width="19" height="19" viewBox="0 0 19 19" shape-rendering="crispEdges"><path d="M2.5 4.5 h3 l1 1 h6 l1 3 v3 l-2 3 h-9z" fill="#f0f040"/><path d="M6 13.5 l5 -4 h2.5 l-2 4z" fill="#b8b0c8"/><rect x="2" y="4" width="1" height="1" fill="#404040"/><rect x="4" y="4" width="1" height="1" fill="#404040"/><rect x="2" y="6" width="1" height="1" fill="#404040"/><rect x="2" y="8" width="1" height="1" fill="#404040"/><rect x="2" y="10" width="1" height="1" fill="#404040"/><rect x="2" y="12" width="1" height="1" fill="#404040"/><rect x="3" y="14" width="1" height="1" fill="#404040"/><rect x="5" y="14" width="1" height="1" fill="#404040"/><rect x="7" y="14" width="1" height="1" fill="#404040"/><rect x="9" y="14" width="1" height="1" fill="#404040"/><rect x="11" y="14" width="1" height="1" fill="#404040"/><rect x="6" y="5" width="1" height="1" fill="#404040"/><rect x="8" y="5" width="1" height="1" fill="#404040"/><rect x="10" y="5" width="1" height="1" fill="#404040"/><rect x="12" y="6" width="1" height="1" fill="#404040"/><rect x="13" y="8" width="1" height="1" fill="#404040"/><rect x="13" y="10" width="1" height="1" fill="#404040"/><rect x="12" y="12" width="1" height="1" fill="#404040"/><rect x="4" y="13" width="1" height="1" fill="#404040"/><rect x="6" y="12" width="1" height="1" fill="#404040"/><rect x="8" y="11" width="1" height="1" fill="#404040"/><rect x="10" y="10" width="1" height="1" fill="#404040"/><rect x="10" y="2" width="1" height="1" fill="#000"/><rect x="11" y="1" width="1" height="1" fill="#000"/><rect x="13" y="1" width="1" height="1" fill="#000"/><rect x="14" y="2" width="1" height="1" fill="#000"/><rect x="15" y="3" width="1" height="1" fill="#000"/><rect x="16" y="2" width="1" height="1" fill="#000"/><rect x="14" y="4" width="1" height="1" fill="#000"/><rect x="16" y="4" width="1" height="1" fill="#000"/></svg>
<div style="left:111px;top:408px;width:80px;height:19px;background:#FFFFFF;border-style:solid;border-width:1px;border-color:#808080 #FFFFFF #FFFFFF #808080;box-sizing:border-box;box-shadow:inset 1px 1px #404040, inset -1px -1px #D6D3CE;"></div>
<div style="left:191px;top:408px;width:80px;height:19px;background:#FFFFFF;border-style:solid;border-width:1px;border-color:#808080 #FFFFFF #FFFFFF #808080;box-sizing:border-box;box-shadow:inset 1px 1px #404040, inset -1px -1px #D6D3CE;"></div>
<div style="left:271px;top:408px;width:106px;height:19px;background:#FFFFFF;border-style:solid;border-width:1px;border-color:#808080 #FFFFFF #FFFFFF #808080;box-sizing:border-box;box-shadow:inset 1px 1px #404040, inset -1px -1px #D6D3CE;"></div>
<div style="left:377px;top:408px;width:80px;height:19px;background:#FFFFFF;border-style:solid;border-width:1px;border-color:#808080 #FFFFFF #FFFFFF #808080;box-sizing:border-box;box-shadow:inset 1px 1px #404040, inset -1px -1px #D6D3CE;"></div>
<div style="left:457px;top:408px;width:80px;height:19px;background:#E0DFE3;border-style:solid;border-width:1px;border-color:#808080 #FFFFFF #FFFFFF #808080;box-sizing:border-box;box-shadow:inset 1px 1px #404040, inset -1px -1px #D6D3CE;"></div>
<div style="left:537px;top:408px;width:115px;height:19px;background:#FFFFFF;border-style:solid;border-width:1px;border-color:#808080 #FFFFFF #FFFFFF #808080;box-sizing:border-box;box-shadow:inset 1px 1px #404040, inset -1px -1px #D6D3CE;"></div>
<div style="left:671px;top:408px;width:104px;height:19px;background:#C8C8C8;border-style:solid;border-width:1px;border-color:#808080 #FFFFFF #FFFFFF #808080;box-sizing:border-box;box-shadow:inset 1px 1px #404040, inset -1px -1px #D6D3CE;"></div>
<div style="left:652px;top:408px;width:19px;height:19px;background:#D6D3CE;border-style:solid;border-width:0 1px 1px 0;border-color:#404040;box-sizing:border-box;box-shadow:inset -1px -1px #808080;"></div>
<svg style="left:652px;top:408px" width="19" height="19" viewBox="0 0 19 19" shape-rendering="crispEdges"><rect x="2" y="4" width="11" height="7" fill="#f4f4f4"/><path d="M2.5 12.5 L4.5 14.5 H12.5 L15.5 11.5 L13 10 H6 Z" fill="#e8f070"/><rect x="2" y="5" width="1" height="1" fill="#808080"/><rect x="2" y="7" width="1" height="1" fill="#808080"/><rect x="2" y="9" width="1" height="1" fill="#808080"/><rect x="2" y="11" width="1" height="1" fill="#808080"/><rect x="4" y="4" width="1" height="1" fill="#808080"/><rect x="6" y="4" width="1" height="1" fill="#808080"/><rect x="8" y="5" width="1" height="1" fill="#808080"/><rect x="10" y="5" width="1" height="1" fill="#808080"/><rect x="12" y="5" width="1" height="1" fill="#808080"/><rect x="13" y="7" width="1" height="1" fill="#808080"/><rect x="4" y="10" width="1" height="1" fill="#808080"/><rect x="6" y="10" width="1" height="1" fill="#808080"/><rect x="8" y="10" width="1" height="1" fill="#808080"/><rect x="10" y="10" width="1" height="1" fill="#808080"/><rect x="12" y="10" width="1" height="1" fill="#808080"/><rect x="4" y="14" width="1" height="1" fill="#000"/><rect x="6" y="14" width="1" height="1" fill="#000"/><rect x="8" y="14" width="1" height="1" fill="#000"/><rect x="10" y="14" width="1" height="1" fill="#000"/><rect x="12" y="14" width="1" height="1" fill="#000"/><rect x="13" y="13" width="1" height="1" fill="#000"/><rect x="14" y="12" width="1" height="1" fill="#000"/><rect x="15" y="11" width="1" height="1" fill="#000"/><rect x="12" y="2" width="1" height="1" fill="#000"/><rect x="16" y="2" width="1" height="1" fill="#000"/><rect x="13" y="5" width="1" height="1" fill="#000"/><rect x="15" y="5" width="1" height="1" fill="#000"/><rect x="16" y="4" width="1" height="1" fill="#000"/></svg>
<div style="left:111px;top:427px;width:80px;height:19px;background:#FFFFFF;border-style:solid;border-width:1px;border-color:#808080 #FFFFFF #FFFFFF #808080;box-sizing:border-box;box-shadow:inset 1px 1px #404040, inset -1px -1px #D6D3CE;"></div>
<div style="left:191px;top:427px;width:80px;height:19px;background:#FFFFFF;border-style:solid;border-width:1px;border-color:#808080 #FFFFFF #FFFFFF #808080;box-sizing:border-box;box-shadow:inset 1px 1px #404040, inset -1px -1px #D6D3CE;"></div>
<div style="left:271px;top:427px;width:106px;height:19px;background:#FFFFFF;border-style:solid;border-width:1px;border-color:#808080 #FFFFFF #FFFFFF #808080;box-sizing:border-box;box-shadow:inset 1px 1px #404040, inset -1px -1px #D6D3CE;"></div>
<div style="left:377px;top:427px;width:80px;height:19px;background:#FFFFFF;border-style:solid;border-width:1px;border-color:#808080 #FFFFFF #FFFFFF #808080;box-sizing:border-box;box-shadow:inset 1px 1px #404040, inset -1px -1px #D6D3CE;"></div>
<div style="left:457px;top:427px;width:80px;height:19px;background:#E0DFE3;border-style:solid;border-width:1px;border-color:#808080 #FFFFFF #FFFFFF #808080;box-sizing:border-box;box-shadow:inset 1px 1px #404040, inset -1px -1px #D6D3CE;"></div>
<div style="left:537px;top:427px;width:115px;height:19px;background:#FFFFFF;border-style:solid;border-width:1px;border-color:#808080 #FFFFFF #FFFFFF #808080;box-sizing:border-box;box-shadow:inset 1px 1px #404040, inset -1px -1px #D6D3CE;"></div>
<div style="left:671px;top:427px;width:104px;height:19px;background:#C8C8C8;border-style:solid;border-width:1px;border-color:#808080 #FFFFFF #FFFFFF #808080;box-sizing:border-box;box-shadow:inset 1px 1px #404040, inset -1px -1px #D6D3CE;"></div>
<div style="left:652px;top:427px;width:19px;height:19px;background:#D6D3CE;border-style:solid;border-width:0 1px 1px 0;border-color:#404040;box-sizing:border-box;box-shadow:inset -1px -1px #808080;"></div>
<svg style="left:652px;top:427px" width="19" height="19" viewBox="0 0 19 19" shape-rendering="crispEdges"><path d="M2.5 4.5 h3 l1 1 h6 l1 3 v3 l-2 3 h-9z" fill="#f0f040"/><path d="M6 13.5 l5 -4 h2.5 l-2 4z" fill="#b8b0c8"/><rect x="2" y="4" width="1" height="1" fill="#404040"/><rect x="4" y="4" width="1" height="1" fill="#404040"/><rect x="2" y="6" width="1" height="1" fill="#404040"/><rect x="2" y="8" width="1" height="1" fill="#404040"/><rect x="2" y="10" width="1" height="1" fill="#404040"/><rect x="2" y="12" width="1" height="1" fill="#404040"/><rect x="3" y="14" width="1" height="1" fill="#404040"/><rect x="5" y="14" width="1" height="1" fill="#404040"/><rect x="7" y="14" width="1" height="1" fill="#404040"/><rect x="9" y="14" width="1" height="1" fill="#404040"/><rect x="11" y="14" width="1" height="1" fill="#404040"/><rect x="6" y="5" width="1" height="1" fill="#404040"/><rect x="8" y="5" width="1" height="1" fill="#404040"/><rect x="10" y="5" width="1" height="1" fill="#404040"/><rect x="12" y="6" width="1" height="1" fill="#404040"/><rect x="13" y="8" width="1" height="1" fill="#404040"/><rect x="13" y="10" width="1" height="1" fill="#404040"/><rect x="12" y="12" width="1" height="1" fill="#404040"/><rect x="4" y="13" width="1" height="1" fill="#404040"/><rect x="6" y="12" width="1" height="1" fill="#404040"/><rect x="8" y="11" width="1" height="1" fill="#404040"/><rect x="10" y="10" width="1" height="1" fill="#404040"/><rect x="10" y="2" width="1" height="1" fill="#000"/><rect x="11" y="1" width="1" height="1" fill="#000"/><rect x="13" y="1" width="1" height="1" fill="#000"/><rect x="14" y="2" width="1" height="1" fill="#000"/><rect x="15" y="3" width="1" height="1" fill="#000"/><rect x="16" y="2" width="1" height="1" fill="#000"/><rect x="14" y="4" width="1" height="1" fill="#000"/><rect x="16" y="4" width="1" height="1" fill="#000"/></svg>
<div style="left:111px;top:445px;width:80px;height:19px;background:#FFFFFF;border-style:solid;border-width:1px;border-color:#808080 #FFFFFF #FFFFFF #808080;box-sizing:border-box;box-shadow:inset 1px 1px #404040, inset -1px -1px #D6D3CE;"></div>
<div style="left:191px;top:445px;width:80px;height:19px;background:#FFFFFF;border-style:solid;border-width:1px;border-color:#808080 #FFFFFF #FFFFFF #808080;box-sizing:border-box;box-shadow:inset 1px 1px #404040, inset -1px -1px #D6D3CE;"></div>
<div style="left:271px;top:445px;width:106px;height:19px;background:#FFFFFF;border-style:solid;border-width:1px;border-color:#808080 #FFFFFF #FFFFFF #808080;box-sizing:border-box;box-shadow:inset 1px 1px #404040, inset -1px -1px #D6D3CE;"></div>
<div style="left:377px;top:445px;width:80px;height:19px;background:#FFFFFF;border-style:solid;border-width:1px;border-color:#808080 #FFFFFF #FFFFFF #808080;box-sizing:border-box;box-shadow:inset 1px 1px #404040, inset -1px -1px #D6D3CE;"></div>
<div style="left:457px;top:445px;width:80px;height:19px;background:#E0DFE3;border-style:solid;border-width:1px;border-color:#808080 #FFFFFF #FFFFFF #808080;box-sizing:border-box;box-shadow:inset 1px 1px #404040, inset -1px -1px #D6D3CE;"></div>
<div style="left:537px;top:445px;width:115px;height:19px;background:#FFFFFF;border-style:solid;border-width:1px;border-color:#808080 #FFFFFF #FFFFFF #808080;box-sizing:border-box;box-shadow:inset 1px 1px #404040, inset -1px -1px #D6D3CE;"></div>
<div style="left:671px;top:445px;width:104px;height:19px;background:#C8C8C8;border-style:solid;border-width:1px;border-color:#808080 #FFFFFF #FFFFFF #808080;box-sizing:border-box;box-shadow:inset 1px 1px #404040, inset -1px -1px #D6D3CE;"></div>
<div style="left:652px;top:445px;width:19px;height:19px;background:#D6D3CE;border-style:solid;border-width:0 1px 1px 0;border-color:#404040;box-sizing:border-box;box-shadow:inset -1px -1px #808080;"></div>
<svg style="left:652px;top:445px" width="19" height="19" viewBox="0 0 19 19" shape-rendering="crispEdges"><path d="M2.5 4.5 h3 l1 1 h6 l1 3 v3 l-2 3 h-9z" fill="#f0f040"/><path d="M6 13.5 l5 -4 h2.5 l-2 4z" fill="#b8b0c8"/><rect x="2" y="4" width="1" height="1" fill="#404040"/><rect x="4" y="4" width="1" height="1" fill="#404040"/><rect x="2" y="6" width="1" height="1" fill="#404040"/><rect x="2" y="8" width="1" height="1" fill="#404040"/><rect x="2" y="10" width="1" height="1" fill="#404040"/><rect x="2" y="12" width="1" height="1" fill="#404040"/><rect x="3" y="14" width="1" height="1" fill="#404040"/><rect x="5" y="14" width="1" height="1" fill="#404040"/><rect x="7" y="14" width="1" height="1" fill="#404040"/><rect x="9" y="14" width="1" height="1" fill="#404040"/><rect x="11" y="14" width="1" height="1" fill="#404040"/><rect x="6" y="5" width="1" height="1" fill="#404040"/><rect x="8" y="5" width="1" height="1" fill="#404040"/><rect x="10" y="5" width="1" height="1" fill="#404040"/><rect x="12" y="6" width="1" height="1" fill="#404040"/><rect x="13" y="8" width="1" height="1" fill="#404040"/><rect x="13" y="10" width="1" height="1" fill="#404040"/><rect x="12" y="12" width="1" height="1" fill="#404040"/><rect x="4" y="13" width="1" height="1" fill="#404040"/><rect x="6" y="12" width="1" height="1" fill="#404040"/><rect x="8" y="11" width="1" height="1" fill="#404040"/><rect x="10" y="10" width="1" height="1" fill="#404040"/><rect x="10" y="2" width="1" height="1" fill="#000"/><rect x="11" y="1" width="1" height="1" fill="#000"/><rect x="13" y="1" width="1" height="1" fill="#000"/><rect x="14" y="2" width="1" height="1" fill="#000"/><rect x="15" y="3" width="1" height="1" fill="#000"/><rect x="16" y="2" width="1" height="1" fill="#000"/><rect x="14" y="4" width="1" height="1" fill="#000"/><rect x="16" y="4" width="1" height="1" fill="#000"/></svg>
<div style="left:109px;top:472px;width:282px;height:24px;background:#D6D3CE;border-style:solid;border-width:1px;border-color:#FFFFFF #404040 #404040 #FFFFFF;box-sizing:border-box;box-shadow:inset -1px -1px #808080;"></div>
<div class="t" style="left:119.5px;top:476px;font-size:13px;line-height:15px;color:#000;letter-spacing:-0.11px;">Процент канализации через данный выпуск</div>
<div style="left:391px;top:472px;width:70px;height:24px;background:#D6D3CE;border-style:solid;border-width:1px;border-color:#FFFFFF #404040 #404040 #FFFFFF;box-sizing:border-box;box-shadow:inset -1px -1px #808080;"></div>
<div class="t" style="left:399.5px;top:476px;font-size:13px;line-height:15px;color:#000;letter-spacing:-0.1px;">Диаметр</div>
<div style="left:463px;top:472px;width:114px;height:24px;background:#D6D3CE;border-style:solid;border-width:1px;border-color:#FFFFFF #404040 #404040 #FFFFFF;box-sizing:border-box;box-shadow:inset -1px -1px #808080;"></div>
<div class="t" style="left:468.5px;top:476px;font-size:13px;line-height:15px;color:#000;letter-spacing:-0.1px;">Бухгал-кие счета</div>
<div class="t" style="left:601px;top:477px;font-size:12px;line-height:14px;color:#000;">Ид. потребителя</div>
<div style="left:701px;top:475px;width:75px;height:19px;background:#C8C8C8;border-style:solid;border-width:1px;border-color:#808080 #FFFFFF #FFFFFF #808080;box-sizing:border-box;box-shadow:inset 1px 1px #404040, inset -1px -1px #D6D3CE;"></div>
<div class="t" style="left:701px;width:73px;text-align:right;top:477px;font-size:12px;line-height:14px;color:#000">77728702</div>
</body></html>
